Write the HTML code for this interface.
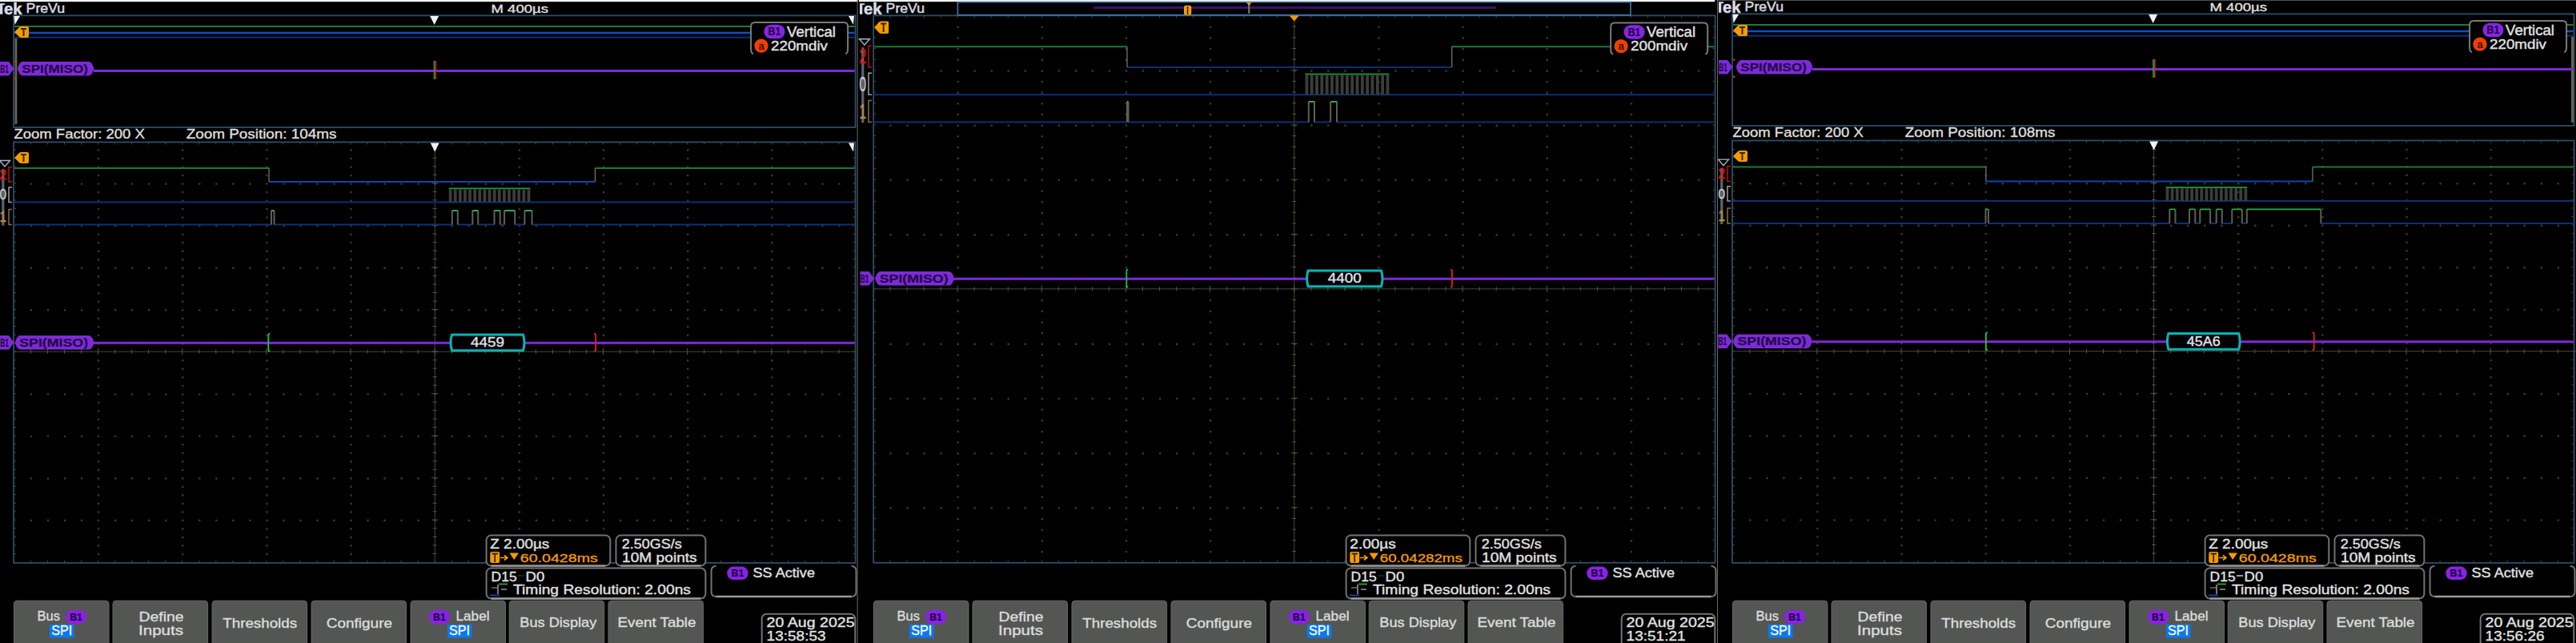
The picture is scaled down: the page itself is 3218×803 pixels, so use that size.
<!DOCTYPE html><html><head><meta charset="utf-8"><style>html,body{margin:0;padding:0;background:#000;overflow:hidden}svg{display:block}</style></head><body><svg width="3218" height="803" viewBox="0 0 3218 803" font-family='"Liberation Sans", sans-serif'>
<rect x="0.00" y="0.00" width="3218.00" height="803.00" rx="0" fill="#000" stroke="none" stroke-width="1" />
<rect x="-1.00" y="0.00" width="1073.00" height="2.20" rx="0" fill="#f2f2f2" stroke="none" stroke-width="1" />
<rect x="0.00" y="4.20" width="3.30" height="13.60" rx="0" fill="#d8d8e0" stroke="none" stroke-width="1" />
<rect x="3.00" y="4.20" width="3.20" height="2.00" rx="0" fill="#c8c8d0" stroke="none" stroke-width="1" />
<text x="5.00" y="17.80" font-size="19.5" fill="#dcdce4" font-weight="bold" text-anchor="start" textLength="22.5" lengthAdjust="spacingAndGlyphs" stroke="#dcdce4" stroke-width="0.5">ek</text>
<text x="32.60" y="15.90" font-size="17" fill="#d8d8e0" font-weight="normal" text-anchor="start" textLength="48.5" lengthAdjust="spacingAndGlyphs" stroke="#d8d8e0" stroke-width="0.5">PreVu</text>
<text x="613.50" y="15.50" font-size="15.5" fill="#e0e0e0" font-weight="normal" text-anchor="start" textLength="71.5" lengthAdjust="spacingAndGlyphs" stroke="#e0e0e0" stroke-width="0.34" >M 400µs</text>
<rect x="17.00" y="19.40" width="1051.60" height="139.60" rx="0" fill="none" stroke="#2f4d68" stroke-width="1.8" />
<line x1="18.00" y1="33.00" x2="1067.60" y2="33.00" stroke="#1c7a36" stroke-width="2" />
<line x1="18.00" y1="41.00" x2="1067.60" y2="41.00" stroke="#0d4ec4" stroke-width="2.4" />
<line x1="18.00" y1="46.70" x2="1067.60" y2="46.70" stroke="#0a3078" stroke-width="2" />
<rect x="18.50" y="48.00" width="2.80" height="107.00" rx="0" fill="#6b6650" stroke="none" stroke-width="1" />
<line x1="117.00" y1="88.60" x2="1067.60" y2="88.60" stroke="#7d2bd6" stroke-width="3" />
<path d="M542.50 76.00V99.00" fill="none" stroke="#20b040" stroke-width="1.6" />
<path d="M544.30 76.00V99.00" fill="none" stroke="#d02020" stroke-width="1.6" />
<path d="M27.80 77.00H111.40Q115.40 78.00 117.40 85.75Q115.40 93.50 111.40 94.50H27.80Q23.80 93.50 21.80 85.75Q23.80 78.00 27.80 77.00Z" fill="#7d2bd6" stroke="none" stroke-width="1" />
<text x="27.30" y="91.05" font-size="15.3" fill="#240848" font-weight="bold" text-anchor="start" textLength="82.6" lengthAdjust="spacingAndGlyphs" stroke="#240848" stroke-width="0.2">SPI(MISO)</text>
<path d="M0.00 77.00H11.00L17.50 85.75L11.00 94.50H0.00Z" fill="#7d2bd6" stroke="none" stroke-width="1" />
<text x="0.30" y="90.75" font-size="14" fill="#240848" font-weight="bold" text-anchor="start" textLength="10.5" lengthAdjust="spacingAndGlyphs" stroke="#240848" stroke-width="0.2">B1</text>
<path d="M18.00 40.00L24.00 34.00Q25.00 33.00 27.00 33.00H34.00Q36.00 33.00 36.00 35.00V45.00Q36.00 47.00 34.00 47.00H27.00Q25.00 47.00 24.00 46.00Z" fill="#f59b00" stroke="none" stroke-width="1" />
<path d="M26.00 36.00H33.00M29.50 36.00V45.00" fill="none" stroke="#3a2600" stroke-width="2" />
<circle cx="19.20" cy="76.80" r="1.3" fill="#d03020"/><circle cx="19.20" cy="97.90" r="1.3" fill="#d03020"/>
<path d="M17.50 20.00H25.00L18.50 31.00Z" fill="#f0f0ff" stroke="none" stroke-width="1" />
<path d="M537.10 20.00H548.10L542.60 31.00Z" fill="#f0f0ff" stroke="none" stroke-width="1" />
<path d="M1060.00 20.00H1067.00L1066.00 31.00Z" fill="#f0f0ff" stroke="none" stroke-width="1" />
<rect x="939.10" y="29.10" width="119" height="37" fill="#000"/>
<path d="M938.10 61.10V33.10Q938.10 28.10 943.10 28.10H1054.10Q1059.10 28.10 1059.10 33.10V61.10M938.10 61.10Q938.10 67.10 941.10 67.10M1059.10 61.10Q1059.10 67.10 1056.10 67.10" fill="none" stroke="#7a7a7a" stroke-width="2"/>
<rect x="954.40" y="30.70" width="26.10" height="17.50" rx="8.75" fill="#8a22e6" stroke="none" stroke-width="1" />
<text x="967.45" y="44.13" font-size="14.3" fill="#1a0640" font-weight="bold" text-anchor="middle" textLength="15.7" lengthAdjust="spacingAndGlyphs" stroke="#1a0640" stroke-width="0.2">B1</text>
<text x="983.00" y="45.70" font-size="18.5" fill="#e0e0e0" font-weight="normal" text-anchor="start" textLength="61.0" lengthAdjust="spacingAndGlyphs" stroke="#e0e0e0" stroke-width="0.41" >Vertical</text>
<circle cx="951.00" cy="57.20" r="8.6" fill="#f04000"/>
<text x="951.00" y="61.50" font-size="13" fill="#2a0a00" font-weight="normal" text-anchor="middle" stroke="#2a0a00" stroke-width="0.29" >a</text>
<text x="963.00" y="62.80" font-size="16.5" fill="#e0e0e0" font-weight="normal" text-anchor="start" textLength="71.0" lengthAdjust="spacingAndGlyphs" stroke="#e0e0e0" stroke-width="0.36" >220mdiv</text>
<text x="17.50" y="173.30" font-size="16.8" fill="#dedede" font-weight="normal" text-anchor="start" textLength="163.3" lengthAdjust="spacingAndGlyphs" stroke="#dedede" stroke-width="0.37" >Zoom Factor: 200 X</text>
<text x="232.70" y="173.30" font-size="16.8" fill="#dedede" font-weight="normal" text-anchor="start" textLength="187.8" lengthAdjust="spacingAndGlyphs" stroke="#dedede" stroke-width="0.37" >Zoom Position: 104ms</text>
<path d="M37.73 228.40h2.4v2.4h-2.4zM58.76 228.40h2.4v2.4h-2.4zM79.80 228.40h2.4v2.4h-2.4zM100.83 228.40h2.4v2.4h-2.4zM121.86 228.40h2.4v2.4h-2.4zM142.89 228.40h2.4v2.4h-2.4zM163.92 228.40h2.4v2.4h-2.4zM184.96 228.40h2.4v2.4h-2.4zM205.99 228.40h2.4v2.4h-2.4zM227.02 228.40h2.4v2.4h-2.4zM248.05 228.40h2.4v2.4h-2.4zM269.08 228.40h2.4v2.4h-2.4zM290.12 228.40h2.4v2.4h-2.4zM311.15 228.40h2.4v2.4h-2.4zM332.18 228.40h2.4v2.4h-2.4zM353.21 228.40h2.4v2.4h-2.4zM374.24 228.40h2.4v2.4h-2.4zM395.28 228.40h2.4v2.4h-2.4zM416.31 228.40h2.4v2.4h-2.4zM437.34 228.40h2.4v2.4h-2.4zM458.37 228.40h2.4v2.4h-2.4zM479.40 228.40h2.4v2.4h-2.4zM500.44 228.40h2.4v2.4h-2.4zM521.47 228.40h2.4v2.4h-2.4zM542.50 228.40h2.4v2.4h-2.4zM563.53 228.40h2.4v2.4h-2.4zM584.56 228.40h2.4v2.4h-2.4zM605.60 228.40h2.4v2.4h-2.4zM626.63 228.40h2.4v2.4h-2.4zM647.66 228.40h2.4v2.4h-2.4zM668.69 228.40h2.4v2.4h-2.4zM689.72 228.40h2.4v2.4h-2.4zM710.76 228.40h2.4v2.4h-2.4zM731.79 228.40h2.4v2.4h-2.4zM752.82 228.40h2.4v2.4h-2.4zM773.85 228.40h2.4v2.4h-2.4zM794.88 228.40h2.4v2.4h-2.4zM815.92 228.40h2.4v2.4h-2.4zM836.95 228.40h2.4v2.4h-2.4zM857.98 228.40h2.4v2.4h-2.4zM879.01 228.40h2.4v2.4h-2.4zM900.04 228.40h2.4v2.4h-2.4zM921.08 228.40h2.4v2.4h-2.4zM942.11 228.40h2.4v2.4h-2.4zM963.14 228.40h2.4v2.4h-2.4zM984.17 228.40h2.4v2.4h-2.4zM1005.20 228.40h2.4v2.4h-2.4zM1026.24 228.40h2.4v2.4h-2.4zM1047.27 228.40h2.4v2.4h-2.4zM37.73 280.95h2.4v2.4h-2.4zM58.76 280.95h2.4v2.4h-2.4zM79.80 280.95h2.4v2.4h-2.4zM100.83 280.95h2.4v2.4h-2.4zM121.86 280.95h2.4v2.4h-2.4zM142.89 280.95h2.4v2.4h-2.4zM163.92 280.95h2.4v2.4h-2.4zM184.96 280.95h2.4v2.4h-2.4zM205.99 280.95h2.4v2.4h-2.4zM227.02 280.95h2.4v2.4h-2.4zM248.05 280.95h2.4v2.4h-2.4zM269.08 280.95h2.4v2.4h-2.4zM290.12 280.95h2.4v2.4h-2.4zM311.15 280.95h2.4v2.4h-2.4zM332.18 280.95h2.4v2.4h-2.4zM353.21 280.95h2.4v2.4h-2.4zM374.24 280.95h2.4v2.4h-2.4zM395.28 280.95h2.4v2.4h-2.4zM416.31 280.95h2.4v2.4h-2.4zM437.34 280.95h2.4v2.4h-2.4zM458.37 280.95h2.4v2.4h-2.4zM479.40 280.95h2.4v2.4h-2.4zM500.44 280.95h2.4v2.4h-2.4zM521.47 280.95h2.4v2.4h-2.4zM542.50 280.95h2.4v2.4h-2.4zM563.53 280.95h2.4v2.4h-2.4zM584.56 280.95h2.4v2.4h-2.4zM605.60 280.95h2.4v2.4h-2.4zM626.63 280.95h2.4v2.4h-2.4zM647.66 280.95h2.4v2.4h-2.4zM668.69 280.95h2.4v2.4h-2.4zM689.72 280.95h2.4v2.4h-2.4zM710.76 280.95h2.4v2.4h-2.4zM731.79 280.95h2.4v2.4h-2.4zM752.82 280.95h2.4v2.4h-2.4zM773.85 280.95h2.4v2.4h-2.4zM794.88 280.95h2.4v2.4h-2.4zM815.92 280.95h2.4v2.4h-2.4zM836.95 280.95h2.4v2.4h-2.4zM857.98 280.95h2.4v2.4h-2.4zM879.01 280.95h2.4v2.4h-2.4zM900.04 280.95h2.4v2.4h-2.4zM921.08 280.95h2.4v2.4h-2.4zM942.11 280.95h2.4v2.4h-2.4zM963.14 280.95h2.4v2.4h-2.4zM984.17 280.95h2.4v2.4h-2.4zM1005.20 280.95h2.4v2.4h-2.4zM1026.24 280.95h2.4v2.4h-2.4zM1047.27 280.95h2.4v2.4h-2.4zM37.73 333.50h2.4v2.4h-2.4zM58.76 333.50h2.4v2.4h-2.4zM79.80 333.50h2.4v2.4h-2.4zM100.83 333.50h2.4v2.4h-2.4zM121.86 333.50h2.4v2.4h-2.4zM142.89 333.50h2.4v2.4h-2.4zM163.92 333.50h2.4v2.4h-2.4zM184.96 333.50h2.4v2.4h-2.4zM205.99 333.50h2.4v2.4h-2.4zM227.02 333.50h2.4v2.4h-2.4zM248.05 333.50h2.4v2.4h-2.4zM269.08 333.50h2.4v2.4h-2.4zM290.12 333.50h2.4v2.4h-2.4zM311.15 333.50h2.4v2.4h-2.4zM332.18 333.50h2.4v2.4h-2.4zM353.21 333.50h2.4v2.4h-2.4zM374.24 333.50h2.4v2.4h-2.4zM395.28 333.50h2.4v2.4h-2.4zM416.31 333.50h2.4v2.4h-2.4zM437.34 333.50h2.4v2.4h-2.4zM458.37 333.50h2.4v2.4h-2.4zM479.40 333.50h2.4v2.4h-2.4zM500.44 333.50h2.4v2.4h-2.4zM521.47 333.50h2.4v2.4h-2.4zM542.50 333.50h2.4v2.4h-2.4zM563.53 333.50h2.4v2.4h-2.4zM584.56 333.50h2.4v2.4h-2.4zM605.60 333.50h2.4v2.4h-2.4zM626.63 333.50h2.4v2.4h-2.4zM647.66 333.50h2.4v2.4h-2.4zM668.69 333.50h2.4v2.4h-2.4zM689.72 333.50h2.4v2.4h-2.4zM710.76 333.50h2.4v2.4h-2.4zM731.79 333.50h2.4v2.4h-2.4zM752.82 333.50h2.4v2.4h-2.4zM773.85 333.50h2.4v2.4h-2.4zM794.88 333.50h2.4v2.4h-2.4zM815.92 333.50h2.4v2.4h-2.4zM836.95 333.50h2.4v2.4h-2.4zM857.98 333.50h2.4v2.4h-2.4zM879.01 333.50h2.4v2.4h-2.4zM900.04 333.50h2.4v2.4h-2.4zM921.08 333.50h2.4v2.4h-2.4zM942.11 333.50h2.4v2.4h-2.4zM963.14 333.50h2.4v2.4h-2.4zM984.17 333.50h2.4v2.4h-2.4zM1005.20 333.50h2.4v2.4h-2.4zM1026.24 333.50h2.4v2.4h-2.4zM1047.27 333.50h2.4v2.4h-2.4zM37.73 386.05h2.4v2.4h-2.4zM58.76 386.05h2.4v2.4h-2.4zM79.80 386.05h2.4v2.4h-2.4zM100.83 386.05h2.4v2.4h-2.4zM121.86 386.05h2.4v2.4h-2.4zM142.89 386.05h2.4v2.4h-2.4zM163.92 386.05h2.4v2.4h-2.4zM184.96 386.05h2.4v2.4h-2.4zM205.99 386.05h2.4v2.4h-2.4zM227.02 386.05h2.4v2.4h-2.4zM248.05 386.05h2.4v2.4h-2.4zM269.08 386.05h2.4v2.4h-2.4zM290.12 386.05h2.4v2.4h-2.4zM311.15 386.05h2.4v2.4h-2.4zM332.18 386.05h2.4v2.4h-2.4zM353.21 386.05h2.4v2.4h-2.4zM374.24 386.05h2.4v2.4h-2.4zM395.28 386.05h2.4v2.4h-2.4zM416.31 386.05h2.4v2.4h-2.4zM437.34 386.05h2.4v2.4h-2.4zM458.37 386.05h2.4v2.4h-2.4zM479.40 386.05h2.4v2.4h-2.4zM500.44 386.05h2.4v2.4h-2.4zM521.47 386.05h2.4v2.4h-2.4zM542.50 386.05h2.4v2.4h-2.4zM563.53 386.05h2.4v2.4h-2.4zM584.56 386.05h2.4v2.4h-2.4zM605.60 386.05h2.4v2.4h-2.4zM626.63 386.05h2.4v2.4h-2.4zM647.66 386.05h2.4v2.4h-2.4zM668.69 386.05h2.4v2.4h-2.4zM689.72 386.05h2.4v2.4h-2.4zM710.76 386.05h2.4v2.4h-2.4zM731.79 386.05h2.4v2.4h-2.4zM752.82 386.05h2.4v2.4h-2.4zM773.85 386.05h2.4v2.4h-2.4zM794.88 386.05h2.4v2.4h-2.4zM815.92 386.05h2.4v2.4h-2.4zM836.95 386.05h2.4v2.4h-2.4zM857.98 386.05h2.4v2.4h-2.4zM879.01 386.05h2.4v2.4h-2.4zM900.04 386.05h2.4v2.4h-2.4zM921.08 386.05h2.4v2.4h-2.4zM942.11 386.05h2.4v2.4h-2.4zM963.14 386.05h2.4v2.4h-2.4zM984.17 386.05h2.4v2.4h-2.4zM1005.20 386.05h2.4v2.4h-2.4zM1026.24 386.05h2.4v2.4h-2.4zM1047.27 386.05h2.4v2.4h-2.4zM37.73 491.15h2.4v2.4h-2.4zM58.76 491.15h2.4v2.4h-2.4zM79.80 491.15h2.4v2.4h-2.4zM100.83 491.15h2.4v2.4h-2.4zM121.86 491.15h2.4v2.4h-2.4zM142.89 491.15h2.4v2.4h-2.4zM163.92 491.15h2.4v2.4h-2.4zM184.96 491.15h2.4v2.4h-2.4zM205.99 491.15h2.4v2.4h-2.4zM227.02 491.15h2.4v2.4h-2.4zM248.05 491.15h2.4v2.4h-2.4zM269.08 491.15h2.4v2.4h-2.4zM290.12 491.15h2.4v2.4h-2.4zM311.15 491.15h2.4v2.4h-2.4zM332.18 491.15h2.4v2.4h-2.4zM353.21 491.15h2.4v2.4h-2.4zM374.24 491.15h2.4v2.4h-2.4zM395.28 491.15h2.4v2.4h-2.4zM416.31 491.15h2.4v2.4h-2.4zM437.34 491.15h2.4v2.4h-2.4zM458.37 491.15h2.4v2.4h-2.4zM479.40 491.15h2.4v2.4h-2.4zM500.44 491.15h2.4v2.4h-2.4zM521.47 491.15h2.4v2.4h-2.4zM542.50 491.15h2.4v2.4h-2.4zM563.53 491.15h2.4v2.4h-2.4zM584.56 491.15h2.4v2.4h-2.4zM605.60 491.15h2.4v2.4h-2.4zM626.63 491.15h2.4v2.4h-2.4zM647.66 491.15h2.4v2.4h-2.4zM668.69 491.15h2.4v2.4h-2.4zM689.72 491.15h2.4v2.4h-2.4zM710.76 491.15h2.4v2.4h-2.4zM731.79 491.15h2.4v2.4h-2.4zM752.82 491.15h2.4v2.4h-2.4zM773.85 491.15h2.4v2.4h-2.4zM794.88 491.15h2.4v2.4h-2.4zM815.92 491.15h2.4v2.4h-2.4zM836.95 491.15h2.4v2.4h-2.4zM857.98 491.15h2.4v2.4h-2.4zM879.01 491.15h2.4v2.4h-2.4zM900.04 491.15h2.4v2.4h-2.4zM921.08 491.15h2.4v2.4h-2.4zM942.11 491.15h2.4v2.4h-2.4zM963.14 491.15h2.4v2.4h-2.4zM984.17 491.15h2.4v2.4h-2.4zM1005.20 491.15h2.4v2.4h-2.4zM1026.24 491.15h2.4v2.4h-2.4zM1047.27 491.15h2.4v2.4h-2.4zM37.73 543.70h2.4v2.4h-2.4zM58.76 543.70h2.4v2.4h-2.4zM79.80 543.70h2.4v2.4h-2.4zM100.83 543.70h2.4v2.4h-2.4zM121.86 543.70h2.4v2.4h-2.4zM142.89 543.70h2.4v2.4h-2.4zM163.92 543.70h2.4v2.4h-2.4zM184.96 543.70h2.4v2.4h-2.4zM205.99 543.70h2.4v2.4h-2.4zM227.02 543.70h2.4v2.4h-2.4zM248.05 543.70h2.4v2.4h-2.4zM269.08 543.70h2.4v2.4h-2.4zM290.12 543.70h2.4v2.4h-2.4zM311.15 543.70h2.4v2.4h-2.4zM332.18 543.70h2.4v2.4h-2.4zM353.21 543.70h2.4v2.4h-2.4zM374.24 543.70h2.4v2.4h-2.4zM395.28 543.70h2.4v2.4h-2.4zM416.31 543.70h2.4v2.4h-2.4zM437.34 543.70h2.4v2.4h-2.4zM458.37 543.70h2.4v2.4h-2.4zM479.40 543.70h2.4v2.4h-2.4zM500.44 543.70h2.4v2.4h-2.4zM521.47 543.70h2.4v2.4h-2.4zM542.50 543.70h2.4v2.4h-2.4zM563.53 543.70h2.4v2.4h-2.4zM584.56 543.70h2.4v2.4h-2.4zM605.60 543.70h2.4v2.4h-2.4zM626.63 543.70h2.4v2.4h-2.4zM647.66 543.70h2.4v2.4h-2.4zM668.69 543.70h2.4v2.4h-2.4zM689.72 543.70h2.4v2.4h-2.4zM710.76 543.70h2.4v2.4h-2.4zM731.79 543.70h2.4v2.4h-2.4zM752.82 543.70h2.4v2.4h-2.4zM773.85 543.70h2.4v2.4h-2.4zM794.88 543.70h2.4v2.4h-2.4zM815.92 543.70h2.4v2.4h-2.4zM836.95 543.70h2.4v2.4h-2.4zM857.98 543.70h2.4v2.4h-2.4zM879.01 543.70h2.4v2.4h-2.4zM900.04 543.70h2.4v2.4h-2.4zM921.08 543.70h2.4v2.4h-2.4zM942.11 543.70h2.4v2.4h-2.4zM963.14 543.70h2.4v2.4h-2.4zM984.17 543.70h2.4v2.4h-2.4zM1005.20 543.70h2.4v2.4h-2.4zM1026.24 543.70h2.4v2.4h-2.4zM1047.27 543.70h2.4v2.4h-2.4zM37.73 596.25h2.4v2.4h-2.4zM58.76 596.25h2.4v2.4h-2.4zM79.80 596.25h2.4v2.4h-2.4zM100.83 596.25h2.4v2.4h-2.4zM121.86 596.25h2.4v2.4h-2.4zM142.89 596.25h2.4v2.4h-2.4zM163.92 596.25h2.4v2.4h-2.4zM184.96 596.25h2.4v2.4h-2.4zM205.99 596.25h2.4v2.4h-2.4zM227.02 596.25h2.4v2.4h-2.4zM248.05 596.25h2.4v2.4h-2.4zM269.08 596.25h2.4v2.4h-2.4zM290.12 596.25h2.4v2.4h-2.4zM311.15 596.25h2.4v2.4h-2.4zM332.18 596.25h2.4v2.4h-2.4zM353.21 596.25h2.4v2.4h-2.4zM374.24 596.25h2.4v2.4h-2.4zM395.28 596.25h2.4v2.4h-2.4zM416.31 596.25h2.4v2.4h-2.4zM437.34 596.25h2.4v2.4h-2.4zM458.37 596.25h2.4v2.4h-2.4zM479.40 596.25h2.4v2.4h-2.4zM500.44 596.25h2.4v2.4h-2.4zM521.47 596.25h2.4v2.4h-2.4zM542.50 596.25h2.4v2.4h-2.4zM563.53 596.25h2.4v2.4h-2.4zM584.56 596.25h2.4v2.4h-2.4zM605.60 596.25h2.4v2.4h-2.4zM626.63 596.25h2.4v2.4h-2.4zM647.66 596.25h2.4v2.4h-2.4zM668.69 596.25h2.4v2.4h-2.4zM689.72 596.25h2.4v2.4h-2.4zM710.76 596.25h2.4v2.4h-2.4zM731.79 596.25h2.4v2.4h-2.4zM752.82 596.25h2.4v2.4h-2.4zM773.85 596.25h2.4v2.4h-2.4zM794.88 596.25h2.4v2.4h-2.4zM815.92 596.25h2.4v2.4h-2.4zM836.95 596.25h2.4v2.4h-2.4zM857.98 596.25h2.4v2.4h-2.4zM879.01 596.25h2.4v2.4h-2.4zM900.04 596.25h2.4v2.4h-2.4zM921.08 596.25h2.4v2.4h-2.4zM942.11 596.25h2.4v2.4h-2.4zM963.14 596.25h2.4v2.4h-2.4zM984.17 596.25h2.4v2.4h-2.4zM1005.20 596.25h2.4v2.4h-2.4zM1026.24 596.25h2.4v2.4h-2.4zM1047.27 596.25h2.4v2.4h-2.4zM37.73 648.80h2.4v2.4h-2.4zM58.76 648.80h2.4v2.4h-2.4zM79.80 648.80h2.4v2.4h-2.4zM100.83 648.80h2.4v2.4h-2.4zM121.86 648.80h2.4v2.4h-2.4zM142.89 648.80h2.4v2.4h-2.4zM163.92 648.80h2.4v2.4h-2.4zM184.96 648.80h2.4v2.4h-2.4zM205.99 648.80h2.4v2.4h-2.4zM227.02 648.80h2.4v2.4h-2.4zM248.05 648.80h2.4v2.4h-2.4zM269.08 648.80h2.4v2.4h-2.4zM290.12 648.80h2.4v2.4h-2.4zM311.15 648.80h2.4v2.4h-2.4zM332.18 648.80h2.4v2.4h-2.4zM353.21 648.80h2.4v2.4h-2.4zM374.24 648.80h2.4v2.4h-2.4zM395.28 648.80h2.4v2.4h-2.4zM416.31 648.80h2.4v2.4h-2.4zM437.34 648.80h2.4v2.4h-2.4zM458.37 648.80h2.4v2.4h-2.4zM479.40 648.80h2.4v2.4h-2.4zM500.44 648.80h2.4v2.4h-2.4zM521.47 648.80h2.4v2.4h-2.4zM542.50 648.80h2.4v2.4h-2.4zM563.53 648.80h2.4v2.4h-2.4zM584.56 648.80h2.4v2.4h-2.4zM605.60 648.80h2.4v2.4h-2.4zM626.63 648.80h2.4v2.4h-2.4zM647.66 648.80h2.4v2.4h-2.4zM668.69 648.80h2.4v2.4h-2.4zM689.72 648.80h2.4v2.4h-2.4zM710.76 648.80h2.4v2.4h-2.4zM731.79 648.80h2.4v2.4h-2.4zM752.82 648.80h2.4v2.4h-2.4zM773.85 648.80h2.4v2.4h-2.4zM794.88 648.80h2.4v2.4h-2.4zM815.92 648.80h2.4v2.4h-2.4zM836.95 648.80h2.4v2.4h-2.4zM857.98 648.80h2.4v2.4h-2.4zM879.01 648.80h2.4v2.4h-2.4zM900.04 648.80h2.4v2.4h-2.4zM921.08 648.80h2.4v2.4h-2.4zM942.11 648.80h2.4v2.4h-2.4zM963.14 648.80h2.4v2.4h-2.4zM984.17 648.80h2.4v2.4h-2.4zM1005.20 648.80h2.4v2.4h-2.4zM1026.24 648.80h2.4v2.4h-2.4zM1047.27 648.80h2.4v2.4h-2.4zM121.86 186.36h2.4v2.4h-2.4zM121.86 196.87h2.4v2.4h-2.4zM121.86 207.38h2.4v2.4h-2.4zM121.86 217.89h2.4v2.4h-2.4zM121.86 238.91h2.4v2.4h-2.4zM121.86 249.42h2.4v2.4h-2.4zM121.86 259.93h2.4v2.4h-2.4zM121.86 270.44h2.4v2.4h-2.4zM121.86 291.46h2.4v2.4h-2.4zM121.86 301.97h2.4v2.4h-2.4zM121.86 312.48h2.4v2.4h-2.4zM121.86 322.99h2.4v2.4h-2.4zM121.86 344.01h2.4v2.4h-2.4zM121.86 354.52h2.4v2.4h-2.4zM121.86 365.03h2.4v2.4h-2.4zM121.86 375.54h2.4v2.4h-2.4zM121.86 396.56h2.4v2.4h-2.4zM121.86 407.07h2.4v2.4h-2.4zM121.86 417.58h2.4v2.4h-2.4zM121.86 428.09h2.4v2.4h-2.4zM121.86 449.11h2.4v2.4h-2.4zM121.86 459.62h2.4v2.4h-2.4zM121.86 470.13h2.4v2.4h-2.4zM121.86 480.64h2.4v2.4h-2.4zM121.86 501.66h2.4v2.4h-2.4zM121.86 512.17h2.4v2.4h-2.4zM121.86 522.68h2.4v2.4h-2.4zM121.86 533.19h2.4v2.4h-2.4zM121.86 554.21h2.4v2.4h-2.4zM121.86 564.72h2.4v2.4h-2.4zM121.86 575.23h2.4v2.4h-2.4zM121.86 585.74h2.4v2.4h-2.4zM121.86 606.76h2.4v2.4h-2.4zM121.86 617.27h2.4v2.4h-2.4zM121.86 627.78h2.4v2.4h-2.4zM121.86 638.29h2.4v2.4h-2.4zM121.86 659.31h2.4v2.4h-2.4zM121.86 669.82h2.4v2.4h-2.4zM121.86 680.33h2.4v2.4h-2.4zM121.86 690.84h2.4v2.4h-2.4zM227.02 186.36h2.4v2.4h-2.4zM227.02 196.87h2.4v2.4h-2.4zM227.02 207.38h2.4v2.4h-2.4zM227.02 217.89h2.4v2.4h-2.4zM227.02 238.91h2.4v2.4h-2.4zM227.02 249.42h2.4v2.4h-2.4zM227.02 259.93h2.4v2.4h-2.4zM227.02 270.44h2.4v2.4h-2.4zM227.02 291.46h2.4v2.4h-2.4zM227.02 301.97h2.4v2.4h-2.4zM227.02 312.48h2.4v2.4h-2.4zM227.02 322.99h2.4v2.4h-2.4zM227.02 344.01h2.4v2.4h-2.4zM227.02 354.52h2.4v2.4h-2.4zM227.02 365.03h2.4v2.4h-2.4zM227.02 375.54h2.4v2.4h-2.4zM227.02 396.56h2.4v2.4h-2.4zM227.02 407.07h2.4v2.4h-2.4zM227.02 417.58h2.4v2.4h-2.4zM227.02 428.09h2.4v2.4h-2.4zM227.02 449.11h2.4v2.4h-2.4zM227.02 459.62h2.4v2.4h-2.4zM227.02 470.13h2.4v2.4h-2.4zM227.02 480.64h2.4v2.4h-2.4zM227.02 501.66h2.4v2.4h-2.4zM227.02 512.17h2.4v2.4h-2.4zM227.02 522.68h2.4v2.4h-2.4zM227.02 533.19h2.4v2.4h-2.4zM227.02 554.21h2.4v2.4h-2.4zM227.02 564.72h2.4v2.4h-2.4zM227.02 575.23h2.4v2.4h-2.4zM227.02 585.74h2.4v2.4h-2.4zM227.02 606.76h2.4v2.4h-2.4zM227.02 617.27h2.4v2.4h-2.4zM227.02 627.78h2.4v2.4h-2.4zM227.02 638.29h2.4v2.4h-2.4zM227.02 659.31h2.4v2.4h-2.4zM227.02 669.82h2.4v2.4h-2.4zM227.02 680.33h2.4v2.4h-2.4zM227.02 690.84h2.4v2.4h-2.4zM332.18 186.36h2.4v2.4h-2.4zM332.18 196.87h2.4v2.4h-2.4zM332.18 207.38h2.4v2.4h-2.4zM332.18 217.89h2.4v2.4h-2.4zM332.18 238.91h2.4v2.4h-2.4zM332.18 249.42h2.4v2.4h-2.4zM332.18 259.93h2.4v2.4h-2.4zM332.18 270.44h2.4v2.4h-2.4zM332.18 291.46h2.4v2.4h-2.4zM332.18 301.97h2.4v2.4h-2.4zM332.18 312.48h2.4v2.4h-2.4zM332.18 322.99h2.4v2.4h-2.4zM332.18 344.01h2.4v2.4h-2.4zM332.18 354.52h2.4v2.4h-2.4zM332.18 365.03h2.4v2.4h-2.4zM332.18 375.54h2.4v2.4h-2.4zM332.18 396.56h2.4v2.4h-2.4zM332.18 407.07h2.4v2.4h-2.4zM332.18 417.58h2.4v2.4h-2.4zM332.18 428.09h2.4v2.4h-2.4zM332.18 449.11h2.4v2.4h-2.4zM332.18 459.62h2.4v2.4h-2.4zM332.18 470.13h2.4v2.4h-2.4zM332.18 480.64h2.4v2.4h-2.4zM332.18 501.66h2.4v2.4h-2.4zM332.18 512.17h2.4v2.4h-2.4zM332.18 522.68h2.4v2.4h-2.4zM332.18 533.19h2.4v2.4h-2.4zM332.18 554.21h2.4v2.4h-2.4zM332.18 564.72h2.4v2.4h-2.4zM332.18 575.23h2.4v2.4h-2.4zM332.18 585.74h2.4v2.4h-2.4zM332.18 606.76h2.4v2.4h-2.4zM332.18 617.27h2.4v2.4h-2.4zM332.18 627.78h2.4v2.4h-2.4zM332.18 638.29h2.4v2.4h-2.4zM332.18 659.31h2.4v2.4h-2.4zM332.18 669.82h2.4v2.4h-2.4zM332.18 680.33h2.4v2.4h-2.4zM332.18 690.84h2.4v2.4h-2.4zM437.34 186.36h2.4v2.4h-2.4zM437.34 196.87h2.4v2.4h-2.4zM437.34 207.38h2.4v2.4h-2.4zM437.34 217.89h2.4v2.4h-2.4zM437.34 238.91h2.4v2.4h-2.4zM437.34 249.42h2.4v2.4h-2.4zM437.34 259.93h2.4v2.4h-2.4zM437.34 270.44h2.4v2.4h-2.4zM437.34 291.46h2.4v2.4h-2.4zM437.34 301.97h2.4v2.4h-2.4zM437.34 312.48h2.4v2.4h-2.4zM437.34 322.99h2.4v2.4h-2.4zM437.34 344.01h2.4v2.4h-2.4zM437.34 354.52h2.4v2.4h-2.4zM437.34 365.03h2.4v2.4h-2.4zM437.34 375.54h2.4v2.4h-2.4zM437.34 396.56h2.4v2.4h-2.4zM437.34 407.07h2.4v2.4h-2.4zM437.34 417.58h2.4v2.4h-2.4zM437.34 428.09h2.4v2.4h-2.4zM437.34 449.11h2.4v2.4h-2.4zM437.34 459.62h2.4v2.4h-2.4zM437.34 470.13h2.4v2.4h-2.4zM437.34 480.64h2.4v2.4h-2.4zM437.34 501.66h2.4v2.4h-2.4zM437.34 512.17h2.4v2.4h-2.4zM437.34 522.68h2.4v2.4h-2.4zM437.34 533.19h2.4v2.4h-2.4zM437.34 554.21h2.4v2.4h-2.4zM437.34 564.72h2.4v2.4h-2.4zM437.34 575.23h2.4v2.4h-2.4zM437.34 585.74h2.4v2.4h-2.4zM437.34 606.76h2.4v2.4h-2.4zM437.34 617.27h2.4v2.4h-2.4zM437.34 627.78h2.4v2.4h-2.4zM437.34 638.29h2.4v2.4h-2.4zM437.34 659.31h2.4v2.4h-2.4zM437.34 669.82h2.4v2.4h-2.4zM437.34 680.33h2.4v2.4h-2.4zM437.34 690.84h2.4v2.4h-2.4zM647.66 186.36h2.4v2.4h-2.4zM647.66 196.87h2.4v2.4h-2.4zM647.66 207.38h2.4v2.4h-2.4zM647.66 217.89h2.4v2.4h-2.4zM647.66 238.91h2.4v2.4h-2.4zM647.66 249.42h2.4v2.4h-2.4zM647.66 259.93h2.4v2.4h-2.4zM647.66 270.44h2.4v2.4h-2.4zM647.66 291.46h2.4v2.4h-2.4zM647.66 301.97h2.4v2.4h-2.4zM647.66 312.48h2.4v2.4h-2.4zM647.66 322.99h2.4v2.4h-2.4zM647.66 344.01h2.4v2.4h-2.4zM647.66 354.52h2.4v2.4h-2.4zM647.66 365.03h2.4v2.4h-2.4zM647.66 375.54h2.4v2.4h-2.4zM647.66 396.56h2.4v2.4h-2.4zM647.66 407.07h2.4v2.4h-2.4zM647.66 417.58h2.4v2.4h-2.4zM647.66 428.09h2.4v2.4h-2.4zM647.66 449.11h2.4v2.4h-2.4zM647.66 459.62h2.4v2.4h-2.4zM647.66 470.13h2.4v2.4h-2.4zM647.66 480.64h2.4v2.4h-2.4zM647.66 501.66h2.4v2.4h-2.4zM647.66 512.17h2.4v2.4h-2.4zM647.66 522.68h2.4v2.4h-2.4zM647.66 533.19h2.4v2.4h-2.4zM647.66 554.21h2.4v2.4h-2.4zM647.66 564.72h2.4v2.4h-2.4zM647.66 575.23h2.4v2.4h-2.4zM647.66 585.74h2.4v2.4h-2.4zM647.66 606.76h2.4v2.4h-2.4zM647.66 617.27h2.4v2.4h-2.4zM647.66 627.78h2.4v2.4h-2.4zM647.66 638.29h2.4v2.4h-2.4zM647.66 659.31h2.4v2.4h-2.4zM647.66 669.82h2.4v2.4h-2.4zM647.66 680.33h2.4v2.4h-2.4zM647.66 690.84h2.4v2.4h-2.4zM752.82 186.36h2.4v2.4h-2.4zM752.82 196.87h2.4v2.4h-2.4zM752.82 207.38h2.4v2.4h-2.4zM752.82 217.89h2.4v2.4h-2.4zM752.82 238.91h2.4v2.4h-2.4zM752.82 249.42h2.4v2.4h-2.4zM752.82 259.93h2.4v2.4h-2.4zM752.82 270.44h2.4v2.4h-2.4zM752.82 291.46h2.4v2.4h-2.4zM752.82 301.97h2.4v2.4h-2.4zM752.82 312.48h2.4v2.4h-2.4zM752.82 322.99h2.4v2.4h-2.4zM752.82 344.01h2.4v2.4h-2.4zM752.82 354.52h2.4v2.4h-2.4zM752.82 365.03h2.4v2.4h-2.4zM752.82 375.54h2.4v2.4h-2.4zM752.82 396.56h2.4v2.4h-2.4zM752.82 407.07h2.4v2.4h-2.4zM752.82 417.58h2.4v2.4h-2.4zM752.82 428.09h2.4v2.4h-2.4zM752.82 449.11h2.4v2.4h-2.4zM752.82 459.62h2.4v2.4h-2.4zM752.82 470.13h2.4v2.4h-2.4zM752.82 480.64h2.4v2.4h-2.4zM752.82 501.66h2.4v2.4h-2.4zM752.82 512.17h2.4v2.4h-2.4zM752.82 522.68h2.4v2.4h-2.4zM752.82 533.19h2.4v2.4h-2.4zM752.82 554.21h2.4v2.4h-2.4zM752.82 564.72h2.4v2.4h-2.4zM752.82 575.23h2.4v2.4h-2.4zM752.82 585.74h2.4v2.4h-2.4zM752.82 606.76h2.4v2.4h-2.4zM752.82 617.27h2.4v2.4h-2.4zM752.82 627.78h2.4v2.4h-2.4zM752.82 638.29h2.4v2.4h-2.4zM752.82 659.31h2.4v2.4h-2.4zM752.82 669.82h2.4v2.4h-2.4zM752.82 680.33h2.4v2.4h-2.4zM752.82 690.84h2.4v2.4h-2.4zM857.98 186.36h2.4v2.4h-2.4zM857.98 196.87h2.4v2.4h-2.4zM857.98 207.38h2.4v2.4h-2.4zM857.98 217.89h2.4v2.4h-2.4zM857.98 238.91h2.4v2.4h-2.4zM857.98 249.42h2.4v2.4h-2.4zM857.98 259.93h2.4v2.4h-2.4zM857.98 270.44h2.4v2.4h-2.4zM857.98 291.46h2.4v2.4h-2.4zM857.98 301.97h2.4v2.4h-2.4zM857.98 312.48h2.4v2.4h-2.4zM857.98 322.99h2.4v2.4h-2.4zM857.98 344.01h2.4v2.4h-2.4zM857.98 354.52h2.4v2.4h-2.4zM857.98 365.03h2.4v2.4h-2.4zM857.98 375.54h2.4v2.4h-2.4zM857.98 396.56h2.4v2.4h-2.4zM857.98 407.07h2.4v2.4h-2.4zM857.98 417.58h2.4v2.4h-2.4zM857.98 428.09h2.4v2.4h-2.4zM857.98 449.11h2.4v2.4h-2.4zM857.98 459.62h2.4v2.4h-2.4zM857.98 470.13h2.4v2.4h-2.4zM857.98 480.64h2.4v2.4h-2.4zM857.98 501.66h2.4v2.4h-2.4zM857.98 512.17h2.4v2.4h-2.4zM857.98 522.68h2.4v2.4h-2.4zM857.98 533.19h2.4v2.4h-2.4zM857.98 554.21h2.4v2.4h-2.4zM857.98 564.72h2.4v2.4h-2.4zM857.98 575.23h2.4v2.4h-2.4zM857.98 585.74h2.4v2.4h-2.4zM857.98 606.76h2.4v2.4h-2.4zM857.98 617.27h2.4v2.4h-2.4zM857.98 627.78h2.4v2.4h-2.4zM857.98 638.29h2.4v2.4h-2.4zM857.98 659.31h2.4v2.4h-2.4zM857.98 669.82h2.4v2.4h-2.4zM857.98 680.33h2.4v2.4h-2.4zM857.98 690.84h2.4v2.4h-2.4zM963.14 186.36h2.4v2.4h-2.4zM963.14 196.87h2.4v2.4h-2.4zM963.14 207.38h2.4v2.4h-2.4zM963.14 217.89h2.4v2.4h-2.4zM963.14 238.91h2.4v2.4h-2.4zM963.14 249.42h2.4v2.4h-2.4zM963.14 259.93h2.4v2.4h-2.4zM963.14 270.44h2.4v2.4h-2.4zM963.14 291.46h2.4v2.4h-2.4zM963.14 301.97h2.4v2.4h-2.4zM963.14 312.48h2.4v2.4h-2.4zM963.14 322.99h2.4v2.4h-2.4zM963.14 344.01h2.4v2.4h-2.4zM963.14 354.52h2.4v2.4h-2.4zM963.14 365.03h2.4v2.4h-2.4zM963.14 375.54h2.4v2.4h-2.4zM963.14 396.56h2.4v2.4h-2.4zM963.14 407.07h2.4v2.4h-2.4zM963.14 417.58h2.4v2.4h-2.4zM963.14 428.09h2.4v2.4h-2.4zM963.14 449.11h2.4v2.4h-2.4zM963.14 459.62h2.4v2.4h-2.4zM963.14 470.13h2.4v2.4h-2.4zM963.14 480.64h2.4v2.4h-2.4zM963.14 501.66h2.4v2.4h-2.4zM963.14 512.17h2.4v2.4h-2.4zM963.14 522.68h2.4v2.4h-2.4zM963.14 533.19h2.4v2.4h-2.4zM963.14 554.21h2.4v2.4h-2.4zM963.14 564.72h2.4v2.4h-2.4zM963.14 575.23h2.4v2.4h-2.4zM963.14 585.74h2.4v2.4h-2.4zM963.14 606.76h2.4v2.4h-2.4zM963.14 617.27h2.4v2.4h-2.4zM963.14 627.78h2.4v2.4h-2.4zM963.14 638.29h2.4v2.4h-2.4zM963.14 659.31h2.4v2.4h-2.4zM963.14 669.82h2.4v2.4h-2.4zM963.14 680.33h2.4v2.4h-2.4zM963.14 690.84h2.4v2.4h-2.4z" fill="#3a372a" stroke="none" stroke-width="1" />
<line x1="17.00" y1="439.10" x2="1068.60" y2="439.10" stroke="#4a4636" stroke-width="1" />
<line x1="543.20" y1="177.50" x2="543.20" y2="703.00" stroke="#4a4636" stroke-width="1" />
<path d="M38.43 436.60v5.00M59.46 436.60v5.00M80.50 436.60v5.00M101.53 436.60v5.00M122.56 435.10v8.00M143.59 436.60v5.00M164.62 436.60v5.00M185.66 436.60v5.00M206.69 436.60v5.00M227.72 435.10v8.00M248.75 436.60v5.00M269.78 436.60v5.00M290.82 436.60v5.00M311.85 436.60v5.00M332.88 435.10v8.00M353.91 436.60v5.00M374.94 436.60v5.00M395.98 436.60v5.00M417.01 436.60v5.00M438.04 435.10v8.00M459.07 436.60v5.00M480.10 436.60v5.00M501.14 436.60v5.00M522.17 436.60v5.00M543.20 435.10v8.00M564.23 436.60v5.00M585.26 436.60v5.00M606.30 436.60v5.00M627.33 436.60v5.00M648.36 435.10v8.00M669.39 436.60v5.00M690.42 436.60v5.00M711.46 436.60v5.00M732.49 436.60v5.00M753.52 435.10v8.00M774.55 436.60v5.00M795.58 436.60v5.00M816.62 436.60v5.00M837.65 436.60v5.00M858.68 435.10v8.00M879.71 436.60v5.00M900.74 436.60v5.00M921.78 436.60v5.00M942.81 436.60v5.00M963.84 435.10v8.00M984.87 436.60v5.00M1005.90 436.60v5.00M1026.94 436.60v5.00M1047.97 436.60v5.00M540.70 186.86h5.00M540.70 197.37h5.00M540.70 207.88h5.00M540.70 218.39h5.00M539.20 228.90h8.00M540.70 239.41h5.00M540.70 249.92h5.00M540.70 260.43h5.00M540.70 270.94h5.00M539.20 281.45h8.00M540.70 291.96h5.00M540.70 302.47h5.00M540.70 312.98h5.00M540.70 323.49h5.00M539.20 334.00h8.00M540.70 344.51h5.00M540.70 355.02h5.00M540.70 365.53h5.00M540.70 376.04h5.00M539.20 386.55h8.00M540.70 397.06h5.00M540.70 407.57h5.00M540.70 418.08h5.00M540.70 428.59h5.00M539.20 439.10h8.00M540.70 449.61h5.00M540.70 460.12h5.00M540.70 470.63h5.00M540.70 481.14h5.00M539.20 491.65h8.00M540.70 502.16h5.00M540.70 512.67h5.00M540.70 523.18h5.00M540.70 533.69h5.00M539.20 544.20h8.00M540.70 554.71h5.00M540.70 565.22h5.00M540.70 575.73h5.00M540.70 586.24h5.00M539.20 596.75h8.00M540.70 607.26h5.00M540.70 617.77h5.00M540.70 628.28h5.00M540.70 638.79h5.00M539.20 649.30h8.00M540.70 659.81h5.00M540.70 670.32h5.00M540.70 680.83h5.00M540.70 691.34h5.00" fill="none" stroke="#5c5741" stroke-width="1" />
<path d="M38.43 177.50v3M38.43 703.00v-3M59.46 177.50v3M59.46 703.00v-3M80.50 177.50v3M80.50 703.00v-3M101.53 177.50v3M101.53 703.00v-3M122.56 177.50v3M122.56 703.00v-3M143.59 177.50v3M143.59 703.00v-3M164.62 177.50v3M164.62 703.00v-3M185.66 177.50v3M185.66 703.00v-3M206.69 177.50v3M206.69 703.00v-3M227.72 177.50v3M227.72 703.00v-3M248.75 177.50v3M248.75 703.00v-3M269.78 177.50v3M269.78 703.00v-3M290.82 177.50v3M290.82 703.00v-3M311.85 177.50v3M311.85 703.00v-3M332.88 177.50v3M332.88 703.00v-3M353.91 177.50v3M353.91 703.00v-3M374.94 177.50v3M374.94 703.00v-3M395.98 177.50v3M395.98 703.00v-3M417.01 177.50v3M417.01 703.00v-3M438.04 177.50v3M438.04 703.00v-3M459.07 177.50v3M459.07 703.00v-3M480.10 177.50v3M480.10 703.00v-3M501.14 177.50v3M501.14 703.00v-3M522.17 177.50v3M522.17 703.00v-3M543.20 177.50v3M543.20 703.00v-3M564.23 177.50v3M564.23 703.00v-3M585.26 177.50v3M585.26 703.00v-3M606.30 177.50v3M606.30 703.00v-3M627.33 177.50v3M627.33 703.00v-3M648.36 177.50v3M648.36 703.00v-3M669.39 177.50v3M669.39 703.00v-3M690.42 177.50v3M690.42 703.00v-3M711.46 177.50v3M711.46 703.00v-3M732.49 177.50v3M732.49 703.00v-3M753.52 177.50v3M753.52 703.00v-3M774.55 177.50v3M774.55 703.00v-3M795.58 177.50v3M795.58 703.00v-3M816.62 177.50v3M816.62 703.00v-3M837.65 177.50v3M837.65 703.00v-3M858.68 177.50v3M858.68 703.00v-3M879.71 177.50v3M879.71 703.00v-3M900.74 177.50v3M900.74 703.00v-3M921.78 177.50v3M921.78 703.00v-3M942.81 177.50v3M942.81 703.00v-3M963.84 177.50v3M963.84 703.00v-3M984.87 177.50v3M984.87 703.00v-3M1005.90 177.50v3M1005.90 703.00v-3M1026.94 177.50v3M1026.94 703.00v-3M1047.97 177.50v3M1047.97 703.00v-3M17.00 186.86h3M1068.60 186.86h-3M17.00 197.37h3M1068.60 197.37h-3M17.00 207.88h3M1068.60 207.88h-3M17.00 218.39h3M1068.60 218.39h-3M17.00 228.90h3M1068.60 228.90h-3M17.00 239.41h3M1068.60 239.41h-3M17.00 249.92h3M1068.60 249.92h-3M17.00 260.43h3M1068.60 260.43h-3M17.00 270.94h3M1068.60 270.94h-3M17.00 281.45h3M1068.60 281.45h-3M17.00 291.96h3M1068.60 291.96h-3M17.00 302.47h3M1068.60 302.47h-3M17.00 312.98h3M1068.60 312.98h-3M17.00 323.49h3M1068.60 323.49h-3M17.00 334.00h3M1068.60 334.00h-3M17.00 344.51h3M1068.60 344.51h-3M17.00 355.02h3M1068.60 355.02h-3M17.00 365.53h3M1068.60 365.53h-3M17.00 376.04h3M1068.60 376.04h-3M17.00 386.55h3M1068.60 386.55h-3M17.00 397.06h3M1068.60 397.06h-3M17.00 407.57h3M1068.60 407.57h-3M17.00 418.08h3M1068.60 418.08h-3M17.00 428.59h3M1068.60 428.59h-3M17.00 439.10h3M1068.60 439.10h-3M17.00 449.61h3M1068.60 449.61h-3M17.00 460.12h3M1068.60 460.12h-3M17.00 470.63h3M1068.60 470.63h-3M17.00 481.14h3M1068.60 481.14h-3M17.00 491.65h3M1068.60 491.65h-3M17.00 502.16h3M1068.60 502.16h-3M17.00 512.67h3M1068.60 512.67h-3M17.00 523.18h3M1068.60 523.18h-3M17.00 533.69h3M1068.60 533.69h-3M17.00 544.20h3M1068.60 544.20h-3M17.00 554.71h3M1068.60 554.71h-3M17.00 565.22h3M1068.60 565.22h-3M17.00 575.73h3M1068.60 575.73h-3M17.00 586.24h3M1068.60 586.24h-3M17.00 596.75h3M1068.60 596.75h-3M17.00 607.26h3M1068.60 607.26h-3M17.00 617.77h3M1068.60 617.77h-3M17.00 628.28h3M1068.60 628.28h-3M17.00 638.79h3M1068.60 638.79h-3M17.00 649.30h3M1068.60 649.30h-3M17.00 659.81h3M1068.60 659.81h-3M17.00 670.32h3M1068.60 670.32h-3M17.00 680.83h3M1068.60 680.83h-3M17.00 691.34h3M1068.60 691.34h-3" fill="none" stroke="#4a4636" stroke-width="1" />
<rect x="17.00" y="177.50" width="1051.60" height="525.50" rx="0" fill="none" stroke="#2f4d68" stroke-width="1.8" />
<path d="M18.00 197.00L24.00 191.00Q25.00 190.00 27.00 190.00H34.00Q36.00 190.00 36.00 192.00V202.00Q36.00 204.00 34.00 204.00H27.00Q25.00 204.00 24.00 203.00Z" fill="#f59b00" stroke="none" stroke-width="1" />
<path d="M26.00 193.00H33.00M29.50 193.00V202.00" fill="none" stroke="#3a2600" stroke-width="2" />
<path d="M-0.50 200.50H12.50L6.00 208.00Z" fill="none" stroke="#a8b4c4" stroke-width="1.4" />
<rect x="2.20" y="211.00" width="3.20" height="70.60" rx="0" fill="#5a6470" stroke="none" stroke-width="1" />
<text x="-0.50" y="223.94" font-size="17.099999999999998" fill="#e01010" font-weight="normal" text-anchor="start" textLength="8.5" lengthAdjust="spacingAndGlyphs" stroke="#e01010" stroke-width="0.6">2</text>
<path d="M15.00 209.00H11.00V227.00H15.00" fill="none" stroke="#c01010" stroke-width="1.5" />
<text x="-0.50" y="249.42" font-size="17.76499999999999" fill="#c8c8c8" font-weight="normal" text-anchor="start" textLength="8.5" lengthAdjust="spacingAndGlyphs" stroke="#c8c8c8" stroke-width="0.6">0</text>
<path d="M15.00 233.90H11.00V252.60H15.00" fill="none" stroke="#a0a0a0" stroke-width="1.5" />
<text x="-0.50" y="277.35" font-size="18.14500000000002" fill="#b08a48" font-weight="normal" text-anchor="start" textLength="8.5" lengthAdjust="spacingAndGlyphs" stroke="#b08a48" stroke-width="0.6">1</text>
<path d="M15.00 261.50H11.00V280.60H15.00" fill="none" stroke="#8a7040" stroke-width="1.5" />
<path d="M537.70 178.50H548.70L543.20 189.50Z" fill="#f0f0ff" stroke="none" stroke-width="1" />
<path d="M1060.00 178.50H1067.00L1066.00 189.50Z" fill="#f0f0ff" stroke="none" stroke-width="1" />
<path d="M18.00 210.00H336.00" fill="none" stroke="#1c7a36" stroke-width="2" />
<path d="M336.00 227.00H743.50" fill="none" stroke="#0c44b4" stroke-width="2.2" />
<path d="M743.50 210.00H1067.60" fill="none" stroke="#1c7a36" stroke-width="2" />
<path d="M336.00 210.00V227.00M743.50 210.00V227.00" fill="none" stroke="#7a7a70" stroke-width="1.2" />
<path d="M18.00 252.60H1067.60" fill="none" stroke="#0a3078" stroke-width="2" />
<path d="M560.70 235.40H662.40" fill="none" stroke="#1f9a44" stroke-width="1.8" />
<path d="M560.70 236.40h3.8v16.20h-3.8zM566.82 236.40h3.8v16.20h-3.8zM572.94 236.40h3.8v16.20h-3.8zM579.06 236.40h3.8v16.20h-3.8zM585.18 236.40h3.8v16.20h-3.8zM591.29 236.40h3.8v16.20h-3.8zM597.41 236.40h3.8v16.20h-3.8zM603.53 236.40h3.8v16.20h-3.8zM609.65 236.40h3.8v16.20h-3.8zM615.77 236.40h3.8v16.20h-3.8zM621.89 236.40h3.8v16.20h-3.8zM628.01 236.40h3.8v16.20h-3.8zM634.12 236.40h3.8v16.20h-3.8zM640.24 236.40h3.8v16.20h-3.8zM646.36 236.40h3.8v16.20h-3.8zM652.48 236.40h3.8v16.20h-3.8zM658.60 236.40h3.8v16.20h-3.8z" fill="#3c3c3a" stroke="none" stroke-width="1" />
<path d="M18.00 280.60H339.00M342.50 280.60H564.80M571.80 280.60H590.30M597.20 280.60H617.50M624.70 280.60H630.10M643.20 280.60H655.40M664.60 280.60H1067.60" fill="none" stroke="#0a3078" stroke-width="2" />
<path d="M339.00 280.60V263.00M342.50 280.60V263.00M564.80 280.60V263.00M571.80 280.60V263.00M590.30 280.60V263.00M597.20 280.60V263.00M617.50 280.60V263.00M624.70 280.60V263.00M630.10 280.60V263.00M643.20 280.60V263.00M655.40 280.60V263.00M664.60 280.60V263.00" fill="none" stroke="#5e5e58" stroke-width="2" />
<path d="M339.00 263.00H342.50M564.80 263.00H571.80M590.30 263.00H597.20M617.50 263.00H624.70M630.10 263.00H643.20M655.40 263.00H664.60" fill="none" stroke="#22b04a" stroke-width="1.8" />
<line x1="117.00" y1="428.20" x2="1067.60" y2="428.20" stroke="#7d2bd6" stroke-width="3" />
<path d="M337.30 416.70Q335.30 416.70 335.30 418.70V436.70Q335.30 438.70 337.30 438.70" fill="none" stroke="#20c040" stroke-width="1.8" />
<path d="M742.20 416.70Q744.20 416.70 744.20 418.70V436.70Q744.20 438.70 742.20 438.70" fill="none" stroke="#e02020" stroke-width="1.8" />
<path d="M564.50 417.90H653.50Q656.50 427.80 653.50 437.70H564.50Q561.50 427.80 564.50 417.90Z" fill="#000" stroke="#0cb2b4" stroke-width="3" />
<text x="609.00" y="433.40" font-size="16" fill="#e2e2ea" font-weight="normal" text-anchor="middle" textLength="42.0" lengthAdjust="spacingAndGlyphs" stroke="#e2e2ea" stroke-width="0.35" >4459</text>
<path d="M24.70 418.90H111.60Q115.60 419.90 117.60 427.65Q115.60 435.40 111.60 436.40H24.70Q20.70 435.40 18.70 427.65Q20.70 419.90 24.70 418.90Z" fill="#7d2bd6" stroke="none" stroke-width="1" />
<text x="24.20" y="432.95" font-size="15.3" fill="#240848" font-weight="bold" text-anchor="start" textLength="85.9" lengthAdjust="spacingAndGlyphs" stroke="#240848" stroke-width="0.2">SPI(MISO)</text>
<path d="M0.00 418.90H11.00L17.50 427.65L11.00 436.40H0.00Z" fill="#7d2bd6" stroke="none" stroke-width="1" />
<text x="0.30" y="432.65" font-size="14" fill="#240848" font-weight="bold" text-anchor="start" textLength="10.5" lengthAdjust="spacingAndGlyphs" stroke="#240848" stroke-width="0.2">B1</text>
<rect x="607.60" y="668.60" width="154.70" height="38.00" rx="6" fill="#000" stroke="#727272" stroke-width="2" />
<path d="M613.60 706.60H756.30" fill="none" stroke="#9a9a98" stroke-width="2.4" />
<rect x="769.50" y="668.60" width="111.90" height="38.00" rx="6" fill="#000" stroke="#727272" stroke-width="2" />
<path d="M775.50 706.60H875.40" fill="none" stroke="#9a9a98" stroke-width="2.4" />
<rect x="607.60" y="709.50" width="273.80" height="38.00" rx="6" fill="#000" stroke="#727272" stroke-width="2" />
<path d="M613.60 747.50H875.40" fill="none" stroke="#9a9a98" stroke-width="2.4" />
<rect x="888.60" y="707.00" width="180.90" height="38.00" rx="0" fill="#000" stroke="none" stroke-width="1" />
<path d="M894.60 707.00Q888.60 707.00 888.60 713.00V739.00Q888.60 745.00 894.60 745.00H1063.50Q1069.50 745.00 1069.50 739.00V713.00Q1069.50 707.00 1063.50 707.00" fill="none" stroke="#727272" stroke-width="2" />
<path d="M894.60 745.00H1063.50" fill="none" stroke="#9a9a98" stroke-width="2.4" />
<rect x="951.70" y="766.70" width="116.60" height="50.00" rx="6" fill="#000" stroke="#727272" stroke-width="2" />
<path d="M957.70 816.70H1062.30" fill="none" stroke="#9a9a98" stroke-width="2.4" />
<text x="612.30" y="684.60" font-size="17" fill="#e0e0e0" font-weight="normal" text-anchor="start" textLength="74.0" lengthAdjust="spacingAndGlyphs" stroke="#e0e0e0" stroke-width="0.37" >Z 2.00µs</text>
<rect x="612.30" y="689.10" width="11.90" height="14.00" rx="2" fill="#f59b00" stroke="none" stroke-width="1" />
<path d="M614.50 691.5H622.00M618.20 691.5V702.00" fill="none" stroke="#3a2600" stroke-width="1.8" />
<path d="M625.00 696.5H633.00M630.00 693.5L634.00 696.5L630.00 699.5" fill="none" stroke="#f59b00" stroke-width="1.6" />
<path d="M636.50 690.5H648.00L642.20 699Z" fill="#f59b00" stroke="none" stroke-width="1" />
<text x="649.80" y="701.70" font-size="15.5" fill="#f59b00" font-weight="normal" text-anchor="start" textLength="97.0" lengthAdjust="spacingAndGlyphs" stroke="#f59b00" stroke-width="0.34" >60.0428ms</text>
<text x="776.70" y="684.60" font-size="17" fill="#e0e0e0" font-weight="normal" text-anchor="start" textLength="75.0" lengthAdjust="spacingAndGlyphs" stroke="#e0e0e0" stroke-width="0.37" >2.50GS/s</text>
<text x="777.00" y="701.50" font-size="17" fill="#e0e0e0" font-weight="normal" text-anchor="start" textLength="93.7" lengthAdjust="spacingAndGlyphs" stroke="#e0e0e0" stroke-width="0.37" >10M points</text>
<text x="613.60" y="725.70" font-size="17" fill="#e0e0e0" font-weight="normal" text-anchor="start" textLength="32.0" lengthAdjust="spacingAndGlyphs" stroke="#e0e0e0" stroke-width="0.37" >D15</text>
<text x="656.50" y="725.70" font-size="17" fill="#e0e0e0" font-weight="normal" text-anchor="start" textLength="23.7" lengthAdjust="spacingAndGlyphs" stroke="#e0e0e0" stroke-width="0.37" >D0</text>
<line x1="647.00" y1="719.00" x2="655.00" y2="719.00" stroke="#2a2a2a" stroke-width="1.5" />
<path d="M614.00 734H622.00" fill="none" stroke="#888" stroke-width="1.2" />
<path d="M622.00 730V742.00" fill="none" stroke="#777" stroke-width="2" />
<path d="M623.00 729.5H634.00" fill="none" stroke="#1a9a3a" stroke-width="2" />
<path d="M612.00 743.5H624.00" fill="none" stroke="#1a3aaa" stroke-width="2" />
<path d="M626.00 736H633.00" fill="none" stroke="#999" stroke-width="1.5" />
<text x="641.00" y="742.00" font-size="17" fill="#e0e0e0" font-weight="normal" text-anchor="start" textLength="222.0" lengthAdjust="spacingAndGlyphs" stroke="#e0e0e0" stroke-width="0.37" >Timing Resolution: 2.00ns</text>
<text x="957.60" y="783.00" font-size="17" fill="#e0e0e0" font-weight="normal" text-anchor="start" textLength="110.0" lengthAdjust="spacingAndGlyphs" stroke="#e0e0e0" stroke-width="0.37" >20 Aug 2025</text>
<text x="957.60" y="800.00" font-size="17" fill="#e0e0e0" font-weight="normal" text-anchor="start" textLength="74.0" lengthAdjust="spacingAndGlyphs" stroke="#e0e0e0" stroke-width="0.37" >13:58:53</text>
<rect x="908.20" y="707.60" width="26.50" height="16.50" rx="8.25" fill="#8a22e6" stroke="none" stroke-width="1" />
<text x="921.45" y="720.17" font-size="13.200000000000001" fill="#1a0640" font-weight="bold" text-anchor="middle" textLength="15.9" lengthAdjust="spacingAndGlyphs" stroke="#1a0640" stroke-width="0.2">B1</text>
<text x="940.50" y="721.40" font-size="17" fill="#e0e0e0" font-weight="normal" text-anchor="start" textLength="77.5" lengthAdjust="spacingAndGlyphs" stroke="#e0e0e0" stroke-width="0.37" >SS Active</text>
<rect x="17.40" y="750.20" width="118.60" height="60.00" rx="4" fill="#545654" stroke="#676967" stroke-width="1" />
<rect x="141.00" y="750.20" width="118.60" height="60.00" rx="4" fill="#545654" stroke="#676967" stroke-width="1" />
<rect x="265.00" y="750.20" width="118.60" height="60.00" rx="4" fill="#545654" stroke="#676967" stroke-width="1" />
<rect x="389.00" y="750.20" width="118.60" height="60.00" rx="4" fill="#545654" stroke="#676967" stroke-width="1" />
<rect x="513.00" y="750.20" width="118.60" height="60.00" rx="4" fill="#545654" stroke="#676967" stroke-width="1" />
<rect x="636.20" y="750.20" width="118.60" height="60.00" rx="4" fill="#545654" stroke="#676967" stroke-width="1" />
<rect x="760.00" y="750.20" width="118.60" height="60.00" rx="4" fill="#545654" stroke="#676967" stroke-width="1" />
<text x="46.60" y="775.40" font-size="16.5" fill="#dcdcdc" font-weight="normal" text-anchor="start" textLength="28.5" lengthAdjust="spacingAndGlyphs" stroke="#dcdcdc" stroke-width="0.36" >Bus</text>
<rect x="82.00" y="761.70" width="26.20" height="17.60" rx="8.8" fill="#8a22e6" stroke="none" stroke-width="1" />
<text x="95.10" y="774.82" font-size="13.200000000000001" fill="#1a0640" font-weight="bold" text-anchor="middle" textLength="15.7" lengthAdjust="spacingAndGlyphs" stroke="#1a0640" stroke-width="0.2">B1</text>
<rect x="62.00" y="779.80" width="30.50" height="16.70" rx="0" fill="#0a78f0" stroke="none" stroke-width="1" />
<text x="77.20" y="793.40" font-size="16.5" fill="#f0f8ff" font-weight="normal" text-anchor="middle" textLength="26.0" lengthAdjust="spacingAndGlyphs" stroke="#f0f8ff" stroke-width="0.36" >SPI</text>
<text x="201.60" y="776.00" font-size="16.5" fill="#dcdcdc" font-weight="normal" text-anchor="middle" textLength="56.0" lengthAdjust="spacingAndGlyphs" stroke="#dcdcdc" stroke-width="0.36" >Define</text>
<text x="201.00" y="793.40" font-size="16.5" fill="#dcdcdc" font-weight="normal" text-anchor="middle" textLength="56.0" lengthAdjust="spacingAndGlyphs" stroke="#dcdcdc" stroke-width="0.36" >Inputs</text>
<text x="324.70" y="783.80" font-size="17" fill="#dcdcdc" font-weight="normal" text-anchor="middle" textLength="92.8" lengthAdjust="spacingAndGlyphs" stroke="#dcdcdc" stroke-width="0.37" >Thresholds</text>
<text x="448.90" y="783.80" font-size="17" fill="#dcdcdc" font-weight="normal" text-anchor="middle" textLength="82.3" lengthAdjust="spacingAndGlyphs" stroke="#dcdcdc" stroke-width="0.37" >Configure</text>
<rect x="535.80" y="761.70" width="26.20" height="17.60" rx="8.8" fill="#8a22e6" stroke="none" stroke-width="1" />
<text x="548.90" y="774.82" font-size="13.200000000000001" fill="#1a0640" font-weight="bold" text-anchor="middle" textLength="15.7" lengthAdjust="spacingAndGlyphs" stroke="#1a0640" stroke-width="0.2">B1</text>
<text x="569.50" y="775.40" font-size="16.5" fill="#dcdcdc" font-weight="normal" text-anchor="start" textLength="42.0" lengthAdjust="spacingAndGlyphs" stroke="#dcdcdc" stroke-width="0.36" >Label</text>
<rect x="559.00" y="779.80" width="30.50" height="16.70" rx="0" fill="#0a78f0" stroke="none" stroke-width="1" />
<text x="574.00" y="793.40" font-size="16.5" fill="#f0f8ff" font-weight="normal" text-anchor="middle" textLength="26.0" lengthAdjust="spacingAndGlyphs" stroke="#f0f8ff" stroke-width="0.36" >SPI</text>
<text x="697.30" y="783.30" font-size="17" fill="#dcdcdc" font-weight="normal" text-anchor="middle" textLength="96.0" lengthAdjust="spacingAndGlyphs" stroke="#dcdcdc" stroke-width="0.37" >Bus Display</text>
<text x="820.50" y="783.30" font-size="17" fill="#dcdcdc" font-weight="normal" text-anchor="middle" textLength="98.0" lengthAdjust="spacingAndGlyphs" stroke="#dcdcdc" stroke-width="0.37" >Event Table</text>
<rect x="1073.00" y="0.00" width="1069.30" height="2.20" rx="0" fill="#f2f2f2" stroke="none" stroke-width="1" />
<rect x="1074.00" y="4.20" width="3.30" height="13.60" rx="0" fill="#d8d8e0" stroke="none" stroke-width="1" />
<rect x="1077.00" y="4.20" width="3.20" height="2.00" rx="0" fill="#c8c8d0" stroke="none" stroke-width="1" />
<text x="1079.00" y="17.80" font-size="19.5" fill="#dcdce4" font-weight="bold" text-anchor="start" textLength="22.5" lengthAdjust="spacingAndGlyphs" stroke="#dcdce4" stroke-width="0.5">ek</text>
<text x="1106.60" y="15.90" font-size="17" fill="#d8d8e0" font-weight="normal" text-anchor="start" textLength="48.5" lengthAdjust="spacingAndGlyphs" stroke="#d8d8e0" stroke-width="0.5">PreVu</text>
<path d="M1111.33 87.26h2.4v2.4h-2.4zM1132.36 87.26h2.4v2.4h-2.4zM1153.40 87.26h2.4v2.4h-2.4zM1174.43 87.26h2.4v2.4h-2.4zM1195.46 87.26h2.4v2.4h-2.4zM1216.49 87.26h2.4v2.4h-2.4zM1237.52 87.26h2.4v2.4h-2.4zM1258.56 87.26h2.4v2.4h-2.4zM1279.59 87.26h2.4v2.4h-2.4zM1300.62 87.26h2.4v2.4h-2.4zM1321.65 87.26h2.4v2.4h-2.4zM1342.68 87.26h2.4v2.4h-2.4zM1363.72 87.26h2.4v2.4h-2.4zM1384.75 87.26h2.4v2.4h-2.4zM1405.78 87.26h2.4v2.4h-2.4zM1426.81 87.26h2.4v2.4h-2.4zM1447.84 87.26h2.4v2.4h-2.4zM1468.88 87.26h2.4v2.4h-2.4zM1489.91 87.26h2.4v2.4h-2.4zM1510.94 87.26h2.4v2.4h-2.4zM1531.97 87.26h2.4v2.4h-2.4zM1553.00 87.26h2.4v2.4h-2.4zM1574.04 87.26h2.4v2.4h-2.4zM1595.07 87.26h2.4v2.4h-2.4zM1616.10 87.26h2.4v2.4h-2.4zM1637.13 87.26h2.4v2.4h-2.4zM1658.16 87.26h2.4v2.4h-2.4zM1679.20 87.26h2.4v2.4h-2.4zM1700.23 87.26h2.4v2.4h-2.4zM1721.26 87.26h2.4v2.4h-2.4zM1742.29 87.26h2.4v2.4h-2.4zM1763.32 87.26h2.4v2.4h-2.4zM1784.36 87.26h2.4v2.4h-2.4zM1805.39 87.26h2.4v2.4h-2.4zM1826.42 87.26h2.4v2.4h-2.4zM1847.45 87.26h2.4v2.4h-2.4zM1868.48 87.26h2.4v2.4h-2.4zM1889.52 87.26h2.4v2.4h-2.4zM1910.55 87.26h2.4v2.4h-2.4zM1931.58 87.26h2.4v2.4h-2.4zM1952.61 87.26h2.4v2.4h-2.4zM1973.64 87.26h2.4v2.4h-2.4zM1994.68 87.26h2.4v2.4h-2.4zM2015.71 87.26h2.4v2.4h-2.4zM2036.74 87.26h2.4v2.4h-2.4zM2057.77 87.26h2.4v2.4h-2.4zM2078.80 87.26h2.4v2.4h-2.4zM2099.84 87.26h2.4v2.4h-2.4zM2120.87 87.26h2.4v2.4h-2.4zM1111.33 155.52h2.4v2.4h-2.4zM1132.36 155.52h2.4v2.4h-2.4zM1153.40 155.52h2.4v2.4h-2.4zM1174.43 155.52h2.4v2.4h-2.4zM1195.46 155.52h2.4v2.4h-2.4zM1216.49 155.52h2.4v2.4h-2.4zM1237.52 155.52h2.4v2.4h-2.4zM1258.56 155.52h2.4v2.4h-2.4zM1279.59 155.52h2.4v2.4h-2.4zM1300.62 155.52h2.4v2.4h-2.4zM1321.65 155.52h2.4v2.4h-2.4zM1342.68 155.52h2.4v2.4h-2.4zM1363.72 155.52h2.4v2.4h-2.4zM1384.75 155.52h2.4v2.4h-2.4zM1405.78 155.52h2.4v2.4h-2.4zM1426.81 155.52h2.4v2.4h-2.4zM1447.84 155.52h2.4v2.4h-2.4zM1468.88 155.52h2.4v2.4h-2.4zM1489.91 155.52h2.4v2.4h-2.4zM1510.94 155.52h2.4v2.4h-2.4zM1531.97 155.52h2.4v2.4h-2.4zM1553.00 155.52h2.4v2.4h-2.4zM1574.04 155.52h2.4v2.4h-2.4zM1595.07 155.52h2.4v2.4h-2.4zM1616.10 155.52h2.4v2.4h-2.4zM1637.13 155.52h2.4v2.4h-2.4zM1658.16 155.52h2.4v2.4h-2.4zM1679.20 155.52h2.4v2.4h-2.4zM1700.23 155.52h2.4v2.4h-2.4zM1721.26 155.52h2.4v2.4h-2.4zM1742.29 155.52h2.4v2.4h-2.4zM1763.32 155.52h2.4v2.4h-2.4zM1784.36 155.52h2.4v2.4h-2.4zM1805.39 155.52h2.4v2.4h-2.4zM1826.42 155.52h2.4v2.4h-2.4zM1847.45 155.52h2.4v2.4h-2.4zM1868.48 155.52h2.4v2.4h-2.4zM1889.52 155.52h2.4v2.4h-2.4zM1910.55 155.52h2.4v2.4h-2.4zM1931.58 155.52h2.4v2.4h-2.4zM1952.61 155.52h2.4v2.4h-2.4zM1973.64 155.52h2.4v2.4h-2.4zM1994.68 155.52h2.4v2.4h-2.4zM2015.71 155.52h2.4v2.4h-2.4zM2036.74 155.52h2.4v2.4h-2.4zM2057.77 155.52h2.4v2.4h-2.4zM2078.80 155.52h2.4v2.4h-2.4zM2099.84 155.52h2.4v2.4h-2.4zM2120.87 155.52h2.4v2.4h-2.4zM1111.33 223.78h2.4v2.4h-2.4zM1132.36 223.78h2.4v2.4h-2.4zM1153.40 223.78h2.4v2.4h-2.4zM1174.43 223.78h2.4v2.4h-2.4zM1195.46 223.78h2.4v2.4h-2.4zM1216.49 223.78h2.4v2.4h-2.4zM1237.52 223.78h2.4v2.4h-2.4zM1258.56 223.78h2.4v2.4h-2.4zM1279.59 223.78h2.4v2.4h-2.4zM1300.62 223.78h2.4v2.4h-2.4zM1321.65 223.78h2.4v2.4h-2.4zM1342.68 223.78h2.4v2.4h-2.4zM1363.72 223.78h2.4v2.4h-2.4zM1384.75 223.78h2.4v2.4h-2.4zM1405.78 223.78h2.4v2.4h-2.4zM1426.81 223.78h2.4v2.4h-2.4zM1447.84 223.78h2.4v2.4h-2.4zM1468.88 223.78h2.4v2.4h-2.4zM1489.91 223.78h2.4v2.4h-2.4zM1510.94 223.78h2.4v2.4h-2.4zM1531.97 223.78h2.4v2.4h-2.4zM1553.00 223.78h2.4v2.4h-2.4zM1574.04 223.78h2.4v2.4h-2.4zM1595.07 223.78h2.4v2.4h-2.4zM1616.10 223.78h2.4v2.4h-2.4zM1637.13 223.78h2.4v2.4h-2.4zM1658.16 223.78h2.4v2.4h-2.4zM1679.20 223.78h2.4v2.4h-2.4zM1700.23 223.78h2.4v2.4h-2.4zM1721.26 223.78h2.4v2.4h-2.4zM1742.29 223.78h2.4v2.4h-2.4zM1763.32 223.78h2.4v2.4h-2.4zM1784.36 223.78h2.4v2.4h-2.4zM1805.39 223.78h2.4v2.4h-2.4zM1826.42 223.78h2.4v2.4h-2.4zM1847.45 223.78h2.4v2.4h-2.4zM1868.48 223.78h2.4v2.4h-2.4zM1889.52 223.78h2.4v2.4h-2.4zM1910.55 223.78h2.4v2.4h-2.4zM1931.58 223.78h2.4v2.4h-2.4zM1952.61 223.78h2.4v2.4h-2.4zM1973.64 223.78h2.4v2.4h-2.4zM1994.68 223.78h2.4v2.4h-2.4zM2015.71 223.78h2.4v2.4h-2.4zM2036.74 223.78h2.4v2.4h-2.4zM2057.77 223.78h2.4v2.4h-2.4zM2078.80 223.78h2.4v2.4h-2.4zM2099.84 223.78h2.4v2.4h-2.4zM2120.87 223.78h2.4v2.4h-2.4zM1111.33 292.04h2.4v2.4h-2.4zM1132.36 292.04h2.4v2.4h-2.4zM1153.40 292.04h2.4v2.4h-2.4zM1174.43 292.04h2.4v2.4h-2.4zM1195.46 292.04h2.4v2.4h-2.4zM1216.49 292.04h2.4v2.4h-2.4zM1237.52 292.04h2.4v2.4h-2.4zM1258.56 292.04h2.4v2.4h-2.4zM1279.59 292.04h2.4v2.4h-2.4zM1300.62 292.04h2.4v2.4h-2.4zM1321.65 292.04h2.4v2.4h-2.4zM1342.68 292.04h2.4v2.4h-2.4zM1363.72 292.04h2.4v2.4h-2.4zM1384.75 292.04h2.4v2.4h-2.4zM1405.78 292.04h2.4v2.4h-2.4zM1426.81 292.04h2.4v2.4h-2.4zM1447.84 292.04h2.4v2.4h-2.4zM1468.88 292.04h2.4v2.4h-2.4zM1489.91 292.04h2.4v2.4h-2.4zM1510.94 292.04h2.4v2.4h-2.4zM1531.97 292.04h2.4v2.4h-2.4zM1553.00 292.04h2.4v2.4h-2.4zM1574.04 292.04h2.4v2.4h-2.4zM1595.07 292.04h2.4v2.4h-2.4zM1616.10 292.04h2.4v2.4h-2.4zM1637.13 292.04h2.4v2.4h-2.4zM1658.16 292.04h2.4v2.4h-2.4zM1679.20 292.04h2.4v2.4h-2.4zM1700.23 292.04h2.4v2.4h-2.4zM1721.26 292.04h2.4v2.4h-2.4zM1742.29 292.04h2.4v2.4h-2.4zM1763.32 292.04h2.4v2.4h-2.4zM1784.36 292.04h2.4v2.4h-2.4zM1805.39 292.04h2.4v2.4h-2.4zM1826.42 292.04h2.4v2.4h-2.4zM1847.45 292.04h2.4v2.4h-2.4zM1868.48 292.04h2.4v2.4h-2.4zM1889.52 292.04h2.4v2.4h-2.4zM1910.55 292.04h2.4v2.4h-2.4zM1931.58 292.04h2.4v2.4h-2.4zM1952.61 292.04h2.4v2.4h-2.4zM1973.64 292.04h2.4v2.4h-2.4zM1994.68 292.04h2.4v2.4h-2.4zM2015.71 292.04h2.4v2.4h-2.4zM2036.74 292.04h2.4v2.4h-2.4zM2057.77 292.04h2.4v2.4h-2.4zM2078.80 292.04h2.4v2.4h-2.4zM2099.84 292.04h2.4v2.4h-2.4zM2120.87 292.04h2.4v2.4h-2.4zM1111.33 428.56h2.4v2.4h-2.4zM1132.36 428.56h2.4v2.4h-2.4zM1153.40 428.56h2.4v2.4h-2.4zM1174.43 428.56h2.4v2.4h-2.4zM1195.46 428.56h2.4v2.4h-2.4zM1216.49 428.56h2.4v2.4h-2.4zM1237.52 428.56h2.4v2.4h-2.4zM1258.56 428.56h2.4v2.4h-2.4zM1279.59 428.56h2.4v2.4h-2.4zM1300.62 428.56h2.4v2.4h-2.4zM1321.65 428.56h2.4v2.4h-2.4zM1342.68 428.56h2.4v2.4h-2.4zM1363.72 428.56h2.4v2.4h-2.4zM1384.75 428.56h2.4v2.4h-2.4zM1405.78 428.56h2.4v2.4h-2.4zM1426.81 428.56h2.4v2.4h-2.4zM1447.84 428.56h2.4v2.4h-2.4zM1468.88 428.56h2.4v2.4h-2.4zM1489.91 428.56h2.4v2.4h-2.4zM1510.94 428.56h2.4v2.4h-2.4zM1531.97 428.56h2.4v2.4h-2.4zM1553.00 428.56h2.4v2.4h-2.4zM1574.04 428.56h2.4v2.4h-2.4zM1595.07 428.56h2.4v2.4h-2.4zM1616.10 428.56h2.4v2.4h-2.4zM1637.13 428.56h2.4v2.4h-2.4zM1658.16 428.56h2.4v2.4h-2.4zM1679.20 428.56h2.4v2.4h-2.4zM1700.23 428.56h2.4v2.4h-2.4zM1721.26 428.56h2.4v2.4h-2.4zM1742.29 428.56h2.4v2.4h-2.4zM1763.32 428.56h2.4v2.4h-2.4zM1784.36 428.56h2.4v2.4h-2.4zM1805.39 428.56h2.4v2.4h-2.4zM1826.42 428.56h2.4v2.4h-2.4zM1847.45 428.56h2.4v2.4h-2.4zM1868.48 428.56h2.4v2.4h-2.4zM1889.52 428.56h2.4v2.4h-2.4zM1910.55 428.56h2.4v2.4h-2.4zM1931.58 428.56h2.4v2.4h-2.4zM1952.61 428.56h2.4v2.4h-2.4zM1973.64 428.56h2.4v2.4h-2.4zM1994.68 428.56h2.4v2.4h-2.4zM2015.71 428.56h2.4v2.4h-2.4zM2036.74 428.56h2.4v2.4h-2.4zM2057.77 428.56h2.4v2.4h-2.4zM2078.80 428.56h2.4v2.4h-2.4zM2099.84 428.56h2.4v2.4h-2.4zM2120.87 428.56h2.4v2.4h-2.4zM1111.33 496.82h2.4v2.4h-2.4zM1132.36 496.82h2.4v2.4h-2.4zM1153.40 496.82h2.4v2.4h-2.4zM1174.43 496.82h2.4v2.4h-2.4zM1195.46 496.82h2.4v2.4h-2.4zM1216.49 496.82h2.4v2.4h-2.4zM1237.52 496.82h2.4v2.4h-2.4zM1258.56 496.82h2.4v2.4h-2.4zM1279.59 496.82h2.4v2.4h-2.4zM1300.62 496.82h2.4v2.4h-2.4zM1321.65 496.82h2.4v2.4h-2.4zM1342.68 496.82h2.4v2.4h-2.4zM1363.72 496.82h2.4v2.4h-2.4zM1384.75 496.82h2.4v2.4h-2.4zM1405.78 496.82h2.4v2.4h-2.4zM1426.81 496.82h2.4v2.4h-2.4zM1447.84 496.82h2.4v2.4h-2.4zM1468.88 496.82h2.4v2.4h-2.4zM1489.91 496.82h2.4v2.4h-2.4zM1510.94 496.82h2.4v2.4h-2.4zM1531.97 496.82h2.4v2.4h-2.4zM1553.00 496.82h2.4v2.4h-2.4zM1574.04 496.82h2.4v2.4h-2.4zM1595.07 496.82h2.4v2.4h-2.4zM1616.10 496.82h2.4v2.4h-2.4zM1637.13 496.82h2.4v2.4h-2.4zM1658.16 496.82h2.4v2.4h-2.4zM1679.20 496.82h2.4v2.4h-2.4zM1700.23 496.82h2.4v2.4h-2.4zM1721.26 496.82h2.4v2.4h-2.4zM1742.29 496.82h2.4v2.4h-2.4zM1763.32 496.82h2.4v2.4h-2.4zM1784.36 496.82h2.4v2.4h-2.4zM1805.39 496.82h2.4v2.4h-2.4zM1826.42 496.82h2.4v2.4h-2.4zM1847.45 496.82h2.4v2.4h-2.4zM1868.48 496.82h2.4v2.4h-2.4zM1889.52 496.82h2.4v2.4h-2.4zM1910.55 496.82h2.4v2.4h-2.4zM1931.58 496.82h2.4v2.4h-2.4zM1952.61 496.82h2.4v2.4h-2.4zM1973.64 496.82h2.4v2.4h-2.4zM1994.68 496.82h2.4v2.4h-2.4zM2015.71 496.82h2.4v2.4h-2.4zM2036.74 496.82h2.4v2.4h-2.4zM2057.77 496.82h2.4v2.4h-2.4zM2078.80 496.82h2.4v2.4h-2.4zM2099.84 496.82h2.4v2.4h-2.4zM2120.87 496.82h2.4v2.4h-2.4zM1111.33 565.08h2.4v2.4h-2.4zM1132.36 565.08h2.4v2.4h-2.4zM1153.40 565.08h2.4v2.4h-2.4zM1174.43 565.08h2.4v2.4h-2.4zM1195.46 565.08h2.4v2.4h-2.4zM1216.49 565.08h2.4v2.4h-2.4zM1237.52 565.08h2.4v2.4h-2.4zM1258.56 565.08h2.4v2.4h-2.4zM1279.59 565.08h2.4v2.4h-2.4zM1300.62 565.08h2.4v2.4h-2.4zM1321.65 565.08h2.4v2.4h-2.4zM1342.68 565.08h2.4v2.4h-2.4zM1363.72 565.08h2.4v2.4h-2.4zM1384.75 565.08h2.4v2.4h-2.4zM1405.78 565.08h2.4v2.4h-2.4zM1426.81 565.08h2.4v2.4h-2.4zM1447.84 565.08h2.4v2.4h-2.4zM1468.88 565.08h2.4v2.4h-2.4zM1489.91 565.08h2.4v2.4h-2.4zM1510.94 565.08h2.4v2.4h-2.4zM1531.97 565.08h2.4v2.4h-2.4zM1553.00 565.08h2.4v2.4h-2.4zM1574.04 565.08h2.4v2.4h-2.4zM1595.07 565.08h2.4v2.4h-2.4zM1616.10 565.08h2.4v2.4h-2.4zM1637.13 565.08h2.4v2.4h-2.4zM1658.16 565.08h2.4v2.4h-2.4zM1679.20 565.08h2.4v2.4h-2.4zM1700.23 565.08h2.4v2.4h-2.4zM1721.26 565.08h2.4v2.4h-2.4zM1742.29 565.08h2.4v2.4h-2.4zM1763.32 565.08h2.4v2.4h-2.4zM1784.36 565.08h2.4v2.4h-2.4zM1805.39 565.08h2.4v2.4h-2.4zM1826.42 565.08h2.4v2.4h-2.4zM1847.45 565.08h2.4v2.4h-2.4zM1868.48 565.08h2.4v2.4h-2.4zM1889.52 565.08h2.4v2.4h-2.4zM1910.55 565.08h2.4v2.4h-2.4zM1931.58 565.08h2.4v2.4h-2.4zM1952.61 565.08h2.4v2.4h-2.4zM1973.64 565.08h2.4v2.4h-2.4zM1994.68 565.08h2.4v2.4h-2.4zM2015.71 565.08h2.4v2.4h-2.4zM2036.74 565.08h2.4v2.4h-2.4zM2057.77 565.08h2.4v2.4h-2.4zM2078.80 565.08h2.4v2.4h-2.4zM2099.84 565.08h2.4v2.4h-2.4zM2120.87 565.08h2.4v2.4h-2.4zM1111.33 633.34h2.4v2.4h-2.4zM1132.36 633.34h2.4v2.4h-2.4zM1153.40 633.34h2.4v2.4h-2.4zM1174.43 633.34h2.4v2.4h-2.4zM1195.46 633.34h2.4v2.4h-2.4zM1216.49 633.34h2.4v2.4h-2.4zM1237.52 633.34h2.4v2.4h-2.4zM1258.56 633.34h2.4v2.4h-2.4zM1279.59 633.34h2.4v2.4h-2.4zM1300.62 633.34h2.4v2.4h-2.4zM1321.65 633.34h2.4v2.4h-2.4zM1342.68 633.34h2.4v2.4h-2.4zM1363.72 633.34h2.4v2.4h-2.4zM1384.75 633.34h2.4v2.4h-2.4zM1405.78 633.34h2.4v2.4h-2.4zM1426.81 633.34h2.4v2.4h-2.4zM1447.84 633.34h2.4v2.4h-2.4zM1468.88 633.34h2.4v2.4h-2.4zM1489.91 633.34h2.4v2.4h-2.4zM1510.94 633.34h2.4v2.4h-2.4zM1531.97 633.34h2.4v2.4h-2.4zM1553.00 633.34h2.4v2.4h-2.4zM1574.04 633.34h2.4v2.4h-2.4zM1595.07 633.34h2.4v2.4h-2.4zM1616.10 633.34h2.4v2.4h-2.4zM1637.13 633.34h2.4v2.4h-2.4zM1658.16 633.34h2.4v2.4h-2.4zM1679.20 633.34h2.4v2.4h-2.4zM1700.23 633.34h2.4v2.4h-2.4zM1721.26 633.34h2.4v2.4h-2.4zM1742.29 633.34h2.4v2.4h-2.4zM1763.32 633.34h2.4v2.4h-2.4zM1784.36 633.34h2.4v2.4h-2.4zM1805.39 633.34h2.4v2.4h-2.4zM1826.42 633.34h2.4v2.4h-2.4zM1847.45 633.34h2.4v2.4h-2.4zM1868.48 633.34h2.4v2.4h-2.4zM1889.52 633.34h2.4v2.4h-2.4zM1910.55 633.34h2.4v2.4h-2.4zM1931.58 633.34h2.4v2.4h-2.4zM1952.61 633.34h2.4v2.4h-2.4zM1973.64 633.34h2.4v2.4h-2.4zM1994.68 633.34h2.4v2.4h-2.4zM2015.71 633.34h2.4v2.4h-2.4zM2036.74 633.34h2.4v2.4h-2.4zM2057.77 633.34h2.4v2.4h-2.4zM2078.80 633.34h2.4v2.4h-2.4zM2099.84 633.34h2.4v2.4h-2.4zM2120.87 633.34h2.4v2.4h-2.4zM1195.46 32.65h2.4v2.4h-2.4zM1195.46 46.30h2.4v2.4h-2.4zM1195.46 59.96h2.4v2.4h-2.4zM1195.46 73.61h2.4v2.4h-2.4zM1195.46 100.91h2.4v2.4h-2.4zM1195.46 114.56h2.4v2.4h-2.4zM1195.46 128.22h2.4v2.4h-2.4zM1195.46 141.87h2.4v2.4h-2.4zM1195.46 169.17h2.4v2.4h-2.4zM1195.46 182.82h2.4v2.4h-2.4zM1195.46 196.48h2.4v2.4h-2.4zM1195.46 210.13h2.4v2.4h-2.4zM1195.46 237.43h2.4v2.4h-2.4zM1195.46 251.08h2.4v2.4h-2.4zM1195.46 264.74h2.4v2.4h-2.4zM1195.46 278.39h2.4v2.4h-2.4zM1195.46 305.69h2.4v2.4h-2.4zM1195.46 319.34h2.4v2.4h-2.4zM1195.46 333.00h2.4v2.4h-2.4zM1195.46 346.65h2.4v2.4h-2.4zM1195.46 373.95h2.4v2.4h-2.4zM1195.46 387.60h2.4v2.4h-2.4zM1195.46 401.26h2.4v2.4h-2.4zM1195.46 414.91h2.4v2.4h-2.4zM1195.46 442.21h2.4v2.4h-2.4zM1195.46 455.86h2.4v2.4h-2.4zM1195.46 469.52h2.4v2.4h-2.4zM1195.46 483.17h2.4v2.4h-2.4zM1195.46 510.47h2.4v2.4h-2.4zM1195.46 524.12h2.4v2.4h-2.4zM1195.46 537.78h2.4v2.4h-2.4zM1195.46 551.43h2.4v2.4h-2.4zM1195.46 578.73h2.4v2.4h-2.4zM1195.46 592.38h2.4v2.4h-2.4zM1195.46 606.04h2.4v2.4h-2.4zM1195.46 619.69h2.4v2.4h-2.4zM1195.46 646.99h2.4v2.4h-2.4zM1195.46 660.64h2.4v2.4h-2.4zM1195.46 674.30h2.4v2.4h-2.4zM1195.46 687.95h2.4v2.4h-2.4zM1300.62 32.65h2.4v2.4h-2.4zM1300.62 46.30h2.4v2.4h-2.4zM1300.62 59.96h2.4v2.4h-2.4zM1300.62 73.61h2.4v2.4h-2.4zM1300.62 100.91h2.4v2.4h-2.4zM1300.62 114.56h2.4v2.4h-2.4zM1300.62 128.22h2.4v2.4h-2.4zM1300.62 141.87h2.4v2.4h-2.4zM1300.62 169.17h2.4v2.4h-2.4zM1300.62 182.82h2.4v2.4h-2.4zM1300.62 196.48h2.4v2.4h-2.4zM1300.62 210.13h2.4v2.4h-2.4zM1300.62 237.43h2.4v2.4h-2.4zM1300.62 251.08h2.4v2.4h-2.4zM1300.62 264.74h2.4v2.4h-2.4zM1300.62 278.39h2.4v2.4h-2.4zM1300.62 305.69h2.4v2.4h-2.4zM1300.62 319.34h2.4v2.4h-2.4zM1300.62 333.00h2.4v2.4h-2.4zM1300.62 346.65h2.4v2.4h-2.4zM1300.62 373.95h2.4v2.4h-2.4zM1300.62 387.60h2.4v2.4h-2.4zM1300.62 401.26h2.4v2.4h-2.4zM1300.62 414.91h2.4v2.4h-2.4zM1300.62 442.21h2.4v2.4h-2.4zM1300.62 455.86h2.4v2.4h-2.4zM1300.62 469.52h2.4v2.4h-2.4zM1300.62 483.17h2.4v2.4h-2.4zM1300.62 510.47h2.4v2.4h-2.4zM1300.62 524.12h2.4v2.4h-2.4zM1300.62 537.78h2.4v2.4h-2.4zM1300.62 551.43h2.4v2.4h-2.4zM1300.62 578.73h2.4v2.4h-2.4zM1300.62 592.38h2.4v2.4h-2.4zM1300.62 606.04h2.4v2.4h-2.4zM1300.62 619.69h2.4v2.4h-2.4zM1300.62 646.99h2.4v2.4h-2.4zM1300.62 660.64h2.4v2.4h-2.4zM1300.62 674.30h2.4v2.4h-2.4zM1300.62 687.95h2.4v2.4h-2.4zM1405.78 32.65h2.4v2.4h-2.4zM1405.78 46.30h2.4v2.4h-2.4zM1405.78 59.96h2.4v2.4h-2.4zM1405.78 73.61h2.4v2.4h-2.4zM1405.78 100.91h2.4v2.4h-2.4zM1405.78 114.56h2.4v2.4h-2.4zM1405.78 128.22h2.4v2.4h-2.4zM1405.78 141.87h2.4v2.4h-2.4zM1405.78 169.17h2.4v2.4h-2.4zM1405.78 182.82h2.4v2.4h-2.4zM1405.78 196.48h2.4v2.4h-2.4zM1405.78 210.13h2.4v2.4h-2.4zM1405.78 237.43h2.4v2.4h-2.4zM1405.78 251.08h2.4v2.4h-2.4zM1405.78 264.74h2.4v2.4h-2.4zM1405.78 278.39h2.4v2.4h-2.4zM1405.78 305.69h2.4v2.4h-2.4zM1405.78 319.34h2.4v2.4h-2.4zM1405.78 333.00h2.4v2.4h-2.4zM1405.78 346.65h2.4v2.4h-2.4zM1405.78 373.95h2.4v2.4h-2.4zM1405.78 387.60h2.4v2.4h-2.4zM1405.78 401.26h2.4v2.4h-2.4zM1405.78 414.91h2.4v2.4h-2.4zM1405.78 442.21h2.4v2.4h-2.4zM1405.78 455.86h2.4v2.4h-2.4zM1405.78 469.52h2.4v2.4h-2.4zM1405.78 483.17h2.4v2.4h-2.4zM1405.78 510.47h2.4v2.4h-2.4zM1405.78 524.12h2.4v2.4h-2.4zM1405.78 537.78h2.4v2.4h-2.4zM1405.78 551.43h2.4v2.4h-2.4zM1405.78 578.73h2.4v2.4h-2.4zM1405.78 592.38h2.4v2.4h-2.4zM1405.78 606.04h2.4v2.4h-2.4zM1405.78 619.69h2.4v2.4h-2.4zM1405.78 646.99h2.4v2.4h-2.4zM1405.78 660.64h2.4v2.4h-2.4zM1405.78 674.30h2.4v2.4h-2.4zM1405.78 687.95h2.4v2.4h-2.4zM1510.94 32.65h2.4v2.4h-2.4zM1510.94 46.30h2.4v2.4h-2.4zM1510.94 59.96h2.4v2.4h-2.4zM1510.94 73.61h2.4v2.4h-2.4zM1510.94 100.91h2.4v2.4h-2.4zM1510.94 114.56h2.4v2.4h-2.4zM1510.94 128.22h2.4v2.4h-2.4zM1510.94 141.87h2.4v2.4h-2.4zM1510.94 169.17h2.4v2.4h-2.4zM1510.94 182.82h2.4v2.4h-2.4zM1510.94 196.48h2.4v2.4h-2.4zM1510.94 210.13h2.4v2.4h-2.4zM1510.94 237.43h2.4v2.4h-2.4zM1510.94 251.08h2.4v2.4h-2.4zM1510.94 264.74h2.4v2.4h-2.4zM1510.94 278.39h2.4v2.4h-2.4zM1510.94 305.69h2.4v2.4h-2.4zM1510.94 319.34h2.4v2.4h-2.4zM1510.94 333.00h2.4v2.4h-2.4zM1510.94 346.65h2.4v2.4h-2.4zM1510.94 373.95h2.4v2.4h-2.4zM1510.94 387.60h2.4v2.4h-2.4zM1510.94 401.26h2.4v2.4h-2.4zM1510.94 414.91h2.4v2.4h-2.4zM1510.94 442.21h2.4v2.4h-2.4zM1510.94 455.86h2.4v2.4h-2.4zM1510.94 469.52h2.4v2.4h-2.4zM1510.94 483.17h2.4v2.4h-2.4zM1510.94 510.47h2.4v2.4h-2.4zM1510.94 524.12h2.4v2.4h-2.4zM1510.94 537.78h2.4v2.4h-2.4zM1510.94 551.43h2.4v2.4h-2.4zM1510.94 578.73h2.4v2.4h-2.4zM1510.94 592.38h2.4v2.4h-2.4zM1510.94 606.04h2.4v2.4h-2.4zM1510.94 619.69h2.4v2.4h-2.4zM1510.94 646.99h2.4v2.4h-2.4zM1510.94 660.64h2.4v2.4h-2.4zM1510.94 674.30h2.4v2.4h-2.4zM1510.94 687.95h2.4v2.4h-2.4zM1721.26 32.65h2.4v2.4h-2.4zM1721.26 46.30h2.4v2.4h-2.4zM1721.26 59.96h2.4v2.4h-2.4zM1721.26 73.61h2.4v2.4h-2.4zM1721.26 100.91h2.4v2.4h-2.4zM1721.26 114.56h2.4v2.4h-2.4zM1721.26 128.22h2.4v2.4h-2.4zM1721.26 141.87h2.4v2.4h-2.4zM1721.26 169.17h2.4v2.4h-2.4zM1721.26 182.82h2.4v2.4h-2.4zM1721.26 196.48h2.4v2.4h-2.4zM1721.26 210.13h2.4v2.4h-2.4zM1721.26 237.43h2.4v2.4h-2.4zM1721.26 251.08h2.4v2.4h-2.4zM1721.26 264.74h2.4v2.4h-2.4zM1721.26 278.39h2.4v2.4h-2.4zM1721.26 305.69h2.4v2.4h-2.4zM1721.26 319.34h2.4v2.4h-2.4zM1721.26 333.00h2.4v2.4h-2.4zM1721.26 346.65h2.4v2.4h-2.4zM1721.26 373.95h2.4v2.4h-2.4zM1721.26 387.60h2.4v2.4h-2.4zM1721.26 401.26h2.4v2.4h-2.4zM1721.26 414.91h2.4v2.4h-2.4zM1721.26 442.21h2.4v2.4h-2.4zM1721.26 455.86h2.4v2.4h-2.4zM1721.26 469.52h2.4v2.4h-2.4zM1721.26 483.17h2.4v2.4h-2.4zM1721.26 510.47h2.4v2.4h-2.4zM1721.26 524.12h2.4v2.4h-2.4zM1721.26 537.78h2.4v2.4h-2.4zM1721.26 551.43h2.4v2.4h-2.4zM1721.26 578.73h2.4v2.4h-2.4zM1721.26 592.38h2.4v2.4h-2.4zM1721.26 606.04h2.4v2.4h-2.4zM1721.26 619.69h2.4v2.4h-2.4zM1721.26 646.99h2.4v2.4h-2.4zM1721.26 660.64h2.4v2.4h-2.4zM1721.26 674.30h2.4v2.4h-2.4zM1721.26 687.95h2.4v2.4h-2.4zM1826.42 32.65h2.4v2.4h-2.4zM1826.42 46.30h2.4v2.4h-2.4zM1826.42 59.96h2.4v2.4h-2.4zM1826.42 73.61h2.4v2.4h-2.4zM1826.42 100.91h2.4v2.4h-2.4zM1826.42 114.56h2.4v2.4h-2.4zM1826.42 128.22h2.4v2.4h-2.4zM1826.42 141.87h2.4v2.4h-2.4zM1826.42 169.17h2.4v2.4h-2.4zM1826.42 182.82h2.4v2.4h-2.4zM1826.42 196.48h2.4v2.4h-2.4zM1826.42 210.13h2.4v2.4h-2.4zM1826.42 237.43h2.4v2.4h-2.4zM1826.42 251.08h2.4v2.4h-2.4zM1826.42 264.74h2.4v2.4h-2.4zM1826.42 278.39h2.4v2.4h-2.4zM1826.42 305.69h2.4v2.4h-2.4zM1826.42 319.34h2.4v2.4h-2.4zM1826.42 333.00h2.4v2.4h-2.4zM1826.42 346.65h2.4v2.4h-2.4zM1826.42 373.95h2.4v2.4h-2.4zM1826.42 387.60h2.4v2.4h-2.4zM1826.42 401.26h2.4v2.4h-2.4zM1826.42 414.91h2.4v2.4h-2.4zM1826.42 442.21h2.4v2.4h-2.4zM1826.42 455.86h2.4v2.4h-2.4zM1826.42 469.52h2.4v2.4h-2.4zM1826.42 483.17h2.4v2.4h-2.4zM1826.42 510.47h2.4v2.4h-2.4zM1826.42 524.12h2.4v2.4h-2.4zM1826.42 537.78h2.4v2.4h-2.4zM1826.42 551.43h2.4v2.4h-2.4zM1826.42 578.73h2.4v2.4h-2.4zM1826.42 592.38h2.4v2.4h-2.4zM1826.42 606.04h2.4v2.4h-2.4zM1826.42 619.69h2.4v2.4h-2.4zM1826.42 646.99h2.4v2.4h-2.4zM1826.42 660.64h2.4v2.4h-2.4zM1826.42 674.30h2.4v2.4h-2.4zM1826.42 687.95h2.4v2.4h-2.4zM1931.58 32.65h2.4v2.4h-2.4zM1931.58 46.30h2.4v2.4h-2.4zM1931.58 59.96h2.4v2.4h-2.4zM1931.58 73.61h2.4v2.4h-2.4zM1931.58 100.91h2.4v2.4h-2.4zM1931.58 114.56h2.4v2.4h-2.4zM1931.58 128.22h2.4v2.4h-2.4zM1931.58 141.87h2.4v2.4h-2.4zM1931.58 169.17h2.4v2.4h-2.4zM1931.58 182.82h2.4v2.4h-2.4zM1931.58 196.48h2.4v2.4h-2.4zM1931.58 210.13h2.4v2.4h-2.4zM1931.58 237.43h2.4v2.4h-2.4zM1931.58 251.08h2.4v2.4h-2.4zM1931.58 264.74h2.4v2.4h-2.4zM1931.58 278.39h2.4v2.4h-2.4zM1931.58 305.69h2.4v2.4h-2.4zM1931.58 319.34h2.4v2.4h-2.4zM1931.58 333.00h2.4v2.4h-2.4zM1931.58 346.65h2.4v2.4h-2.4zM1931.58 373.95h2.4v2.4h-2.4zM1931.58 387.60h2.4v2.4h-2.4zM1931.58 401.26h2.4v2.4h-2.4zM1931.58 414.91h2.4v2.4h-2.4zM1931.58 442.21h2.4v2.4h-2.4zM1931.58 455.86h2.4v2.4h-2.4zM1931.58 469.52h2.4v2.4h-2.4zM1931.58 483.17h2.4v2.4h-2.4zM1931.58 510.47h2.4v2.4h-2.4zM1931.58 524.12h2.4v2.4h-2.4zM1931.58 537.78h2.4v2.4h-2.4zM1931.58 551.43h2.4v2.4h-2.4zM1931.58 578.73h2.4v2.4h-2.4zM1931.58 592.38h2.4v2.4h-2.4zM1931.58 606.04h2.4v2.4h-2.4zM1931.58 619.69h2.4v2.4h-2.4zM1931.58 646.99h2.4v2.4h-2.4zM1931.58 660.64h2.4v2.4h-2.4zM1931.58 674.30h2.4v2.4h-2.4zM1931.58 687.95h2.4v2.4h-2.4zM2036.74 32.65h2.4v2.4h-2.4zM2036.74 46.30h2.4v2.4h-2.4zM2036.74 59.96h2.4v2.4h-2.4zM2036.74 73.61h2.4v2.4h-2.4zM2036.74 100.91h2.4v2.4h-2.4zM2036.74 114.56h2.4v2.4h-2.4zM2036.74 128.22h2.4v2.4h-2.4zM2036.74 141.87h2.4v2.4h-2.4zM2036.74 169.17h2.4v2.4h-2.4zM2036.74 182.82h2.4v2.4h-2.4zM2036.74 196.48h2.4v2.4h-2.4zM2036.74 210.13h2.4v2.4h-2.4zM2036.74 237.43h2.4v2.4h-2.4zM2036.74 251.08h2.4v2.4h-2.4zM2036.74 264.74h2.4v2.4h-2.4zM2036.74 278.39h2.4v2.4h-2.4zM2036.74 305.69h2.4v2.4h-2.4zM2036.74 319.34h2.4v2.4h-2.4zM2036.74 333.00h2.4v2.4h-2.4zM2036.74 346.65h2.4v2.4h-2.4zM2036.74 373.95h2.4v2.4h-2.4zM2036.74 387.60h2.4v2.4h-2.4zM2036.74 401.26h2.4v2.4h-2.4zM2036.74 414.91h2.4v2.4h-2.4zM2036.74 442.21h2.4v2.4h-2.4zM2036.74 455.86h2.4v2.4h-2.4zM2036.74 469.52h2.4v2.4h-2.4zM2036.74 483.17h2.4v2.4h-2.4zM2036.74 510.47h2.4v2.4h-2.4zM2036.74 524.12h2.4v2.4h-2.4zM2036.74 537.78h2.4v2.4h-2.4zM2036.74 551.43h2.4v2.4h-2.4zM2036.74 578.73h2.4v2.4h-2.4zM2036.74 592.38h2.4v2.4h-2.4zM2036.74 606.04h2.4v2.4h-2.4zM2036.74 619.69h2.4v2.4h-2.4zM2036.74 646.99h2.4v2.4h-2.4zM2036.74 660.64h2.4v2.4h-2.4zM2036.74 674.30h2.4v2.4h-2.4zM2036.74 687.95h2.4v2.4h-2.4z" fill="#3a372a" stroke="none" stroke-width="1" />
<line x1="1091.20" y1="360.80" x2="2142.60" y2="360.80" stroke="#4a4636" stroke-width="1" />
<line x1="1616.80" y1="19.40" x2="1616.80" y2="702.80" stroke="#4a4636" stroke-width="1" />
<path d="M1112.03 358.30v5.00M1133.06 358.30v5.00M1154.10 358.30v5.00M1175.13 358.30v5.00M1196.16 356.80v8.00M1217.19 358.30v5.00M1238.22 358.30v5.00M1259.26 358.30v5.00M1280.29 358.30v5.00M1301.32 356.80v8.00M1322.35 358.30v5.00M1343.38 358.30v5.00M1364.42 358.30v5.00M1385.45 358.30v5.00M1406.48 356.80v8.00M1427.51 358.30v5.00M1448.54 358.30v5.00M1469.58 358.30v5.00M1490.61 358.30v5.00M1511.64 356.80v8.00M1532.67 358.30v5.00M1553.70 358.30v5.00M1574.74 358.30v5.00M1595.77 358.30v5.00M1616.80 356.80v8.00M1637.83 358.30v5.00M1658.86 358.30v5.00M1679.90 358.30v5.00M1700.93 358.30v5.00M1721.96 356.80v8.00M1742.99 358.30v5.00M1764.02 358.30v5.00M1785.06 358.30v5.00M1806.09 358.30v5.00M1827.12 356.80v8.00M1848.15 358.30v5.00M1869.18 358.30v5.00M1890.22 358.30v5.00M1911.25 358.30v5.00M1932.28 356.80v8.00M1953.31 358.30v5.00M1974.34 358.30v5.00M1995.38 358.30v5.00M2016.41 358.30v5.00M2037.44 356.80v8.00M2058.47 358.30v5.00M2079.50 358.30v5.00M2100.54 358.30v5.00M2121.57 358.30v5.00M1614.30 33.15h5.00M1614.30 46.80h5.00M1614.30 60.46h5.00M1614.30 74.11h5.00M1612.80 87.76h8.00M1614.30 101.41h5.00M1614.30 115.06h5.00M1614.30 128.72h5.00M1614.30 142.37h5.00M1612.80 156.02h8.00M1614.30 169.67h5.00M1614.30 183.32h5.00M1614.30 196.98h5.00M1614.30 210.63h5.00M1612.80 224.28h8.00M1614.30 237.93h5.00M1614.30 251.58h5.00M1614.30 265.24h5.00M1614.30 278.89h5.00M1612.80 292.54h8.00M1614.30 306.19h5.00M1614.30 319.84h5.00M1614.30 333.50h5.00M1614.30 347.15h5.00M1612.80 360.80h8.00M1614.30 374.45h5.00M1614.30 388.10h5.00M1614.30 401.76h5.00M1614.30 415.41h5.00M1612.80 429.06h8.00M1614.30 442.71h5.00M1614.30 456.36h5.00M1614.30 470.02h5.00M1614.30 483.67h5.00M1612.80 497.32h8.00M1614.30 510.97h5.00M1614.30 524.62h5.00M1614.30 538.28h5.00M1614.30 551.93h5.00M1612.80 565.58h8.00M1614.30 579.23h5.00M1614.30 592.88h5.00M1614.30 606.54h5.00M1614.30 620.19h5.00M1612.80 633.84h8.00M1614.30 647.49h5.00M1614.30 661.14h5.00M1614.30 674.80h5.00M1614.30 688.45h5.00" fill="none" stroke="#5c5741" stroke-width="1" />
<path d="M1112.03 19.40v3M1112.03 702.80v-3M1133.06 19.40v3M1133.06 702.80v-3M1154.10 19.40v3M1154.10 702.80v-3M1175.13 19.40v3M1175.13 702.80v-3M1196.16 19.40v3M1196.16 702.80v-3M1217.19 19.40v3M1217.19 702.80v-3M1238.22 19.40v3M1238.22 702.80v-3M1259.26 19.40v3M1259.26 702.80v-3M1280.29 19.40v3M1280.29 702.80v-3M1301.32 19.40v3M1301.32 702.80v-3M1322.35 19.40v3M1322.35 702.80v-3M1343.38 19.40v3M1343.38 702.80v-3M1364.42 19.40v3M1364.42 702.80v-3M1385.45 19.40v3M1385.45 702.80v-3M1406.48 19.40v3M1406.48 702.80v-3M1427.51 19.40v3M1427.51 702.80v-3M1448.54 19.40v3M1448.54 702.80v-3M1469.58 19.40v3M1469.58 702.80v-3M1490.61 19.40v3M1490.61 702.80v-3M1511.64 19.40v3M1511.64 702.80v-3M1532.67 19.40v3M1532.67 702.80v-3M1553.70 19.40v3M1553.70 702.80v-3M1574.74 19.40v3M1574.74 702.80v-3M1595.77 19.40v3M1595.77 702.80v-3M1616.80 19.40v3M1616.80 702.80v-3M1637.83 19.40v3M1637.83 702.80v-3M1658.86 19.40v3M1658.86 702.80v-3M1679.90 19.40v3M1679.90 702.80v-3M1700.93 19.40v3M1700.93 702.80v-3M1721.96 19.40v3M1721.96 702.80v-3M1742.99 19.40v3M1742.99 702.80v-3M1764.02 19.40v3M1764.02 702.80v-3M1785.06 19.40v3M1785.06 702.80v-3M1806.09 19.40v3M1806.09 702.80v-3M1827.12 19.40v3M1827.12 702.80v-3M1848.15 19.40v3M1848.15 702.80v-3M1869.18 19.40v3M1869.18 702.80v-3M1890.22 19.40v3M1890.22 702.80v-3M1911.25 19.40v3M1911.25 702.80v-3M1932.28 19.40v3M1932.28 702.80v-3M1953.31 19.40v3M1953.31 702.80v-3M1974.34 19.40v3M1974.34 702.80v-3M1995.38 19.40v3M1995.38 702.80v-3M2016.41 19.40v3M2016.41 702.80v-3M2037.44 19.40v3M2037.44 702.80v-3M2058.47 19.40v3M2058.47 702.80v-3M2079.50 19.40v3M2079.50 702.80v-3M2100.54 19.40v3M2100.54 702.80v-3M2121.57 19.40v3M2121.57 702.80v-3M1091.20 33.15h3M2142.60 33.15h-3M1091.20 46.80h3M2142.60 46.80h-3M1091.20 60.46h3M2142.60 60.46h-3M1091.20 74.11h3M2142.60 74.11h-3M1091.20 87.76h3M2142.60 87.76h-3M1091.20 101.41h3M2142.60 101.41h-3M1091.20 115.06h3M2142.60 115.06h-3M1091.20 128.72h3M2142.60 128.72h-3M1091.20 142.37h3M2142.60 142.37h-3M1091.20 156.02h3M2142.60 156.02h-3M1091.20 169.67h3M2142.60 169.67h-3M1091.20 183.32h3M2142.60 183.32h-3M1091.20 196.98h3M2142.60 196.98h-3M1091.20 210.63h3M2142.60 210.63h-3M1091.20 224.28h3M2142.60 224.28h-3M1091.20 237.93h3M2142.60 237.93h-3M1091.20 251.58h3M2142.60 251.58h-3M1091.20 265.24h3M2142.60 265.24h-3M1091.20 278.89h3M2142.60 278.89h-3M1091.20 292.54h3M2142.60 292.54h-3M1091.20 306.19h3M2142.60 306.19h-3M1091.20 319.84h3M2142.60 319.84h-3M1091.20 333.50h3M2142.60 333.50h-3M1091.20 347.15h3M2142.60 347.15h-3M1091.20 360.80h3M2142.60 360.80h-3M1091.20 374.45h3M2142.60 374.45h-3M1091.20 388.10h3M2142.60 388.10h-3M1091.20 401.76h3M2142.60 401.76h-3M1091.20 415.41h3M2142.60 415.41h-3M1091.20 429.06h3M2142.60 429.06h-3M1091.20 442.71h3M2142.60 442.71h-3M1091.20 456.36h3M2142.60 456.36h-3M1091.20 470.02h3M2142.60 470.02h-3M1091.20 483.67h3M2142.60 483.67h-3M1091.20 497.32h3M2142.60 497.32h-3M1091.20 510.97h3M2142.60 510.97h-3M1091.20 524.62h3M2142.60 524.62h-3M1091.20 538.28h3M2142.60 538.28h-3M1091.20 551.93h3M2142.60 551.93h-3M1091.20 565.58h3M2142.60 565.58h-3M1091.20 579.23h3M2142.60 579.23h-3M1091.20 592.88h3M2142.60 592.88h-3M1091.20 606.54h3M2142.60 606.54h-3M1091.20 620.19h3M2142.60 620.19h-3M1091.20 633.84h3M2142.60 633.84h-3M1091.20 647.49h3M2142.60 647.49h-3M1091.20 661.14h3M2142.60 661.14h-3M1091.20 674.80h3M2142.60 674.80h-3M1091.20 688.45h3M2142.60 688.45h-3" fill="none" stroke="#4a4636" stroke-width="1" />
<rect x="1091.20" y="19.40" width="1051.40" height="683.40" rx="0" fill="none" stroke="#2f4d68" stroke-width="1.8" />
<rect x="1196.40" y="2.60" width="840.60" height="16.20" rx="0" fill="#000" stroke="#3f77ad" stroke-width="1.6" />
<line x1="1366.20" y1="9.40" x2="1869.00" y2="9.40" stroke="#3a1366" stroke-width="3" />
<rect x="1479.00" y="6.80" width="9.30" height="12.00" rx="2.5" fill="#f59b00" stroke="none" stroke-width="1" />
<line x1="1483.60" y1="8.00" x2="1483.60" y2="18.00" stroke="#3a2600" stroke-width="1.6" />
<rect x="1559.00" y="4.30" width="2.50" height="12.70" rx="0" fill="#6e6a58" stroke="none" stroke-width="1" />
<path d="M1557.00 3H1563.50L1560.20 7Z" fill="#f59b00" stroke="none" stroke-width="1" />
<path d="M1610.80 19.5H1622.80L1616.80 26.5Z" fill="#f59b00" stroke="none" stroke-width="1" />
<path d="M1092.20 34.20L1098.20 27.40Q1099.20 26.40 1101.20 26.40H1108.20Q1110.20 26.40 1110.20 28.40V40.00Q1110.20 42.00 1108.20 42.00H1101.20Q1099.20 42.00 1098.20 41.00Z" fill="#f59b00" stroke="none" stroke-width="1" />
<path d="M1100.20 29.40H1107.20M1103.70 29.40V40.00" fill="none" stroke="#3a2600" stroke-width="2" />
<path d="M1073.50 48.70H1086.50L1080.00 56.20Z" fill="none" stroke="#a8b4c4" stroke-width="1.4" />
<rect x="1076.20" y="59.20" width="3.20" height="94.20" rx="0" fill="#5a6470" stroke="none" stroke-width="1" />
<text x="1073.50" y="79.44" font-size="25.459999999999997" fill="#e01010" font-weight="normal" text-anchor="start" textLength="8.5" lengthAdjust="spacingAndGlyphs" stroke="#e01010" stroke-width="0.6">2</text>
<path d="M1089.00 57.20H1085.00V84.00H1089.00" fill="none" stroke="#c01010" stroke-width="1.5" />
<text x="1073.50" y="113.61" font-size="25.65" fill="#c8c8c8" font-weight="normal" text-anchor="start" textLength="8.5" lengthAdjust="spacingAndGlyphs" stroke="#c8c8c8" stroke-width="0.6">0</text>
<path d="M1089.00 91.20H1085.00V118.20H1089.00" fill="none" stroke="#a0a0a0" stroke-width="1.5" />
<text x="1073.50" y="147.83" font-size="25.555000000000003" fill="#b08a48" font-weight="normal" text-anchor="start" textLength="8.5" lengthAdjust="spacingAndGlyphs" stroke="#b08a48" stroke-width="0.6">1</text>
<path d="M1089.00 125.50H1085.00V152.40H1089.00" fill="none" stroke="#8a7040" stroke-width="1.5" />
<path d="M1092.20 58.20H1408.00" fill="none" stroke="#1c7a36" stroke-width="2" />
<path d="M1408.00 84.00H1813.70" fill="none" stroke="#0a3078" stroke-width="2" />
<path d="M1813.70 58.20H2141.60" fill="none" stroke="#1c7a36" stroke-width="2" />
<path d="M1408.00 58.20V84.00M1813.70 58.20V84.00" fill="none" stroke="#7a7a70" stroke-width="1.2" />
<path d="M1092.20 118.20H2141.60" fill="none" stroke="#0a3078" stroke-width="2" />
<path d="M1630.50 92.70H1735.30" fill="none" stroke="#1f9a44" stroke-width="1.8" />
<path d="M1630.50 93.70h3.8v24.50h-3.8zM1636.81 93.70h3.8v24.50h-3.8zM1643.12 93.70h3.8v24.50h-3.8zM1649.44 93.70h3.8v24.50h-3.8zM1655.75 93.70h3.8v24.50h-3.8zM1662.06 93.70h3.8v24.50h-3.8zM1668.38 93.70h3.8v24.50h-3.8zM1674.69 93.70h3.8v24.50h-3.8zM1681.00 93.70h3.8v24.50h-3.8zM1687.31 93.70h3.8v24.50h-3.8zM1693.62 93.70h3.8v24.50h-3.8zM1699.94 93.70h3.8v24.50h-3.8zM1706.25 93.70h3.8v24.50h-3.8zM1712.56 93.70h3.8v24.50h-3.8zM1718.88 93.70h3.8v24.50h-3.8zM1725.19 93.70h3.8v24.50h-3.8zM1731.50 93.70h3.8v24.50h-3.8z" fill="#3c3c3a" stroke="none" stroke-width="1" />
<path d="M1092.20 152.40H1408.00M1409.50 152.40H1634.80M1642.00 152.40H1662.20M1670.00 152.40H2141.60" fill="none" stroke="#0a3078" stroke-width="2" />
<path d="M1408.00 152.40V127.00M1409.50 152.40V127.00M1634.80 152.40V127.00M1642.00 152.40V127.00M1662.20 152.40V127.00M1670.00 152.40V127.00" fill="none" stroke="#5e5e58" stroke-width="2" />
<path d="M1408.00 127.00H1409.50M1634.80 127.00H1642.00M1662.20 127.00H1670.00" fill="none" stroke="#22b04a" stroke-width="1.8" />
<line x1="1191.20" y1="348.20" x2="2141.60" y2="348.20" stroke="#7d2bd6" stroke-width="3" />
<path d="M1409.30 336.70Q1407.30 336.70 1407.30 338.70V356.70Q1407.30 358.70 1409.30 358.70" fill="none" stroke="#20c040" stroke-width="1.8" />
<path d="M1812.00 336.70Q1814.00 336.70 1814.00 338.70V356.70Q1814.00 358.70 1812.00 358.70" fill="none" stroke="#e02020" stroke-width="1.8" />
<path d="M1634.10 337.90H1725.50Q1728.50 347.80 1725.50 357.70H1634.10Q1631.10 347.80 1634.10 337.90Z" fill="#000" stroke="#0cb2b4" stroke-width="3" />
<text x="1679.80" y="353.40" font-size="16" fill="#e2e2ea" font-weight="normal" text-anchor="middle" textLength="42.0" lengthAdjust="spacingAndGlyphs" stroke="#e2e2ea" stroke-width="0.35" >4400</text>
<path d="M1099.20 338.90H1186.10Q1190.10 339.90 1192.10 347.65Q1190.10 355.40 1186.10 356.40H1099.20Q1095.20 355.40 1093.20 347.65Q1095.20 339.90 1099.20 338.90Z" fill="#7d2bd6" stroke="none" stroke-width="1" />
<text x="1098.70" y="352.95" font-size="15.3" fill="#240848" font-weight="bold" text-anchor="start" textLength="85.9" lengthAdjust="spacingAndGlyphs" stroke="#240848" stroke-width="0.2">SPI(MISO)</text>
<path d="M1074.50 338.90H1085.50L1092.00 347.65L1085.50 356.40H1074.50Z" fill="#7d2bd6" stroke="none" stroke-width="1" />
<text x="1074.80" y="352.65" font-size="14" fill="#240848" font-weight="bold" text-anchor="start" textLength="10.5" lengthAdjust="spacingAndGlyphs" stroke="#240848" stroke-width="0.2">B1</text>
<rect x="2013.20" y="29.60" width="119" height="37" fill="#000"/>
<path d="M2012.20 61.60V33.60Q2012.20 28.60 2017.20 28.60H2128.20Q2133.20 28.60 2133.20 33.60V61.60M2012.20 61.60Q2012.20 67.60 2015.20 67.60M2133.20 61.60Q2133.20 67.60 2130.20 67.60" fill="none" stroke="#7a7a7a" stroke-width="2"/>
<rect x="2028.50" y="31.20" width="26.10" height="17.50" rx="8.75" fill="#8a22e6" stroke="none" stroke-width="1" />
<text x="2041.55" y="44.63" font-size="14.3" fill="#1a0640" font-weight="bold" text-anchor="middle" textLength="15.7" lengthAdjust="spacingAndGlyphs" stroke="#1a0640" stroke-width="0.2">B1</text>
<text x="2057.10" y="46.20" font-size="18.5" fill="#e0e0e0" font-weight="normal" text-anchor="start" textLength="61.0" lengthAdjust="spacingAndGlyphs" stroke="#e0e0e0" stroke-width="0.41" >Vertical</text>
<circle cx="2025.10" cy="57.70" r="8.6" fill="#f04000"/>
<text x="2025.10" y="62.00" font-size="13" fill="#2a0a00" font-weight="normal" text-anchor="middle" stroke="#2a0a00" stroke-width="0.29" >a</text>
<text x="2037.10" y="63.30" font-size="16.5" fill="#e0e0e0" font-weight="normal" text-anchor="start" textLength="71.0" lengthAdjust="spacingAndGlyphs" stroke="#e0e0e0" stroke-width="0.36" >200mdiv</text>
<rect x="1681.60" y="668.60" width="154.70" height="38.00" rx="6" fill="#000" stroke="#727272" stroke-width="2" />
<path d="M1687.60 706.60H1830.30" fill="none" stroke="#9a9a98" stroke-width="2.4" />
<rect x="1843.50" y="668.60" width="111.90" height="38.00" rx="6" fill="#000" stroke="#727272" stroke-width="2" />
<path d="M1849.50 706.60H1949.40" fill="none" stroke="#9a9a98" stroke-width="2.4" />
<rect x="1681.60" y="709.50" width="273.80" height="38.00" rx="6" fill="#000" stroke="#727272" stroke-width="2" />
<path d="M1687.60 747.50H1949.40" fill="none" stroke="#9a9a98" stroke-width="2.4" />
<rect x="1962.60" y="707.00" width="180.90" height="38.00" rx="0" fill="#000" stroke="none" stroke-width="1" />
<path d="M1968.60 707.00Q1962.60 707.00 1962.60 713.00V739.00Q1962.60 745.00 1968.60 745.00H2137.50Q2143.50 745.00 2143.50 739.00V713.00Q2143.50 707.00 2137.50 707.00" fill="none" stroke="#727272" stroke-width="2" />
<path d="M1968.60 745.00H2137.50" fill="none" stroke="#9a9a98" stroke-width="2.4" />
<rect x="2025.70" y="766.70" width="116.60" height="50.00" rx="6" fill="#000" stroke="#727272" stroke-width="2" />
<path d="M2031.70 816.70H2136.30" fill="none" stroke="#9a9a98" stroke-width="2.4" />
<text x="1686.30" y="684.60" font-size="17" fill="#e0e0e0" font-weight="normal" text-anchor="start" textLength="57.5" lengthAdjust="spacingAndGlyphs" stroke="#e0e0e0" stroke-width="0.37" >2.00µs</text>
<rect x="1686.30" y="689.10" width="11.90" height="14.00" rx="2" fill="#f59b00" stroke="none" stroke-width="1" />
<path d="M1688.50 691.5H1696.00M1692.20 691.5V702.00" fill="none" stroke="#3a2600" stroke-width="1.8" />
<path d="M1699.00 696.5H1707.00M1704.00 693.5L1708.00 696.5L1704.00 699.5" fill="none" stroke="#f59b00" stroke-width="1.6" />
<path d="M1710.50 690.5H1722.00L1716.20 699Z" fill="#f59b00" stroke="none" stroke-width="1" />
<text x="1723.80" y="701.70" font-size="15.5" fill="#f59b00" font-weight="normal" text-anchor="start" textLength="103.0" lengthAdjust="spacingAndGlyphs" stroke="#f59b00" stroke-width="0.34" >60.04282ms</text>
<text x="1850.70" y="684.60" font-size="17" fill="#e0e0e0" font-weight="normal" text-anchor="start" textLength="75.0" lengthAdjust="spacingAndGlyphs" stroke="#e0e0e0" stroke-width="0.37" >2.50GS/s</text>
<text x="1851.00" y="701.50" font-size="17" fill="#e0e0e0" font-weight="normal" text-anchor="start" textLength="93.7" lengthAdjust="spacingAndGlyphs" stroke="#e0e0e0" stroke-width="0.37" >10M points</text>
<text x="1687.60" y="725.70" font-size="17" fill="#e0e0e0" font-weight="normal" text-anchor="start" textLength="32.0" lengthAdjust="spacingAndGlyphs" stroke="#e0e0e0" stroke-width="0.37" >D15</text>
<text x="1730.50" y="725.70" font-size="17" fill="#e0e0e0" font-weight="normal" text-anchor="start" textLength="23.7" lengthAdjust="spacingAndGlyphs" stroke="#e0e0e0" stroke-width="0.37" >D0</text>
<line x1="1721.00" y1="719.00" x2="1729.00" y2="719.00" stroke="#2a2a2a" stroke-width="1.5" />
<path d="M1688.00 734H1696.00" fill="none" stroke="#888" stroke-width="1.2" />
<path d="M1696.00 730V742.00" fill="none" stroke="#777" stroke-width="2" />
<path d="M1697.00 729.5H1708.00" fill="none" stroke="#1a9a3a" stroke-width="2" />
<path d="M1686.00 743.5H1698.00" fill="none" stroke="#1a3aaa" stroke-width="2" />
<path d="M1700.00 736H1707.00" fill="none" stroke="#999" stroke-width="1.5" />
<text x="1715.00" y="742.00" font-size="17" fill="#e0e0e0" font-weight="normal" text-anchor="start" textLength="222.0" lengthAdjust="spacingAndGlyphs" stroke="#e0e0e0" stroke-width="0.37" >Timing Resolution: 2.00ns</text>
<text x="2031.60" y="783.00" font-size="17" fill="#e0e0e0" font-weight="normal" text-anchor="start" textLength="110.0" lengthAdjust="spacingAndGlyphs" stroke="#e0e0e0" stroke-width="0.37" >20 Aug 2025</text>
<text x="2031.60" y="800.00" font-size="17" fill="#e0e0e0" font-weight="normal" text-anchor="start" textLength="74.0" lengthAdjust="spacingAndGlyphs" stroke="#e0e0e0" stroke-width="0.37" >13:51:21</text>
<rect x="1982.20" y="707.60" width="26.50" height="16.50" rx="8.25" fill="#8a22e6" stroke="none" stroke-width="1" />
<text x="1995.45" y="720.17" font-size="13.200000000000001" fill="#1a0640" font-weight="bold" text-anchor="middle" textLength="15.9" lengthAdjust="spacingAndGlyphs" stroke="#1a0640" stroke-width="0.2">B1</text>
<text x="2014.50" y="721.40" font-size="17" fill="#e0e0e0" font-weight="normal" text-anchor="start" textLength="77.5" lengthAdjust="spacingAndGlyphs" stroke="#e0e0e0" stroke-width="0.37" >SS Active</text>
<rect x="1091.40" y="750.20" width="118.60" height="60.00" rx="4" fill="#545654" stroke="#676967" stroke-width="1" />
<rect x="1215.00" y="750.20" width="118.60" height="60.00" rx="4" fill="#545654" stroke="#676967" stroke-width="1" />
<rect x="1339.00" y="750.20" width="118.60" height="60.00" rx="4" fill="#545654" stroke="#676967" stroke-width="1" />
<rect x="1463.00" y="750.20" width="118.60" height="60.00" rx="4" fill="#545654" stroke="#676967" stroke-width="1" />
<rect x="1587.00" y="750.20" width="118.60" height="60.00" rx="4" fill="#545654" stroke="#676967" stroke-width="1" />
<rect x="1710.20" y="750.20" width="118.60" height="60.00" rx="4" fill="#545654" stroke="#676967" stroke-width="1" />
<rect x="1834.00" y="750.20" width="118.60" height="60.00" rx="4" fill="#545654" stroke="#676967" stroke-width="1" />
<text x="1120.60" y="775.40" font-size="16.5" fill="#dcdcdc" font-weight="normal" text-anchor="start" textLength="28.5" lengthAdjust="spacingAndGlyphs" stroke="#dcdcdc" stroke-width="0.36" >Bus</text>
<rect x="1156.00" y="761.70" width="26.20" height="17.60" rx="8.8" fill="#8a22e6" stroke="none" stroke-width="1" />
<text x="1169.10" y="774.82" font-size="13.200000000000001" fill="#1a0640" font-weight="bold" text-anchor="middle" textLength="15.7" lengthAdjust="spacingAndGlyphs" stroke="#1a0640" stroke-width="0.2">B1</text>
<rect x="1136.00" y="779.80" width="30.50" height="16.70" rx="0" fill="#0a78f0" stroke="none" stroke-width="1" />
<text x="1151.20" y="793.40" font-size="16.5" fill="#f0f8ff" font-weight="normal" text-anchor="middle" textLength="26.0" lengthAdjust="spacingAndGlyphs" stroke="#f0f8ff" stroke-width="0.36" >SPI</text>
<text x="1275.60" y="776.00" font-size="16.5" fill="#dcdcdc" font-weight="normal" text-anchor="middle" textLength="56.0" lengthAdjust="spacingAndGlyphs" stroke="#dcdcdc" stroke-width="0.36" >Define</text>
<text x="1275.00" y="793.40" font-size="16.5" fill="#dcdcdc" font-weight="normal" text-anchor="middle" textLength="56.0" lengthAdjust="spacingAndGlyphs" stroke="#dcdcdc" stroke-width="0.36" >Inputs</text>
<text x="1398.70" y="783.80" font-size="17" fill="#dcdcdc" font-weight="normal" text-anchor="middle" textLength="92.8" lengthAdjust="spacingAndGlyphs" stroke="#dcdcdc" stroke-width="0.37" >Thresholds</text>
<text x="1522.90" y="783.80" font-size="17" fill="#dcdcdc" font-weight="normal" text-anchor="middle" textLength="82.3" lengthAdjust="spacingAndGlyphs" stroke="#dcdcdc" stroke-width="0.37" >Configure</text>
<rect x="1609.80" y="761.70" width="26.20" height="17.60" rx="8.8" fill="#8a22e6" stroke="none" stroke-width="1" />
<text x="1622.90" y="774.82" font-size="13.200000000000001" fill="#1a0640" font-weight="bold" text-anchor="middle" textLength="15.7" lengthAdjust="spacingAndGlyphs" stroke="#1a0640" stroke-width="0.2">B1</text>
<text x="1643.50" y="775.40" font-size="16.5" fill="#dcdcdc" font-weight="normal" text-anchor="start" textLength="42.0" lengthAdjust="spacingAndGlyphs" stroke="#dcdcdc" stroke-width="0.36" >Label</text>
<rect x="1633.00" y="779.80" width="30.50" height="16.70" rx="0" fill="#0a78f0" stroke="none" stroke-width="1" />
<text x="1648.00" y="793.40" font-size="16.5" fill="#f0f8ff" font-weight="normal" text-anchor="middle" textLength="26.0" lengthAdjust="spacingAndGlyphs" stroke="#f0f8ff" stroke-width="0.36" >SPI</text>
<text x="1771.30" y="783.30" font-size="17" fill="#dcdcdc" font-weight="normal" text-anchor="middle" textLength="96.0" lengthAdjust="spacingAndGlyphs" stroke="#dcdcdc" stroke-width="0.37" >Bus Display</text>
<text x="1894.50" y="783.30" font-size="17" fill="#dcdcdc" font-weight="normal" text-anchor="middle" textLength="98.0" lengthAdjust="spacingAndGlyphs" stroke="#dcdcdc" stroke-width="0.37" >Event Table</text>
<rect x="2146.00" y="0.00" width="1073.00" height="1.00" rx="0" fill="#505050" stroke="none" stroke-width="1" />
<rect x="2147.00" y="2.20" width="3.30" height="13.60" rx="0" fill="#d8d8e0" stroke="none" stroke-width="1" />
<rect x="2150.00" y="2.20" width="3.20" height="2.00" rx="0" fill="#c8c8d0" stroke="none" stroke-width="1" />
<text x="2152.00" y="15.80" font-size="19.5" fill="#dcdce4" font-weight="bold" text-anchor="start" textLength="22.5" lengthAdjust="spacingAndGlyphs" stroke="#dcdce4" stroke-width="0.5">ek</text>
<text x="2179.60" y="13.90" font-size="17" fill="#d8d8e0" font-weight="normal" text-anchor="start" textLength="48.5" lengthAdjust="spacingAndGlyphs" stroke="#d8d8e0" stroke-width="0.5">PreVu</text>
<text x="2760.50" y="13.50" font-size="15.5" fill="#e0e0e0" font-weight="normal" text-anchor="start" textLength="71.5" lengthAdjust="spacingAndGlyphs" stroke="#e0e0e0" stroke-width="0.34" >M 400µs</text>
<rect x="2164.00" y="17.40" width="1051.60" height="139.60" rx="0" fill="none" stroke="#2f4d68" stroke-width="1.8" />
<line x1="2165.00" y1="31.00" x2="3214.60" y2="31.00" stroke="#1c7a36" stroke-width="2" />
<line x1="2165.00" y1="39.00" x2="3214.60" y2="39.00" stroke="#0d4ec4" stroke-width="2.4" />
<line x1="2165.00" y1="44.70" x2="3214.60" y2="44.70" stroke="#0a3078" stroke-width="2" />
<rect x="3212.10" y="46.00" width="2.80" height="107.00" rx="0" fill="#6b6650" stroke="none" stroke-width="1" />
<line x1="2264.00" y1="86.60" x2="3214.60" y2="86.60" stroke="#7d2bd6" stroke-width="3" />
<path d="M2690.00 74.00V97.00" fill="none" stroke="#20b040" stroke-width="1.6" />
<path d="M2691.80 74.00V97.00" fill="none" stroke="#d02020" stroke-width="1.6" />
<path d="M2174.80 75.00H2258.40Q2262.40 76.00 2264.40 83.75Q2262.40 91.50 2258.40 92.50H2174.80Q2170.80 91.50 2168.80 83.75Q2170.80 76.00 2174.80 75.00Z" fill="#7d2bd6" stroke="none" stroke-width="1" />
<text x="2174.30" y="89.05" font-size="15.3" fill="#240848" font-weight="bold" text-anchor="start" textLength="82.6" lengthAdjust="spacingAndGlyphs" stroke="#240848" stroke-width="0.2">SPI(MISO)</text>
<path d="M2147.00 75.00H2158.00L2164.50 83.75L2158.00 92.50H2147.00Z" fill="#7d2bd6" stroke="none" stroke-width="1" />
<text x="2147.30" y="88.75" font-size="14" fill="#240848" font-weight="bold" text-anchor="start" textLength="10.5" lengthAdjust="spacingAndGlyphs" stroke="#240848" stroke-width="0.2">B1</text>
<path d="M2165.00 38.00L2171.00 32.00Q2172.00 31.00 2174.00 31.00H2181.00Q2183.00 31.00 2183.00 33.00V43.00Q2183.00 45.00 2181.00 45.00H2174.00Q2172.00 45.00 2171.00 44.00Z" fill="#f59b00" stroke="none" stroke-width="1" />
<path d="M2173.00 34.00H2180.00M2176.50 34.00V43.00" fill="none" stroke="#3a2600" stroke-width="2" />
<circle cx="2166.20" cy="74.80" r="1.3" fill="#d03020"/><circle cx="2166.20" cy="95.90" r="1.3" fill="#d03020"/>
<path d="M2164.50 18.00H2172.00L2165.50 29.00Z" fill="#f0f0ff" stroke="none" stroke-width="1" />
<path d="M2684.10 18.00H2695.10L2689.60 29.00Z" fill="#f0f0ff" stroke="none" stroke-width="1" />
<rect x="3086.10" y="27.10" width="119" height="37" fill="#000"/>
<path d="M3085.10 59.10V31.10Q3085.10 26.10 3090.10 26.10H3201.10Q3206.10 26.10 3206.10 31.10V59.10M3085.10 59.10Q3085.10 65.10 3088.10 65.10M3206.10 59.10Q3206.10 65.10 3203.10 65.10" fill="none" stroke="#7a7a7a" stroke-width="2"/>
<rect x="3101.40" y="28.70" width="26.10" height="17.50" rx="8.75" fill="#8a22e6" stroke="none" stroke-width="1" />
<text x="3114.45" y="42.13" font-size="14.3" fill="#1a0640" font-weight="bold" text-anchor="middle" textLength="15.7" lengthAdjust="spacingAndGlyphs" stroke="#1a0640" stroke-width="0.2">B1</text>
<text x="3130.00" y="43.70" font-size="18.5" fill="#e0e0e0" font-weight="normal" text-anchor="start" textLength="61.0" lengthAdjust="spacingAndGlyphs" stroke="#e0e0e0" stroke-width="0.41" >Vertical</text>
<circle cx="3098.00" cy="55.20" r="8.6" fill="#f04000"/>
<text x="3098.00" y="59.50" font-size="13" fill="#2a0a00" font-weight="normal" text-anchor="middle" stroke="#2a0a00" stroke-width="0.29" >a</text>
<text x="3110.00" y="60.80" font-size="16.5" fill="#e0e0e0" font-weight="normal" text-anchor="start" textLength="71.0" lengthAdjust="spacingAndGlyphs" stroke="#e0e0e0" stroke-width="0.36" >220mdiv</text>
<text x="2164.50" y="171.30" font-size="16.8" fill="#dedede" font-weight="normal" text-anchor="start" textLength="163.3" lengthAdjust="spacingAndGlyphs" stroke="#dedede" stroke-width="0.37" >Zoom Factor: 200 X</text>
<text x="2379.70" y="171.30" font-size="16.8" fill="#dedede" font-weight="normal" text-anchor="start" textLength="187.8" lengthAdjust="spacingAndGlyphs" stroke="#dedede" stroke-width="0.37" >Zoom Position: 108ms</text>
<path d="M2185.13 228.00h2.4v2.4h-2.4zM2206.16 228.00h2.4v2.4h-2.4zM2227.20 228.00h2.4v2.4h-2.4zM2248.23 228.00h2.4v2.4h-2.4zM2269.26 228.00h2.4v2.4h-2.4zM2290.29 228.00h2.4v2.4h-2.4zM2311.32 228.00h2.4v2.4h-2.4zM2332.36 228.00h2.4v2.4h-2.4zM2353.39 228.00h2.4v2.4h-2.4zM2374.42 228.00h2.4v2.4h-2.4zM2395.45 228.00h2.4v2.4h-2.4zM2416.48 228.00h2.4v2.4h-2.4zM2437.52 228.00h2.4v2.4h-2.4zM2458.55 228.00h2.4v2.4h-2.4zM2479.58 228.00h2.4v2.4h-2.4zM2500.61 228.00h2.4v2.4h-2.4zM2521.64 228.00h2.4v2.4h-2.4zM2542.68 228.00h2.4v2.4h-2.4zM2563.71 228.00h2.4v2.4h-2.4zM2584.74 228.00h2.4v2.4h-2.4zM2605.77 228.00h2.4v2.4h-2.4zM2626.80 228.00h2.4v2.4h-2.4zM2647.84 228.00h2.4v2.4h-2.4zM2668.87 228.00h2.4v2.4h-2.4zM2689.90 228.00h2.4v2.4h-2.4zM2710.93 228.00h2.4v2.4h-2.4zM2731.96 228.00h2.4v2.4h-2.4zM2753.00 228.00h2.4v2.4h-2.4zM2774.03 228.00h2.4v2.4h-2.4zM2795.06 228.00h2.4v2.4h-2.4zM2816.09 228.00h2.4v2.4h-2.4zM2837.12 228.00h2.4v2.4h-2.4zM2858.16 228.00h2.4v2.4h-2.4zM2879.19 228.00h2.4v2.4h-2.4zM2900.22 228.00h2.4v2.4h-2.4zM2921.25 228.00h2.4v2.4h-2.4zM2942.28 228.00h2.4v2.4h-2.4zM2963.32 228.00h2.4v2.4h-2.4zM2984.35 228.00h2.4v2.4h-2.4zM3005.38 228.00h2.4v2.4h-2.4zM3026.41 228.00h2.4v2.4h-2.4zM3047.44 228.00h2.4v2.4h-2.4zM3068.48 228.00h2.4v2.4h-2.4zM3089.51 228.00h2.4v2.4h-2.4zM3110.54 228.00h2.4v2.4h-2.4zM3131.57 228.00h2.4v2.4h-2.4zM3152.60 228.00h2.4v2.4h-2.4zM3173.64 228.00h2.4v2.4h-2.4zM3194.67 228.00h2.4v2.4h-2.4zM2185.13 280.55h2.4v2.4h-2.4zM2206.16 280.55h2.4v2.4h-2.4zM2227.20 280.55h2.4v2.4h-2.4zM2248.23 280.55h2.4v2.4h-2.4zM2269.26 280.55h2.4v2.4h-2.4zM2290.29 280.55h2.4v2.4h-2.4zM2311.32 280.55h2.4v2.4h-2.4zM2332.36 280.55h2.4v2.4h-2.4zM2353.39 280.55h2.4v2.4h-2.4zM2374.42 280.55h2.4v2.4h-2.4zM2395.45 280.55h2.4v2.4h-2.4zM2416.48 280.55h2.4v2.4h-2.4zM2437.52 280.55h2.4v2.4h-2.4zM2458.55 280.55h2.4v2.4h-2.4zM2479.58 280.55h2.4v2.4h-2.4zM2500.61 280.55h2.4v2.4h-2.4zM2521.64 280.55h2.4v2.4h-2.4zM2542.68 280.55h2.4v2.4h-2.4zM2563.71 280.55h2.4v2.4h-2.4zM2584.74 280.55h2.4v2.4h-2.4zM2605.77 280.55h2.4v2.4h-2.4zM2626.80 280.55h2.4v2.4h-2.4zM2647.84 280.55h2.4v2.4h-2.4zM2668.87 280.55h2.4v2.4h-2.4zM2689.90 280.55h2.4v2.4h-2.4zM2710.93 280.55h2.4v2.4h-2.4zM2731.96 280.55h2.4v2.4h-2.4zM2753.00 280.55h2.4v2.4h-2.4zM2774.03 280.55h2.4v2.4h-2.4zM2795.06 280.55h2.4v2.4h-2.4zM2816.09 280.55h2.4v2.4h-2.4zM2837.12 280.55h2.4v2.4h-2.4zM2858.16 280.55h2.4v2.4h-2.4zM2879.19 280.55h2.4v2.4h-2.4zM2900.22 280.55h2.4v2.4h-2.4zM2921.25 280.55h2.4v2.4h-2.4zM2942.28 280.55h2.4v2.4h-2.4zM2963.32 280.55h2.4v2.4h-2.4zM2984.35 280.55h2.4v2.4h-2.4zM3005.38 280.55h2.4v2.4h-2.4zM3026.41 280.55h2.4v2.4h-2.4zM3047.44 280.55h2.4v2.4h-2.4zM3068.48 280.55h2.4v2.4h-2.4zM3089.51 280.55h2.4v2.4h-2.4zM3110.54 280.55h2.4v2.4h-2.4zM3131.57 280.55h2.4v2.4h-2.4zM3152.60 280.55h2.4v2.4h-2.4zM3173.64 280.55h2.4v2.4h-2.4zM3194.67 280.55h2.4v2.4h-2.4zM2185.13 333.10h2.4v2.4h-2.4zM2206.16 333.10h2.4v2.4h-2.4zM2227.20 333.10h2.4v2.4h-2.4zM2248.23 333.10h2.4v2.4h-2.4zM2269.26 333.10h2.4v2.4h-2.4zM2290.29 333.10h2.4v2.4h-2.4zM2311.32 333.10h2.4v2.4h-2.4zM2332.36 333.10h2.4v2.4h-2.4zM2353.39 333.10h2.4v2.4h-2.4zM2374.42 333.10h2.4v2.4h-2.4zM2395.45 333.10h2.4v2.4h-2.4zM2416.48 333.10h2.4v2.4h-2.4zM2437.52 333.10h2.4v2.4h-2.4zM2458.55 333.10h2.4v2.4h-2.4zM2479.58 333.10h2.4v2.4h-2.4zM2500.61 333.10h2.4v2.4h-2.4zM2521.64 333.10h2.4v2.4h-2.4zM2542.68 333.10h2.4v2.4h-2.4zM2563.71 333.10h2.4v2.4h-2.4zM2584.74 333.10h2.4v2.4h-2.4zM2605.77 333.10h2.4v2.4h-2.4zM2626.80 333.10h2.4v2.4h-2.4zM2647.84 333.10h2.4v2.4h-2.4zM2668.87 333.10h2.4v2.4h-2.4zM2689.90 333.10h2.4v2.4h-2.4zM2710.93 333.10h2.4v2.4h-2.4zM2731.96 333.10h2.4v2.4h-2.4zM2753.00 333.10h2.4v2.4h-2.4zM2774.03 333.10h2.4v2.4h-2.4zM2795.06 333.10h2.4v2.4h-2.4zM2816.09 333.10h2.4v2.4h-2.4zM2837.12 333.10h2.4v2.4h-2.4zM2858.16 333.10h2.4v2.4h-2.4zM2879.19 333.10h2.4v2.4h-2.4zM2900.22 333.10h2.4v2.4h-2.4zM2921.25 333.10h2.4v2.4h-2.4zM2942.28 333.10h2.4v2.4h-2.4zM2963.32 333.10h2.4v2.4h-2.4zM2984.35 333.10h2.4v2.4h-2.4zM3005.38 333.10h2.4v2.4h-2.4zM3026.41 333.10h2.4v2.4h-2.4zM3047.44 333.10h2.4v2.4h-2.4zM3068.48 333.10h2.4v2.4h-2.4zM3089.51 333.10h2.4v2.4h-2.4zM3110.54 333.10h2.4v2.4h-2.4zM3131.57 333.10h2.4v2.4h-2.4zM3152.60 333.10h2.4v2.4h-2.4zM3173.64 333.10h2.4v2.4h-2.4zM3194.67 333.10h2.4v2.4h-2.4zM2185.13 385.65h2.4v2.4h-2.4zM2206.16 385.65h2.4v2.4h-2.4zM2227.20 385.65h2.4v2.4h-2.4zM2248.23 385.65h2.4v2.4h-2.4zM2269.26 385.65h2.4v2.4h-2.4zM2290.29 385.65h2.4v2.4h-2.4zM2311.32 385.65h2.4v2.4h-2.4zM2332.36 385.65h2.4v2.4h-2.4zM2353.39 385.65h2.4v2.4h-2.4zM2374.42 385.65h2.4v2.4h-2.4zM2395.45 385.65h2.4v2.4h-2.4zM2416.48 385.65h2.4v2.4h-2.4zM2437.52 385.65h2.4v2.4h-2.4zM2458.55 385.65h2.4v2.4h-2.4zM2479.58 385.65h2.4v2.4h-2.4zM2500.61 385.65h2.4v2.4h-2.4zM2521.64 385.65h2.4v2.4h-2.4zM2542.68 385.65h2.4v2.4h-2.4zM2563.71 385.65h2.4v2.4h-2.4zM2584.74 385.65h2.4v2.4h-2.4zM2605.77 385.65h2.4v2.4h-2.4zM2626.80 385.65h2.4v2.4h-2.4zM2647.84 385.65h2.4v2.4h-2.4zM2668.87 385.65h2.4v2.4h-2.4zM2689.90 385.65h2.4v2.4h-2.4zM2710.93 385.65h2.4v2.4h-2.4zM2731.96 385.65h2.4v2.4h-2.4zM2753.00 385.65h2.4v2.4h-2.4zM2774.03 385.65h2.4v2.4h-2.4zM2795.06 385.65h2.4v2.4h-2.4zM2816.09 385.65h2.4v2.4h-2.4zM2837.12 385.65h2.4v2.4h-2.4zM2858.16 385.65h2.4v2.4h-2.4zM2879.19 385.65h2.4v2.4h-2.4zM2900.22 385.65h2.4v2.4h-2.4zM2921.25 385.65h2.4v2.4h-2.4zM2942.28 385.65h2.4v2.4h-2.4zM2963.32 385.65h2.4v2.4h-2.4zM2984.35 385.65h2.4v2.4h-2.4zM3005.38 385.65h2.4v2.4h-2.4zM3026.41 385.65h2.4v2.4h-2.4zM3047.44 385.65h2.4v2.4h-2.4zM3068.48 385.65h2.4v2.4h-2.4zM3089.51 385.65h2.4v2.4h-2.4zM3110.54 385.65h2.4v2.4h-2.4zM3131.57 385.65h2.4v2.4h-2.4zM3152.60 385.65h2.4v2.4h-2.4zM3173.64 385.65h2.4v2.4h-2.4zM3194.67 385.65h2.4v2.4h-2.4zM2185.13 490.75h2.4v2.4h-2.4zM2206.16 490.75h2.4v2.4h-2.4zM2227.20 490.75h2.4v2.4h-2.4zM2248.23 490.75h2.4v2.4h-2.4zM2269.26 490.75h2.4v2.4h-2.4zM2290.29 490.75h2.4v2.4h-2.4zM2311.32 490.75h2.4v2.4h-2.4zM2332.36 490.75h2.4v2.4h-2.4zM2353.39 490.75h2.4v2.4h-2.4zM2374.42 490.75h2.4v2.4h-2.4zM2395.45 490.75h2.4v2.4h-2.4zM2416.48 490.75h2.4v2.4h-2.4zM2437.52 490.75h2.4v2.4h-2.4zM2458.55 490.75h2.4v2.4h-2.4zM2479.58 490.75h2.4v2.4h-2.4zM2500.61 490.75h2.4v2.4h-2.4zM2521.64 490.75h2.4v2.4h-2.4zM2542.68 490.75h2.4v2.4h-2.4zM2563.71 490.75h2.4v2.4h-2.4zM2584.74 490.75h2.4v2.4h-2.4zM2605.77 490.75h2.4v2.4h-2.4zM2626.80 490.75h2.4v2.4h-2.4zM2647.84 490.75h2.4v2.4h-2.4zM2668.87 490.75h2.4v2.4h-2.4zM2689.90 490.75h2.4v2.4h-2.4zM2710.93 490.75h2.4v2.4h-2.4zM2731.96 490.75h2.4v2.4h-2.4zM2753.00 490.75h2.4v2.4h-2.4zM2774.03 490.75h2.4v2.4h-2.4zM2795.06 490.75h2.4v2.4h-2.4zM2816.09 490.75h2.4v2.4h-2.4zM2837.12 490.75h2.4v2.4h-2.4zM2858.16 490.75h2.4v2.4h-2.4zM2879.19 490.75h2.4v2.4h-2.4zM2900.22 490.75h2.4v2.4h-2.4zM2921.25 490.75h2.4v2.4h-2.4zM2942.28 490.75h2.4v2.4h-2.4zM2963.32 490.75h2.4v2.4h-2.4zM2984.35 490.75h2.4v2.4h-2.4zM3005.38 490.75h2.4v2.4h-2.4zM3026.41 490.75h2.4v2.4h-2.4zM3047.44 490.75h2.4v2.4h-2.4zM3068.48 490.75h2.4v2.4h-2.4zM3089.51 490.75h2.4v2.4h-2.4zM3110.54 490.75h2.4v2.4h-2.4zM3131.57 490.75h2.4v2.4h-2.4zM3152.60 490.75h2.4v2.4h-2.4zM3173.64 490.75h2.4v2.4h-2.4zM3194.67 490.75h2.4v2.4h-2.4zM2185.13 543.30h2.4v2.4h-2.4zM2206.16 543.30h2.4v2.4h-2.4zM2227.20 543.30h2.4v2.4h-2.4zM2248.23 543.30h2.4v2.4h-2.4zM2269.26 543.30h2.4v2.4h-2.4zM2290.29 543.30h2.4v2.4h-2.4zM2311.32 543.30h2.4v2.4h-2.4zM2332.36 543.30h2.4v2.4h-2.4zM2353.39 543.30h2.4v2.4h-2.4zM2374.42 543.30h2.4v2.4h-2.4zM2395.45 543.30h2.4v2.4h-2.4zM2416.48 543.30h2.4v2.4h-2.4zM2437.52 543.30h2.4v2.4h-2.4zM2458.55 543.30h2.4v2.4h-2.4zM2479.58 543.30h2.4v2.4h-2.4zM2500.61 543.30h2.4v2.4h-2.4zM2521.64 543.30h2.4v2.4h-2.4zM2542.68 543.30h2.4v2.4h-2.4zM2563.71 543.30h2.4v2.4h-2.4zM2584.74 543.30h2.4v2.4h-2.4zM2605.77 543.30h2.4v2.4h-2.4zM2626.80 543.30h2.4v2.4h-2.4zM2647.84 543.30h2.4v2.4h-2.4zM2668.87 543.30h2.4v2.4h-2.4zM2689.90 543.30h2.4v2.4h-2.4zM2710.93 543.30h2.4v2.4h-2.4zM2731.96 543.30h2.4v2.4h-2.4zM2753.00 543.30h2.4v2.4h-2.4zM2774.03 543.30h2.4v2.4h-2.4zM2795.06 543.30h2.4v2.4h-2.4zM2816.09 543.30h2.4v2.4h-2.4zM2837.12 543.30h2.4v2.4h-2.4zM2858.16 543.30h2.4v2.4h-2.4zM2879.19 543.30h2.4v2.4h-2.4zM2900.22 543.30h2.4v2.4h-2.4zM2921.25 543.30h2.4v2.4h-2.4zM2942.28 543.30h2.4v2.4h-2.4zM2963.32 543.30h2.4v2.4h-2.4zM2984.35 543.30h2.4v2.4h-2.4zM3005.38 543.30h2.4v2.4h-2.4zM3026.41 543.30h2.4v2.4h-2.4zM3047.44 543.30h2.4v2.4h-2.4zM3068.48 543.30h2.4v2.4h-2.4zM3089.51 543.30h2.4v2.4h-2.4zM3110.54 543.30h2.4v2.4h-2.4zM3131.57 543.30h2.4v2.4h-2.4zM3152.60 543.30h2.4v2.4h-2.4zM3173.64 543.30h2.4v2.4h-2.4zM3194.67 543.30h2.4v2.4h-2.4zM2185.13 595.85h2.4v2.4h-2.4zM2206.16 595.85h2.4v2.4h-2.4zM2227.20 595.85h2.4v2.4h-2.4zM2248.23 595.85h2.4v2.4h-2.4zM2269.26 595.85h2.4v2.4h-2.4zM2290.29 595.85h2.4v2.4h-2.4zM2311.32 595.85h2.4v2.4h-2.4zM2332.36 595.85h2.4v2.4h-2.4zM2353.39 595.85h2.4v2.4h-2.4zM2374.42 595.85h2.4v2.4h-2.4zM2395.45 595.85h2.4v2.4h-2.4zM2416.48 595.85h2.4v2.4h-2.4zM2437.52 595.85h2.4v2.4h-2.4zM2458.55 595.85h2.4v2.4h-2.4zM2479.58 595.85h2.4v2.4h-2.4zM2500.61 595.85h2.4v2.4h-2.4zM2521.64 595.85h2.4v2.4h-2.4zM2542.68 595.85h2.4v2.4h-2.4zM2563.71 595.85h2.4v2.4h-2.4zM2584.74 595.85h2.4v2.4h-2.4zM2605.77 595.85h2.4v2.4h-2.4zM2626.80 595.85h2.4v2.4h-2.4zM2647.84 595.85h2.4v2.4h-2.4zM2668.87 595.85h2.4v2.4h-2.4zM2689.90 595.85h2.4v2.4h-2.4zM2710.93 595.85h2.4v2.4h-2.4zM2731.96 595.85h2.4v2.4h-2.4zM2753.00 595.85h2.4v2.4h-2.4zM2774.03 595.85h2.4v2.4h-2.4zM2795.06 595.85h2.4v2.4h-2.4zM2816.09 595.85h2.4v2.4h-2.4zM2837.12 595.85h2.4v2.4h-2.4zM2858.16 595.85h2.4v2.4h-2.4zM2879.19 595.85h2.4v2.4h-2.4zM2900.22 595.85h2.4v2.4h-2.4zM2921.25 595.85h2.4v2.4h-2.4zM2942.28 595.85h2.4v2.4h-2.4zM2963.32 595.85h2.4v2.4h-2.4zM2984.35 595.85h2.4v2.4h-2.4zM3005.38 595.85h2.4v2.4h-2.4zM3026.41 595.85h2.4v2.4h-2.4zM3047.44 595.85h2.4v2.4h-2.4zM3068.48 595.85h2.4v2.4h-2.4zM3089.51 595.85h2.4v2.4h-2.4zM3110.54 595.85h2.4v2.4h-2.4zM3131.57 595.85h2.4v2.4h-2.4zM3152.60 595.85h2.4v2.4h-2.4zM3173.64 595.85h2.4v2.4h-2.4zM3194.67 595.85h2.4v2.4h-2.4zM2185.13 648.40h2.4v2.4h-2.4zM2206.16 648.40h2.4v2.4h-2.4zM2227.20 648.40h2.4v2.4h-2.4zM2248.23 648.40h2.4v2.4h-2.4zM2269.26 648.40h2.4v2.4h-2.4zM2290.29 648.40h2.4v2.4h-2.4zM2311.32 648.40h2.4v2.4h-2.4zM2332.36 648.40h2.4v2.4h-2.4zM2353.39 648.40h2.4v2.4h-2.4zM2374.42 648.40h2.4v2.4h-2.4zM2395.45 648.40h2.4v2.4h-2.4zM2416.48 648.40h2.4v2.4h-2.4zM2437.52 648.40h2.4v2.4h-2.4zM2458.55 648.40h2.4v2.4h-2.4zM2479.58 648.40h2.4v2.4h-2.4zM2500.61 648.40h2.4v2.4h-2.4zM2521.64 648.40h2.4v2.4h-2.4zM2542.68 648.40h2.4v2.4h-2.4zM2563.71 648.40h2.4v2.4h-2.4zM2584.74 648.40h2.4v2.4h-2.4zM2605.77 648.40h2.4v2.4h-2.4zM2626.80 648.40h2.4v2.4h-2.4zM2647.84 648.40h2.4v2.4h-2.4zM2668.87 648.40h2.4v2.4h-2.4zM2689.90 648.40h2.4v2.4h-2.4zM2710.93 648.40h2.4v2.4h-2.4zM2731.96 648.40h2.4v2.4h-2.4zM2753.00 648.40h2.4v2.4h-2.4zM2774.03 648.40h2.4v2.4h-2.4zM2795.06 648.40h2.4v2.4h-2.4zM2816.09 648.40h2.4v2.4h-2.4zM2837.12 648.40h2.4v2.4h-2.4zM2858.16 648.40h2.4v2.4h-2.4zM2879.19 648.40h2.4v2.4h-2.4zM2900.22 648.40h2.4v2.4h-2.4zM2921.25 648.40h2.4v2.4h-2.4zM2942.28 648.40h2.4v2.4h-2.4zM2963.32 648.40h2.4v2.4h-2.4zM2984.35 648.40h2.4v2.4h-2.4zM3005.38 648.40h2.4v2.4h-2.4zM3026.41 648.40h2.4v2.4h-2.4zM3047.44 648.40h2.4v2.4h-2.4zM3068.48 648.40h2.4v2.4h-2.4zM3089.51 648.40h2.4v2.4h-2.4zM3110.54 648.40h2.4v2.4h-2.4zM3131.57 648.40h2.4v2.4h-2.4zM3152.60 648.40h2.4v2.4h-2.4zM3173.64 648.40h2.4v2.4h-2.4zM3194.67 648.40h2.4v2.4h-2.4zM2269.26 185.96h2.4v2.4h-2.4zM2269.26 196.47h2.4v2.4h-2.4zM2269.26 206.98h2.4v2.4h-2.4zM2269.26 217.49h2.4v2.4h-2.4zM2269.26 238.51h2.4v2.4h-2.4zM2269.26 249.02h2.4v2.4h-2.4zM2269.26 259.53h2.4v2.4h-2.4zM2269.26 270.04h2.4v2.4h-2.4zM2269.26 291.06h2.4v2.4h-2.4zM2269.26 301.57h2.4v2.4h-2.4zM2269.26 312.08h2.4v2.4h-2.4zM2269.26 322.59h2.4v2.4h-2.4zM2269.26 343.61h2.4v2.4h-2.4zM2269.26 354.12h2.4v2.4h-2.4zM2269.26 364.63h2.4v2.4h-2.4zM2269.26 375.14h2.4v2.4h-2.4zM2269.26 396.16h2.4v2.4h-2.4zM2269.26 406.67h2.4v2.4h-2.4zM2269.26 417.18h2.4v2.4h-2.4zM2269.26 427.69h2.4v2.4h-2.4zM2269.26 448.71h2.4v2.4h-2.4zM2269.26 459.22h2.4v2.4h-2.4zM2269.26 469.73h2.4v2.4h-2.4zM2269.26 480.24h2.4v2.4h-2.4zM2269.26 501.26h2.4v2.4h-2.4zM2269.26 511.77h2.4v2.4h-2.4zM2269.26 522.28h2.4v2.4h-2.4zM2269.26 532.79h2.4v2.4h-2.4zM2269.26 553.81h2.4v2.4h-2.4zM2269.26 564.32h2.4v2.4h-2.4zM2269.26 574.83h2.4v2.4h-2.4zM2269.26 585.34h2.4v2.4h-2.4zM2269.26 606.36h2.4v2.4h-2.4zM2269.26 616.87h2.4v2.4h-2.4zM2269.26 627.38h2.4v2.4h-2.4zM2269.26 637.89h2.4v2.4h-2.4zM2269.26 658.91h2.4v2.4h-2.4zM2269.26 669.42h2.4v2.4h-2.4zM2269.26 679.93h2.4v2.4h-2.4zM2269.26 690.44h2.4v2.4h-2.4zM2374.42 185.96h2.4v2.4h-2.4zM2374.42 196.47h2.4v2.4h-2.4zM2374.42 206.98h2.4v2.4h-2.4zM2374.42 217.49h2.4v2.4h-2.4zM2374.42 238.51h2.4v2.4h-2.4zM2374.42 249.02h2.4v2.4h-2.4zM2374.42 259.53h2.4v2.4h-2.4zM2374.42 270.04h2.4v2.4h-2.4zM2374.42 291.06h2.4v2.4h-2.4zM2374.42 301.57h2.4v2.4h-2.4zM2374.42 312.08h2.4v2.4h-2.4zM2374.42 322.59h2.4v2.4h-2.4zM2374.42 343.61h2.4v2.4h-2.4zM2374.42 354.12h2.4v2.4h-2.4zM2374.42 364.63h2.4v2.4h-2.4zM2374.42 375.14h2.4v2.4h-2.4zM2374.42 396.16h2.4v2.4h-2.4zM2374.42 406.67h2.4v2.4h-2.4zM2374.42 417.18h2.4v2.4h-2.4zM2374.42 427.69h2.4v2.4h-2.4zM2374.42 448.71h2.4v2.4h-2.4zM2374.42 459.22h2.4v2.4h-2.4zM2374.42 469.73h2.4v2.4h-2.4zM2374.42 480.24h2.4v2.4h-2.4zM2374.42 501.26h2.4v2.4h-2.4zM2374.42 511.77h2.4v2.4h-2.4zM2374.42 522.28h2.4v2.4h-2.4zM2374.42 532.79h2.4v2.4h-2.4zM2374.42 553.81h2.4v2.4h-2.4zM2374.42 564.32h2.4v2.4h-2.4zM2374.42 574.83h2.4v2.4h-2.4zM2374.42 585.34h2.4v2.4h-2.4zM2374.42 606.36h2.4v2.4h-2.4zM2374.42 616.87h2.4v2.4h-2.4zM2374.42 627.38h2.4v2.4h-2.4zM2374.42 637.89h2.4v2.4h-2.4zM2374.42 658.91h2.4v2.4h-2.4zM2374.42 669.42h2.4v2.4h-2.4zM2374.42 679.93h2.4v2.4h-2.4zM2374.42 690.44h2.4v2.4h-2.4zM2479.58 185.96h2.4v2.4h-2.4zM2479.58 196.47h2.4v2.4h-2.4zM2479.58 206.98h2.4v2.4h-2.4zM2479.58 217.49h2.4v2.4h-2.4zM2479.58 238.51h2.4v2.4h-2.4zM2479.58 249.02h2.4v2.4h-2.4zM2479.58 259.53h2.4v2.4h-2.4zM2479.58 270.04h2.4v2.4h-2.4zM2479.58 291.06h2.4v2.4h-2.4zM2479.58 301.57h2.4v2.4h-2.4zM2479.58 312.08h2.4v2.4h-2.4zM2479.58 322.59h2.4v2.4h-2.4zM2479.58 343.61h2.4v2.4h-2.4zM2479.58 354.12h2.4v2.4h-2.4zM2479.58 364.63h2.4v2.4h-2.4zM2479.58 375.14h2.4v2.4h-2.4zM2479.58 396.16h2.4v2.4h-2.4zM2479.58 406.67h2.4v2.4h-2.4zM2479.58 417.18h2.4v2.4h-2.4zM2479.58 427.69h2.4v2.4h-2.4zM2479.58 448.71h2.4v2.4h-2.4zM2479.58 459.22h2.4v2.4h-2.4zM2479.58 469.73h2.4v2.4h-2.4zM2479.58 480.24h2.4v2.4h-2.4zM2479.58 501.26h2.4v2.4h-2.4zM2479.58 511.77h2.4v2.4h-2.4zM2479.58 522.28h2.4v2.4h-2.4zM2479.58 532.79h2.4v2.4h-2.4zM2479.58 553.81h2.4v2.4h-2.4zM2479.58 564.32h2.4v2.4h-2.4zM2479.58 574.83h2.4v2.4h-2.4zM2479.58 585.34h2.4v2.4h-2.4zM2479.58 606.36h2.4v2.4h-2.4zM2479.58 616.87h2.4v2.4h-2.4zM2479.58 627.38h2.4v2.4h-2.4zM2479.58 637.89h2.4v2.4h-2.4zM2479.58 658.91h2.4v2.4h-2.4zM2479.58 669.42h2.4v2.4h-2.4zM2479.58 679.93h2.4v2.4h-2.4zM2479.58 690.44h2.4v2.4h-2.4zM2584.74 185.96h2.4v2.4h-2.4zM2584.74 196.47h2.4v2.4h-2.4zM2584.74 206.98h2.4v2.4h-2.4zM2584.74 217.49h2.4v2.4h-2.4zM2584.74 238.51h2.4v2.4h-2.4zM2584.74 249.02h2.4v2.4h-2.4zM2584.74 259.53h2.4v2.4h-2.4zM2584.74 270.04h2.4v2.4h-2.4zM2584.74 291.06h2.4v2.4h-2.4zM2584.74 301.57h2.4v2.4h-2.4zM2584.74 312.08h2.4v2.4h-2.4zM2584.74 322.59h2.4v2.4h-2.4zM2584.74 343.61h2.4v2.4h-2.4zM2584.74 354.12h2.4v2.4h-2.4zM2584.74 364.63h2.4v2.4h-2.4zM2584.74 375.14h2.4v2.4h-2.4zM2584.74 396.16h2.4v2.4h-2.4zM2584.74 406.67h2.4v2.4h-2.4zM2584.74 417.18h2.4v2.4h-2.4zM2584.74 427.69h2.4v2.4h-2.4zM2584.74 448.71h2.4v2.4h-2.4zM2584.74 459.22h2.4v2.4h-2.4zM2584.74 469.73h2.4v2.4h-2.4zM2584.74 480.24h2.4v2.4h-2.4zM2584.74 501.26h2.4v2.4h-2.4zM2584.74 511.77h2.4v2.4h-2.4zM2584.74 522.28h2.4v2.4h-2.4zM2584.74 532.79h2.4v2.4h-2.4zM2584.74 553.81h2.4v2.4h-2.4zM2584.74 564.32h2.4v2.4h-2.4zM2584.74 574.83h2.4v2.4h-2.4zM2584.74 585.34h2.4v2.4h-2.4zM2584.74 606.36h2.4v2.4h-2.4zM2584.74 616.87h2.4v2.4h-2.4zM2584.74 627.38h2.4v2.4h-2.4zM2584.74 637.89h2.4v2.4h-2.4zM2584.74 658.91h2.4v2.4h-2.4zM2584.74 669.42h2.4v2.4h-2.4zM2584.74 679.93h2.4v2.4h-2.4zM2584.74 690.44h2.4v2.4h-2.4zM2795.06 185.96h2.4v2.4h-2.4zM2795.06 196.47h2.4v2.4h-2.4zM2795.06 206.98h2.4v2.4h-2.4zM2795.06 217.49h2.4v2.4h-2.4zM2795.06 238.51h2.4v2.4h-2.4zM2795.06 249.02h2.4v2.4h-2.4zM2795.06 259.53h2.4v2.4h-2.4zM2795.06 270.04h2.4v2.4h-2.4zM2795.06 291.06h2.4v2.4h-2.4zM2795.06 301.57h2.4v2.4h-2.4zM2795.06 312.08h2.4v2.4h-2.4zM2795.06 322.59h2.4v2.4h-2.4zM2795.06 343.61h2.4v2.4h-2.4zM2795.06 354.12h2.4v2.4h-2.4zM2795.06 364.63h2.4v2.4h-2.4zM2795.06 375.14h2.4v2.4h-2.4zM2795.06 396.16h2.4v2.4h-2.4zM2795.06 406.67h2.4v2.4h-2.4zM2795.06 417.18h2.4v2.4h-2.4zM2795.06 427.69h2.4v2.4h-2.4zM2795.06 448.71h2.4v2.4h-2.4zM2795.06 459.22h2.4v2.4h-2.4zM2795.06 469.73h2.4v2.4h-2.4zM2795.06 480.24h2.4v2.4h-2.4zM2795.06 501.26h2.4v2.4h-2.4zM2795.06 511.77h2.4v2.4h-2.4zM2795.06 522.28h2.4v2.4h-2.4zM2795.06 532.79h2.4v2.4h-2.4zM2795.06 553.81h2.4v2.4h-2.4zM2795.06 564.32h2.4v2.4h-2.4zM2795.06 574.83h2.4v2.4h-2.4zM2795.06 585.34h2.4v2.4h-2.4zM2795.06 606.36h2.4v2.4h-2.4zM2795.06 616.87h2.4v2.4h-2.4zM2795.06 627.38h2.4v2.4h-2.4zM2795.06 637.89h2.4v2.4h-2.4zM2795.06 658.91h2.4v2.4h-2.4zM2795.06 669.42h2.4v2.4h-2.4zM2795.06 679.93h2.4v2.4h-2.4zM2795.06 690.44h2.4v2.4h-2.4zM2900.22 185.96h2.4v2.4h-2.4zM2900.22 196.47h2.4v2.4h-2.4zM2900.22 206.98h2.4v2.4h-2.4zM2900.22 217.49h2.4v2.4h-2.4zM2900.22 238.51h2.4v2.4h-2.4zM2900.22 249.02h2.4v2.4h-2.4zM2900.22 259.53h2.4v2.4h-2.4zM2900.22 270.04h2.4v2.4h-2.4zM2900.22 291.06h2.4v2.4h-2.4zM2900.22 301.57h2.4v2.4h-2.4zM2900.22 312.08h2.4v2.4h-2.4zM2900.22 322.59h2.4v2.4h-2.4zM2900.22 343.61h2.4v2.4h-2.4zM2900.22 354.12h2.4v2.4h-2.4zM2900.22 364.63h2.4v2.4h-2.4zM2900.22 375.14h2.4v2.4h-2.4zM2900.22 396.16h2.4v2.4h-2.4zM2900.22 406.67h2.4v2.4h-2.4zM2900.22 417.18h2.4v2.4h-2.4zM2900.22 427.69h2.4v2.4h-2.4zM2900.22 448.71h2.4v2.4h-2.4zM2900.22 459.22h2.4v2.4h-2.4zM2900.22 469.73h2.4v2.4h-2.4zM2900.22 480.24h2.4v2.4h-2.4zM2900.22 501.26h2.4v2.4h-2.4zM2900.22 511.77h2.4v2.4h-2.4zM2900.22 522.28h2.4v2.4h-2.4zM2900.22 532.79h2.4v2.4h-2.4zM2900.22 553.81h2.4v2.4h-2.4zM2900.22 564.32h2.4v2.4h-2.4zM2900.22 574.83h2.4v2.4h-2.4zM2900.22 585.34h2.4v2.4h-2.4zM2900.22 606.36h2.4v2.4h-2.4zM2900.22 616.87h2.4v2.4h-2.4zM2900.22 627.38h2.4v2.4h-2.4zM2900.22 637.89h2.4v2.4h-2.4zM2900.22 658.91h2.4v2.4h-2.4zM2900.22 669.42h2.4v2.4h-2.4zM2900.22 679.93h2.4v2.4h-2.4zM2900.22 690.44h2.4v2.4h-2.4zM3005.38 185.96h2.4v2.4h-2.4zM3005.38 196.47h2.4v2.4h-2.4zM3005.38 206.98h2.4v2.4h-2.4zM3005.38 217.49h2.4v2.4h-2.4zM3005.38 238.51h2.4v2.4h-2.4zM3005.38 249.02h2.4v2.4h-2.4zM3005.38 259.53h2.4v2.4h-2.4zM3005.38 270.04h2.4v2.4h-2.4zM3005.38 291.06h2.4v2.4h-2.4zM3005.38 301.57h2.4v2.4h-2.4zM3005.38 312.08h2.4v2.4h-2.4zM3005.38 322.59h2.4v2.4h-2.4zM3005.38 343.61h2.4v2.4h-2.4zM3005.38 354.12h2.4v2.4h-2.4zM3005.38 364.63h2.4v2.4h-2.4zM3005.38 375.14h2.4v2.4h-2.4zM3005.38 396.16h2.4v2.4h-2.4zM3005.38 406.67h2.4v2.4h-2.4zM3005.38 417.18h2.4v2.4h-2.4zM3005.38 427.69h2.4v2.4h-2.4zM3005.38 448.71h2.4v2.4h-2.4zM3005.38 459.22h2.4v2.4h-2.4zM3005.38 469.73h2.4v2.4h-2.4zM3005.38 480.24h2.4v2.4h-2.4zM3005.38 501.26h2.4v2.4h-2.4zM3005.38 511.77h2.4v2.4h-2.4zM3005.38 522.28h2.4v2.4h-2.4zM3005.38 532.79h2.4v2.4h-2.4zM3005.38 553.81h2.4v2.4h-2.4zM3005.38 564.32h2.4v2.4h-2.4zM3005.38 574.83h2.4v2.4h-2.4zM3005.38 585.34h2.4v2.4h-2.4zM3005.38 606.36h2.4v2.4h-2.4zM3005.38 616.87h2.4v2.4h-2.4zM3005.38 627.38h2.4v2.4h-2.4zM3005.38 637.89h2.4v2.4h-2.4zM3005.38 658.91h2.4v2.4h-2.4zM3005.38 669.42h2.4v2.4h-2.4zM3005.38 679.93h2.4v2.4h-2.4zM3005.38 690.44h2.4v2.4h-2.4zM3110.54 185.96h2.4v2.4h-2.4zM3110.54 196.47h2.4v2.4h-2.4zM3110.54 206.98h2.4v2.4h-2.4zM3110.54 217.49h2.4v2.4h-2.4zM3110.54 238.51h2.4v2.4h-2.4zM3110.54 249.02h2.4v2.4h-2.4zM3110.54 259.53h2.4v2.4h-2.4zM3110.54 270.04h2.4v2.4h-2.4zM3110.54 291.06h2.4v2.4h-2.4zM3110.54 301.57h2.4v2.4h-2.4zM3110.54 312.08h2.4v2.4h-2.4zM3110.54 322.59h2.4v2.4h-2.4zM3110.54 343.61h2.4v2.4h-2.4zM3110.54 354.12h2.4v2.4h-2.4zM3110.54 364.63h2.4v2.4h-2.4zM3110.54 375.14h2.4v2.4h-2.4zM3110.54 396.16h2.4v2.4h-2.4zM3110.54 406.67h2.4v2.4h-2.4zM3110.54 417.18h2.4v2.4h-2.4zM3110.54 427.69h2.4v2.4h-2.4zM3110.54 448.71h2.4v2.4h-2.4zM3110.54 459.22h2.4v2.4h-2.4zM3110.54 469.73h2.4v2.4h-2.4zM3110.54 480.24h2.4v2.4h-2.4zM3110.54 501.26h2.4v2.4h-2.4zM3110.54 511.77h2.4v2.4h-2.4zM3110.54 522.28h2.4v2.4h-2.4zM3110.54 532.79h2.4v2.4h-2.4zM3110.54 553.81h2.4v2.4h-2.4zM3110.54 564.32h2.4v2.4h-2.4zM3110.54 574.83h2.4v2.4h-2.4zM3110.54 585.34h2.4v2.4h-2.4zM3110.54 606.36h2.4v2.4h-2.4zM3110.54 616.87h2.4v2.4h-2.4zM3110.54 627.38h2.4v2.4h-2.4zM3110.54 637.89h2.4v2.4h-2.4zM3110.54 658.91h2.4v2.4h-2.4zM3110.54 669.42h2.4v2.4h-2.4zM3110.54 679.93h2.4v2.4h-2.4zM3110.54 690.44h2.4v2.4h-2.4z" fill="#3a372a" stroke="none" stroke-width="1" />
<line x1="2164.00" y1="438.70" x2="3218.00" y2="438.70" stroke="#4a4636" stroke-width="1" />
<line x1="2690.60" y1="175.50" x2="2690.60" y2="703.00" stroke="#4a4636" stroke-width="1" />
<path d="M2185.83 436.20v5.00M2206.86 436.20v5.00M2227.90 436.20v5.00M2248.93 436.20v5.00M2269.96 434.70v8.00M2290.99 436.20v5.00M2312.02 436.20v5.00M2333.06 436.20v5.00M2354.09 436.20v5.00M2375.12 434.70v8.00M2396.15 436.20v5.00M2417.18 436.20v5.00M2438.22 436.20v5.00M2459.25 436.20v5.00M2480.28 434.70v8.00M2501.31 436.20v5.00M2522.34 436.20v5.00M2543.38 436.20v5.00M2564.41 436.20v5.00M2585.44 434.70v8.00M2606.47 436.20v5.00M2627.50 436.20v5.00M2648.54 436.20v5.00M2669.57 436.20v5.00M2690.60 434.70v8.00M2711.63 436.20v5.00M2732.66 436.20v5.00M2753.70 436.20v5.00M2774.73 436.20v5.00M2795.76 434.70v8.00M2816.79 436.20v5.00M2837.82 436.20v5.00M2858.86 436.20v5.00M2879.89 436.20v5.00M2900.92 434.70v8.00M2921.95 436.20v5.00M2942.98 436.20v5.00M2964.02 436.20v5.00M2985.05 436.20v5.00M3006.08 434.70v8.00M3027.11 436.20v5.00M3048.14 436.20v5.00M3069.18 436.20v5.00M3090.21 436.20v5.00M3111.24 434.70v8.00M3132.27 436.20v5.00M3153.30 436.20v5.00M3174.34 436.20v5.00M3195.37 436.20v5.00M2688.10 186.46h5.00M2688.10 196.97h5.00M2688.10 207.48h5.00M2688.10 217.99h5.00M2686.60 228.50h8.00M2688.10 239.01h5.00M2688.10 249.52h5.00M2688.10 260.03h5.00M2688.10 270.54h5.00M2686.60 281.05h8.00M2688.10 291.56h5.00M2688.10 302.07h5.00M2688.10 312.58h5.00M2688.10 323.09h5.00M2686.60 333.60h8.00M2688.10 344.11h5.00M2688.10 354.62h5.00M2688.10 365.13h5.00M2688.10 375.64h5.00M2686.60 386.15h8.00M2688.10 396.66h5.00M2688.10 407.17h5.00M2688.10 417.68h5.00M2688.10 428.19h5.00M2686.60 438.70h8.00M2688.10 449.21h5.00M2688.10 459.72h5.00M2688.10 470.23h5.00M2688.10 480.74h5.00M2686.60 491.25h8.00M2688.10 501.76h5.00M2688.10 512.27h5.00M2688.10 522.78h5.00M2688.10 533.29h5.00M2686.60 543.80h8.00M2688.10 554.31h5.00M2688.10 564.82h5.00M2688.10 575.33h5.00M2688.10 585.84h5.00M2686.60 596.35h8.00M2688.10 606.86h5.00M2688.10 617.37h5.00M2688.10 627.88h5.00M2688.10 638.39h5.00M2686.60 648.90h8.00M2688.10 659.41h5.00M2688.10 669.92h5.00M2688.10 680.43h5.00M2688.10 690.94h5.00" fill="none" stroke="#5c5741" stroke-width="1" />
<path d="M2185.83 175.50v3M2185.83 703.00v-3M2206.86 175.50v3M2206.86 703.00v-3M2227.90 175.50v3M2227.90 703.00v-3M2248.93 175.50v3M2248.93 703.00v-3M2269.96 175.50v3M2269.96 703.00v-3M2290.99 175.50v3M2290.99 703.00v-3M2312.02 175.50v3M2312.02 703.00v-3M2333.06 175.50v3M2333.06 703.00v-3M2354.09 175.50v3M2354.09 703.00v-3M2375.12 175.50v3M2375.12 703.00v-3M2396.15 175.50v3M2396.15 703.00v-3M2417.18 175.50v3M2417.18 703.00v-3M2438.22 175.50v3M2438.22 703.00v-3M2459.25 175.50v3M2459.25 703.00v-3M2480.28 175.50v3M2480.28 703.00v-3M2501.31 175.50v3M2501.31 703.00v-3M2522.34 175.50v3M2522.34 703.00v-3M2543.38 175.50v3M2543.38 703.00v-3M2564.41 175.50v3M2564.41 703.00v-3M2585.44 175.50v3M2585.44 703.00v-3M2606.47 175.50v3M2606.47 703.00v-3M2627.50 175.50v3M2627.50 703.00v-3M2648.54 175.50v3M2648.54 703.00v-3M2669.57 175.50v3M2669.57 703.00v-3M2690.60 175.50v3M2690.60 703.00v-3M2711.63 175.50v3M2711.63 703.00v-3M2732.66 175.50v3M2732.66 703.00v-3M2753.70 175.50v3M2753.70 703.00v-3M2774.73 175.50v3M2774.73 703.00v-3M2795.76 175.50v3M2795.76 703.00v-3M2816.79 175.50v3M2816.79 703.00v-3M2837.82 175.50v3M2837.82 703.00v-3M2858.86 175.50v3M2858.86 703.00v-3M2879.89 175.50v3M2879.89 703.00v-3M2900.92 175.50v3M2900.92 703.00v-3M2921.95 175.50v3M2921.95 703.00v-3M2942.98 175.50v3M2942.98 703.00v-3M2964.02 175.50v3M2964.02 703.00v-3M2985.05 175.50v3M2985.05 703.00v-3M3006.08 175.50v3M3006.08 703.00v-3M3027.11 175.50v3M3027.11 703.00v-3M3048.14 175.50v3M3048.14 703.00v-3M3069.18 175.50v3M3069.18 703.00v-3M3090.21 175.50v3M3090.21 703.00v-3M3111.24 175.50v3M3111.24 703.00v-3M3132.27 175.50v3M3132.27 703.00v-3M3153.30 175.50v3M3153.30 703.00v-3M3174.34 175.50v3M3174.34 703.00v-3M3195.37 175.50v3M3195.37 703.00v-3M2164.00 186.46h3M3215.60 186.46h-3M2164.00 196.97h3M3215.60 196.97h-3M2164.00 207.48h3M3215.60 207.48h-3M2164.00 217.99h3M3215.60 217.99h-3M2164.00 228.50h3M3215.60 228.50h-3M2164.00 239.01h3M3215.60 239.01h-3M2164.00 249.52h3M3215.60 249.52h-3M2164.00 260.03h3M3215.60 260.03h-3M2164.00 270.54h3M3215.60 270.54h-3M2164.00 281.05h3M3215.60 281.05h-3M2164.00 291.56h3M3215.60 291.56h-3M2164.00 302.07h3M3215.60 302.07h-3M2164.00 312.58h3M3215.60 312.58h-3M2164.00 323.09h3M3215.60 323.09h-3M2164.00 333.60h3M3215.60 333.60h-3M2164.00 344.11h3M3215.60 344.11h-3M2164.00 354.62h3M3215.60 354.62h-3M2164.00 365.13h3M3215.60 365.13h-3M2164.00 375.64h3M3215.60 375.64h-3M2164.00 386.15h3M3215.60 386.15h-3M2164.00 396.66h3M3215.60 396.66h-3M2164.00 407.17h3M3215.60 407.17h-3M2164.00 417.68h3M3215.60 417.68h-3M2164.00 428.19h3M3215.60 428.19h-3M2164.00 438.70h3M3215.60 438.70h-3M2164.00 449.21h3M3215.60 449.21h-3M2164.00 459.72h3M3215.60 459.72h-3M2164.00 470.23h3M3215.60 470.23h-3M2164.00 480.74h3M3215.60 480.74h-3M2164.00 491.25h3M3215.60 491.25h-3M2164.00 501.76h3M3215.60 501.76h-3M2164.00 512.27h3M3215.60 512.27h-3M2164.00 522.78h3M3215.60 522.78h-3M2164.00 533.29h3M3215.60 533.29h-3M2164.00 543.80h3M3215.60 543.80h-3M2164.00 554.31h3M3215.60 554.31h-3M2164.00 564.82h3M3215.60 564.82h-3M2164.00 575.33h3M3215.60 575.33h-3M2164.00 585.84h3M3215.60 585.84h-3M2164.00 596.35h3M3215.60 596.35h-3M2164.00 606.86h3M3215.60 606.86h-3M2164.00 617.37h3M3215.60 617.37h-3M2164.00 627.88h3M3215.60 627.88h-3M2164.00 638.39h3M3215.60 638.39h-3M2164.00 648.90h3M3215.60 648.90h-3M2164.00 659.41h3M3215.60 659.41h-3M2164.00 669.92h3M3215.60 669.92h-3M2164.00 680.43h3M3215.60 680.43h-3M2164.00 690.94h3M3215.60 690.94h-3" fill="none" stroke="#4a4636" stroke-width="1" />
<rect x="2164.00" y="175.50" width="1051.60" height="527.50" rx="0" fill="none" stroke="#2f4d68" stroke-width="1.8" />
<path d="M2165.00 195.00L2171.00 189.00Q2172.00 188.00 2174.00 188.00H2181.00Q2183.00 188.00 2183.00 190.00V200.00Q2183.00 202.00 2181.00 202.00H2174.00Q2172.00 202.00 2171.00 201.00Z" fill="#f59b00" stroke="none" stroke-width="1" />
<path d="M2173.00 191.00H2180.00M2176.50 191.00V200.00" fill="none" stroke="#3a2600" stroke-width="2" />
<path d="M2146.50 199.10H2159.50L2153.00 206.60Z" fill="none" stroke="#a8b4c4" stroke-width="1.4" />
<rect x="2149.20" y="209.60" width="3.20" height="70.40" rx="0" fill="#5a6470" stroke="none" stroke-width="1" />
<text x="2146.50" y="223.29" font-size="17.955000000000005" fill="#e01010" font-weight="normal" text-anchor="start" textLength="8.5" lengthAdjust="spacingAndGlyphs" stroke="#e01010" stroke-width="0.6">2</text>
<path d="M2162.00 207.60H2158.00V226.50H2162.00" fill="none" stroke="#c01010" stroke-width="1.5" />
<text x="2146.50" y="247.89" font-size="17.38500000000001" fill="#c8c8c8" font-weight="normal" text-anchor="start" textLength="8.5" lengthAdjust="spacingAndGlyphs" stroke="#c8c8c8" stroke-width="0.6">0</text>
<path d="M2162.00 232.70H2158.00V251.00H2162.00" fill="none" stroke="#a0a0a0" stroke-width="1.5" />
<text x="2146.50" y="275.75" font-size="18.14500000000002" fill="#b08a48" font-weight="normal" text-anchor="start" textLength="8.5" lengthAdjust="spacingAndGlyphs" stroke="#b08a48" stroke-width="0.6">1</text>
<path d="M2162.00 259.90H2158.00V279.00H2162.00" fill="none" stroke="#8a7040" stroke-width="1.5" />
<path d="M2685.10 176.50H2696.10L2690.60 187.50Z" fill="#f0f0ff" stroke="none" stroke-width="1" />
<path d="M2165.00 208.60H2480.90" fill="none" stroke="#1c7a36" stroke-width="2" />
<path d="M2480.90 226.50H2889.00" fill="none" stroke="#0c44b4" stroke-width="2.2" />
<path d="M2889.00 208.60H3214.60" fill="none" stroke="#1c7a36" stroke-width="2" />
<path d="M2480.90 208.60V226.50M2889.00 208.60V226.50" fill="none" stroke="#7a7a70" stroke-width="1.2" />
<path d="M2165.00 251.00H3214.60" fill="none" stroke="#0a3078" stroke-width="2" />
<path d="M2705.60 234.20H2807.30" fill="none" stroke="#1f9a44" stroke-width="1.8" />
<path d="M2705.60 235.20h3.8v15.80h-3.8zM2711.72 235.20h3.8v15.80h-3.8zM2717.84 235.20h3.8v15.80h-3.8zM2723.96 235.20h3.8v15.80h-3.8zM2730.07 235.20h3.8v15.80h-3.8zM2736.19 235.20h3.8v15.80h-3.8zM2742.31 235.20h3.8v15.80h-3.8zM2748.43 235.20h3.8v15.80h-3.8zM2754.55 235.20h3.8v15.80h-3.8zM2760.67 235.20h3.8v15.80h-3.8zM2766.79 235.20h3.8v15.80h-3.8zM2772.91 235.20h3.8v15.80h-3.8zM2779.03 235.20h3.8v15.80h-3.8zM2785.14 235.20h3.8v15.80h-3.8zM2791.26 235.20h3.8v15.80h-3.8zM2797.38 235.20h3.8v15.80h-3.8zM2803.50 235.20h3.8v15.80h-3.8z" fill="#3c3c3a" stroke="none" stroke-width="1" />
<path d="M2165.00 279.00H2480.50M2484.00 279.00H2710.30M2717.50 279.00H2735.00M2742.30 279.00H2748.30M2761.10 279.00H2768.70M2775.80 279.00H2788.30M2800.80 279.00H2806.80M2899.30 279.00H3214.60" fill="none" stroke="#0a3078" stroke-width="2" />
<path d="M2480.50 279.00V261.40M2484.00 279.00V261.40M2710.30 279.00V261.40M2717.50 279.00V261.40M2735.00 279.00V261.40M2742.30 279.00V261.40M2748.30 279.00V261.40M2761.10 279.00V261.40M2768.70 279.00V261.40M2775.80 279.00V261.40M2788.30 279.00V261.40M2800.80 279.00V261.40M2806.80 279.00V261.40M2899.30 279.00V261.40" fill="none" stroke="#5e5e58" stroke-width="2" />
<path d="M2480.50 261.40H2484.00M2710.30 261.40H2717.50M2735.00 261.40H2742.30M2748.30 261.40H2761.10M2768.70 261.40H2775.80M2788.30 261.40H2800.80M2806.80 261.40H2899.30" fill="none" stroke="#22b04a" stroke-width="1.8" />
<line x1="2264.00" y1="426.70" x2="3214.60" y2="426.70" stroke="#7d2bd6" stroke-width="3" />
<path d="M2482.90 415.20Q2480.90 415.20 2480.90 417.20V435.20Q2480.90 437.20 2482.90 437.20" fill="none" stroke="#20c040" stroke-width="1.8" />
<path d="M2888.70 415.20Q2890.70 415.20 2890.70 417.20V435.20Q2890.70 437.20 2888.70 437.20" fill="none" stroke="#e02020" stroke-width="1.8" />
<path d="M2708.90 416.40H2796.70Q2799.70 426.30 2796.70 436.20H2708.90Q2705.90 426.30 2708.90 416.40Z" fill="#000" stroke="#0cb2b4" stroke-width="3" />
<text x="2752.80" y="431.90" font-size="16" fill="#e2e2ea" font-weight="normal" text-anchor="middle" textLength="42.0" lengthAdjust="spacingAndGlyphs" stroke="#e2e2ea" stroke-width="0.35" >45A6</text>
<path d="M2171.00 417.40H2257.90Q2261.90 418.40 2263.90 426.15Q2261.90 433.90 2257.90 434.90H2171.00Q2167.00 433.90 2165.00 426.15Q2167.00 418.40 2171.00 417.40Z" fill="#7d2bd6" stroke="none" stroke-width="1" />
<text x="2170.50" y="431.45" font-size="15.3" fill="#240848" font-weight="bold" text-anchor="start" textLength="85.9" lengthAdjust="spacingAndGlyphs" stroke="#240848" stroke-width="0.2">SPI(MISO)</text>
<path d="M2146.30 417.40H2157.30L2163.80 426.15L2157.30 434.90H2146.30Z" fill="#7d2bd6" stroke="none" stroke-width="1" />
<text x="2146.60" y="431.15" font-size="14" fill="#240848" font-weight="bold" text-anchor="start" textLength="10.5" lengthAdjust="spacingAndGlyphs" stroke="#240848" stroke-width="0.2">B1</text>
<rect x="2754.60" y="668.60" width="154.70" height="38.00" rx="6" fill="#000" stroke="#727272" stroke-width="2" />
<path d="M2760.60 706.60H2903.30" fill="none" stroke="#9a9a98" stroke-width="2.4" />
<rect x="2916.50" y="668.60" width="111.90" height="38.00" rx="6" fill="#000" stroke="#727272" stroke-width="2" />
<path d="M2922.50 706.60H3022.40" fill="none" stroke="#9a9a98" stroke-width="2.4" />
<rect x="2754.60" y="709.50" width="273.80" height="38.00" rx="6" fill="#000" stroke="#727272" stroke-width="2" />
<path d="M2760.60 747.50H3022.40" fill="none" stroke="#9a9a98" stroke-width="2.4" />
<rect x="3035.60" y="707.00" width="180.90" height="38.00" rx="0" fill="#000" stroke="none" stroke-width="1" />
<path d="M3041.60 707.00Q3035.60 707.00 3035.60 713.00V739.00Q3035.60 745.00 3041.60 745.00H3210.50Q3216.50 745.00 3216.50 739.00V713.00Q3216.50 707.00 3210.50 707.00" fill="none" stroke="#727272" stroke-width="2" />
<path d="M3041.60 745.00H3210.50" fill="none" stroke="#9a9a98" stroke-width="2.4" />
<rect x="3098.70" y="766.70" width="116.60" height="50.00" rx="6" fill="#000" stroke="#727272" stroke-width="2" />
<path d="M3104.70 816.70H3209.30" fill="none" stroke="#9a9a98" stroke-width="2.4" />
<text x="2759.30" y="684.60" font-size="17" fill="#e0e0e0" font-weight="normal" text-anchor="start" textLength="74.0" lengthAdjust="spacingAndGlyphs" stroke="#e0e0e0" stroke-width="0.37" >Z 2.00µs</text>
<rect x="2759.30" y="689.10" width="11.90" height="14.00" rx="2" fill="#f59b00" stroke="none" stroke-width="1" />
<path d="M2761.50 691.5H2769.00M2765.20 691.5V702.00" fill="none" stroke="#3a2600" stroke-width="1.8" />
<path d="M2772.00 696.5H2780.00M2777.00 693.5L2781.00 696.5L2777.00 699.5" fill="none" stroke="#f59b00" stroke-width="1.6" />
<path d="M2783.50 690.5H2795.00L2789.20 699Z" fill="#f59b00" stroke="none" stroke-width="1" />
<text x="2796.80" y="701.70" font-size="15.5" fill="#f59b00" font-weight="normal" text-anchor="start" textLength="97.0" lengthAdjust="spacingAndGlyphs" stroke="#f59b00" stroke-width="0.34" >60.0428ms</text>
<text x="2923.70" y="684.60" font-size="17" fill="#e0e0e0" font-weight="normal" text-anchor="start" textLength="75.0" lengthAdjust="spacingAndGlyphs" stroke="#e0e0e0" stroke-width="0.37" >2.50GS/s</text>
<text x="2924.00" y="701.50" font-size="17" fill="#e0e0e0" font-weight="normal" text-anchor="start" textLength="93.7" lengthAdjust="spacingAndGlyphs" stroke="#e0e0e0" stroke-width="0.37" >10M points</text>
<text x="2760.60" y="725.70" font-size="17" fill="#e0e0e0" font-weight="normal" text-anchor="start" textLength="32.0" lengthAdjust="spacingAndGlyphs" stroke="#e0e0e0" stroke-width="0.37" >D15</text>
<text x="2803.50" y="725.70" font-size="17" fill="#e0e0e0" font-weight="normal" text-anchor="start" textLength="23.7" lengthAdjust="spacingAndGlyphs" stroke="#e0e0e0" stroke-width="0.37" >D0</text>
<line x1="2794.00" y1="719.00" x2="2802.00" y2="719.00" stroke="#d0d0d0" stroke-width="1.5" />
<path d="M2761.00 734H2769.00" fill="none" stroke="#888" stroke-width="1.2" />
<path d="M2769.00 730V742.00" fill="none" stroke="#777" stroke-width="2" />
<path d="M2770.00 729.5H2781.00" fill="none" stroke="#1a9a3a" stroke-width="2" />
<path d="M2759.00 743.5H2771.00" fill="none" stroke="#1a3aaa" stroke-width="2" />
<path d="M2773.00 736H2780.00" fill="none" stroke="#999" stroke-width="1.5" />
<text x="2788.00" y="742.00" font-size="17" fill="#e0e0e0" font-weight="normal" text-anchor="start" textLength="222.0" lengthAdjust="spacingAndGlyphs" stroke="#e0e0e0" stroke-width="0.37" >Timing Resolution: 2.00ns</text>
<text x="3104.60" y="783.00" font-size="17" fill="#e0e0e0" font-weight="normal" text-anchor="start" textLength="110.0" lengthAdjust="spacingAndGlyphs" stroke="#e0e0e0" stroke-width="0.37" >20 Aug 2025</text>
<text x="3104.60" y="800.00" font-size="17" fill="#e0e0e0" font-weight="normal" text-anchor="start" textLength="74.0" lengthAdjust="spacingAndGlyphs" stroke="#e0e0e0" stroke-width="0.37" >13:56:26</text>
<rect x="3055.20" y="707.60" width="26.50" height="16.50" rx="8.25" fill="#8a22e6" stroke="none" stroke-width="1" />
<text x="3068.45" y="720.17" font-size="13.200000000000001" fill="#1a0640" font-weight="bold" text-anchor="middle" textLength="15.9" lengthAdjust="spacingAndGlyphs" stroke="#1a0640" stroke-width="0.2">B1</text>
<text x="3087.50" y="721.40" font-size="17" fill="#e0e0e0" font-weight="normal" text-anchor="start" textLength="77.5" lengthAdjust="spacingAndGlyphs" stroke="#e0e0e0" stroke-width="0.37" >SS Active</text>
<rect x="2164.40" y="750.20" width="118.60" height="60.00" rx="4" fill="#545654" stroke="#676967" stroke-width="1" />
<rect x="2288.00" y="750.20" width="118.60" height="60.00" rx="4" fill="#545654" stroke="#676967" stroke-width="1" />
<rect x="2412.00" y="750.20" width="118.60" height="60.00" rx="4" fill="#545654" stroke="#676967" stroke-width="1" />
<rect x="2536.00" y="750.20" width="118.60" height="60.00" rx="4" fill="#545654" stroke="#676967" stroke-width="1" />
<rect x="2660.00" y="750.20" width="118.60" height="60.00" rx="4" fill="#545654" stroke="#676967" stroke-width="1" />
<rect x="2783.20" y="750.20" width="118.60" height="60.00" rx="4" fill="#545654" stroke="#676967" stroke-width="1" />
<rect x="2907.00" y="750.20" width="118.60" height="60.00" rx="4" fill="#545654" stroke="#676967" stroke-width="1" />
<text x="2193.60" y="775.40" font-size="16.5" fill="#dcdcdc" font-weight="normal" text-anchor="start" textLength="28.5" lengthAdjust="spacingAndGlyphs" stroke="#dcdcdc" stroke-width="0.36" >Bus</text>
<rect x="2229.00" y="761.70" width="26.20" height="17.60" rx="8.8" fill="#8a22e6" stroke="none" stroke-width="1" />
<text x="2242.10" y="774.82" font-size="13.200000000000001" fill="#1a0640" font-weight="bold" text-anchor="middle" textLength="15.7" lengthAdjust="spacingAndGlyphs" stroke="#1a0640" stroke-width="0.2">B1</text>
<rect x="2209.00" y="779.80" width="30.50" height="16.70" rx="0" fill="#0a78f0" stroke="none" stroke-width="1" />
<text x="2224.20" y="793.40" font-size="16.5" fill="#f0f8ff" font-weight="normal" text-anchor="middle" textLength="26.0" lengthAdjust="spacingAndGlyphs" stroke="#f0f8ff" stroke-width="0.36" >SPI</text>
<text x="2348.60" y="776.00" font-size="16.5" fill="#dcdcdc" font-weight="normal" text-anchor="middle" textLength="56.0" lengthAdjust="spacingAndGlyphs" stroke="#dcdcdc" stroke-width="0.36" >Define</text>
<text x="2348.00" y="793.40" font-size="16.5" fill="#dcdcdc" font-weight="normal" text-anchor="middle" textLength="56.0" lengthAdjust="spacingAndGlyphs" stroke="#dcdcdc" stroke-width="0.36" >Inputs</text>
<text x="2471.70" y="783.80" font-size="17" fill="#dcdcdc" font-weight="normal" text-anchor="middle" textLength="92.8" lengthAdjust="spacingAndGlyphs" stroke="#dcdcdc" stroke-width="0.37" >Thresholds</text>
<text x="2595.90" y="783.80" font-size="17" fill="#dcdcdc" font-weight="normal" text-anchor="middle" textLength="82.3" lengthAdjust="spacingAndGlyphs" stroke="#dcdcdc" stroke-width="0.37" >Configure</text>
<rect x="2682.80" y="761.70" width="26.20" height="17.60" rx="8.8" fill="#8a22e6" stroke="none" stroke-width="1" />
<text x="2695.90" y="774.82" font-size="13.200000000000001" fill="#1a0640" font-weight="bold" text-anchor="middle" textLength="15.7" lengthAdjust="spacingAndGlyphs" stroke="#1a0640" stroke-width="0.2">B1</text>
<text x="2716.50" y="775.40" font-size="16.5" fill="#dcdcdc" font-weight="normal" text-anchor="start" textLength="42.0" lengthAdjust="spacingAndGlyphs" stroke="#dcdcdc" stroke-width="0.36" >Label</text>
<rect x="2706.00" y="779.80" width="30.50" height="16.70" rx="0" fill="#0a78f0" stroke="none" stroke-width="1" />
<text x="2721.00" y="793.40" font-size="16.5" fill="#f0f8ff" font-weight="normal" text-anchor="middle" textLength="26.0" lengthAdjust="spacingAndGlyphs" stroke="#f0f8ff" stroke-width="0.36" >SPI</text>
<text x="2844.30" y="783.30" font-size="17" fill="#dcdcdc" font-weight="normal" text-anchor="middle" textLength="96.0" lengthAdjust="spacingAndGlyphs" stroke="#dcdcdc" stroke-width="0.37" >Bus Display</text>
<text x="2967.50" y="783.30" font-size="17" fill="#dcdcdc" font-weight="normal" text-anchor="middle" textLength="98.0" lengthAdjust="spacingAndGlyphs" stroke="#dcdcdc" stroke-width="0.37" >Event Table</text>
<rect x="1070.60" y="0.00" width="1.00" height="803.00" rx="0" fill="#6a6a60" stroke="none" stroke-width="1" />
<rect x="2145.00" y="0.00" width="1.00" height="803.00" rx="0" fill="#6a6a60" stroke="none" stroke-width="1" />
</svg></body></html>
